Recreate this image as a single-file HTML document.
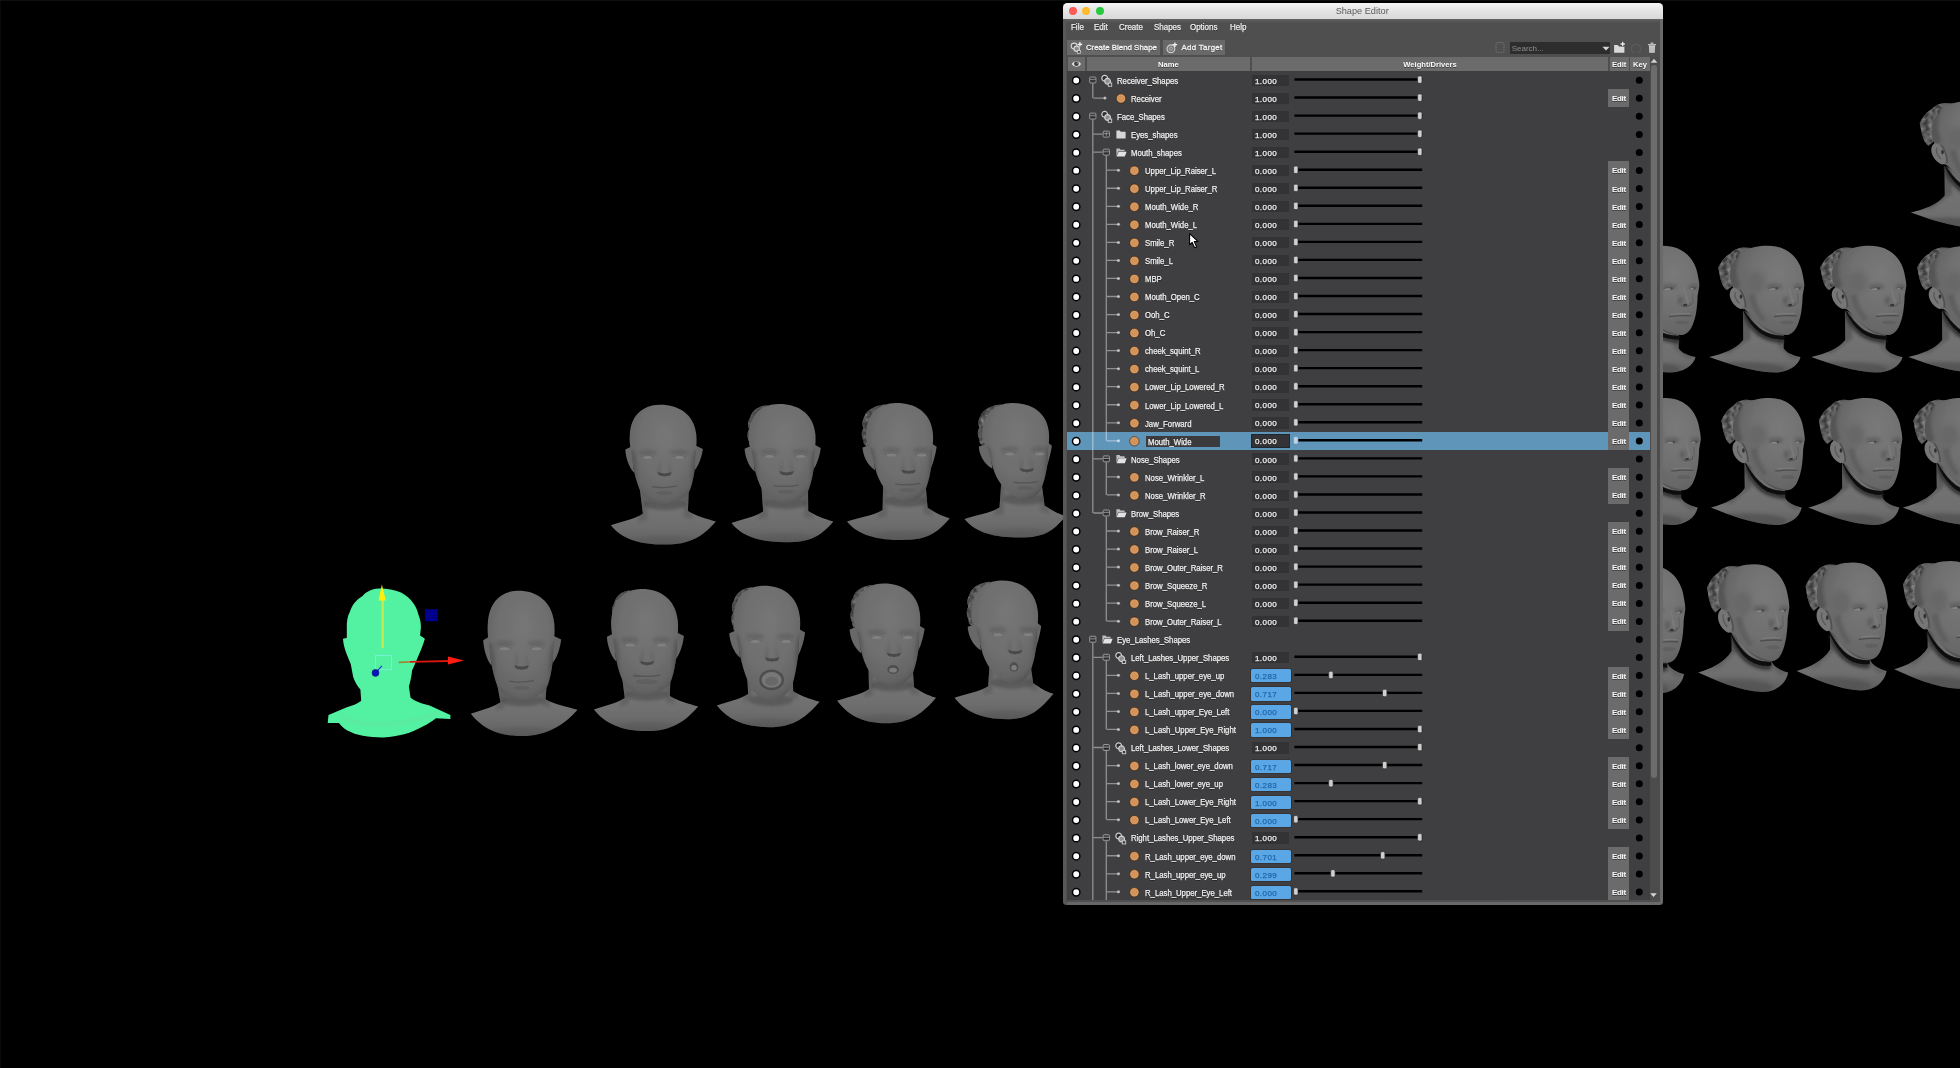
<!DOCTYPE html>
<html><head><meta charset="utf-8"><title>Shape Editor</title>
<style>
html,body{margin:0;padding:0;background:#000;}
body{width:1960px;height:1068px;overflow:hidden;position:relative;box-shadow:inset 0 1px 0 #0e0e0e,inset 1px 0 0 #0a0a0a;font-family:"Liberation Sans",sans-serif;}
#heads{position:absolute;left:0;top:0;}
#ov{position:absolute;left:0;top:0;pointer-events:none;}
#win{will-change:transform;position:absolute;left:1063.3px;top:3px;width:600px;height:901.8px;background:linear-gradient(90deg,#585858 0,#585858 4px,#666 5px,#6a6a6a 100%);border-radius:4.5px 4.5px 3.5px 3.5px;overflow:hidden;}
#title{position:absolute;left:0;top:0;width:600px;height:15.7px;background:linear-gradient(#f6f6f6,#e6e5e6 45%,#dad9da);}
.tl{position:absolute;top:4.1px;width:7.8px;height:7.8px;border-radius:50%;}
#ttext{position:absolute;left:0;width:598.4px;top:3.4px;text-align:center;font-size:9.2px;line-height:11px;color:#5a5a5a;}
#inner{position:absolute;left:2.7px;top:15.7px;width:594.2px;height:883.3px;background:linear-gradient(#666 0,#5a5a5a 1.5px,#4f4f4f 4px,#4f4f4f 100%);}
.menu{position:absolute;top:3.6px;transform:scaleX(.95);transform-origin:0 50%;font-size:8.4px;line-height:10px;color:#ededed;text-shadow:0 .8px .4px rgba(0,0,0,.55);-webkit-text-stroke:.25px #ededed;}
.tbtn{position:absolute;top:21.5px;height:14.5px;background:#686868;}
.tbtn span{position:absolute;top:2.6px;font-size:7.9px;line-height:10px;color:#f2f2f2;white-space:nowrap;text-shadow:0 .8px .4px rgba(0,0,0,.5);-webkit-text-stroke:.3px #f2f2f2;}
#search{position:absolute;left:444px;top:23.3px;width:100.4px;height:11.7px;background:#2d2d2d;border-radius:1px;}
#search span{position:absolute;left:2px;top:2.4px;font-size:8px;line-height:10px;color:#8c8c8c;}
.hd{position:absolute;top:38.5px;height:13.6px;background:#6b6b6b;text-align:center;}
.hd span{display:block;font-size:7.6px;line-height:13.6px;font-weight:bold;color:#fbfbfb;white-space:nowrap;text-shadow:0 .8px .4px rgba(0,0,0,.45);margin-top:.4px;}
#tree{position:absolute;left:1.7px;top:52.6px;width:582.3px;height:828.7px;background:#3f3f41;overflow:hidden;}
.selrow{position:absolute;left:0;width:582.3px;height:18.5px;background:#5f95b9;}
.lab{position:absolute;font-size:8.4px;line-height:18.04px;height:18.04px;color:#f1f1f1;white-space:nowrap;transform:scaleX(.925);transform-origin:0 50%;text-shadow:0 .9px .5px rgba(0,0,0,.6);-webkit-text-stroke:.25px #f1f1f1;margin-top:.5px;}
.ledit{position:absolute;width:74.8px;height:11.2px;background:#3b3b3d;}
.ledit span{position:absolute;left:2px;top:0;font-size:8.4px;line-height:11.2px;color:#f1f1f1;transform:scaleX(.925);transform-origin:0 50%;white-space:nowrap;-webkit-text-stroke:.25px #f1f1f1;margin-top:.4px;}
.num,.nums,.numb{position:absolute;}
.num{left:184.5px;width:37.5px;height:11.5px;background:#333335;}
.nums{left:184.5px;width:37.5px;height:11.5px;background:#333335;box-shadow:0 0 0 1px #1c2730;}
.numb{left:183.5px;width:39.9px;height:13.2px;background:#5ba7e5;border-radius:1.6px;box-shadow:0 0 0 .6px #2a2a2c;}
.num span,.nums span{position:absolute;left:3.1px;top:0;font-size:8px;line-height:11.5px;letter-spacing:.45px;color:#f3f3f3;text-shadow:0 .8px .4px rgba(0,0,0,.6);-webkit-text-stroke:.25px #f3f3f3;margin-top:1.1px;}
.numb span{position:absolute;left:4.1px;top:0;font-size:8px;line-height:13.2px;letter-spacing:.45px;color:#1f66ac;-webkit-text-stroke:.25px #1f66ac;margin-top:1px;}
.edit{position:absolute;left:541px;width:21.1px;height:18.1px;background:#6b6b6b;text-align:center;}
.edit span{display:block;font-size:8px;line-height:18.04px;color:#fafafa;font-weight:bold;letter-spacing:-.3px;text-shadow:0 .8px .4px rgba(0,0,0,.45);margin-top:1px;}
#sbar{position:absolute;left:584px;top:38.5px;width:10.2px;height:842.8px;background:#4c4c4c;}
#shandle{position:absolute;left:585.3px;top:46.7px;width:6.1px;height:713px;border-radius:3px;background:#6c6c6c;}

</style></head>
<body>
<svg id="heads" width="1960" height="1068" viewBox="0 0 1960 1068">
<defs>
<filter id="b1" x="-10%" y="-10%" width="120%" height="120%"><feGaussianBlur stdDeviation="0.7"/></filter>
<filter id="b2" x="-30%" y="-30%" width="160%" height="160%"><feGaussianBlur stdDeviation="1.6"/></filter>
<filter id="bun" x="0" y="0" width="100%" height="100%"><feTurbulence type="fractalNoise" baseFrequency="0.22" numOctaves="2" seed="7" result="n"/><feColorMatrix in="n" type="matrix" values="0 0 0 0 0  0 0 0 0 0  0 0 0 0 0  1.6 1.6 0 0 -1.1" result="a"/><feFlood flood-color="#3a3a3a"/><feComposite operator="in" in2="a" result="d"/><feComposite in="d" in2="SourceGraphic" operator="in" result="dd"/><feColorMatrix in="n" type="matrix" values="0 0 0 0 0  0 0 0 0 0  0 0 0 0 0  0 -2.2 -1 0 1.35" result="a2"/><feFlood flood-color="#909090"/><feComposite operator="in" in2="a2" result="l"/><feComposite in="l" in2="SourceGraphic" operator="in" result="ll"/><feMerge><feMergeNode in="SourceGraphic"/><feMergeNode in="dd"/><feMergeNode in="ll"/></feMerge></filter>
<filter id="b3" x="-40%" y="-40%" width="180%" height="180%"><feGaussianBlur stdDeviation="3"/></filter>
<radialGradient id="gHead" cx="0.51" cy="0.40" r="0.66" fx="0.53" fy="0.30">
<stop offset="0" stop-color="#767676"/><stop offset="0.6" stop-color="#6e6e6e"/><stop offset="0.86" stop-color="#646464"/><stop offset="1" stop-color="#4e4e4e"/>
</radialGradient>
<linearGradient id="gSh" x1="0" y1="0" x2="0" y2="1">
<stop offset="0" stop-color="#666666"/><stop offset="0.4" stop-color="#737373"/><stop offset="0.75" stop-color="#6c6c6c"/><stop offset="1" stop-color="#5c5c5c"/>
</linearGradient>
<radialGradient id="gQHead" cx="0.62" cy="0.42" r="0.74" fx="0.66" fy="0.30">
<stop offset="0" stop-color="#797979"/><stop offset="0.5" stop-color="#707070"/><stop offset="0.82" stop-color="#646464"/><stop offset="1" stop-color="#505050"/>
</radialGradient>
<linearGradient id="gQSh" x1="0" y1="0" x2="0" y2="1">
<stop offset="0" stop-color="#6a6a6a"/><stop offset="0.5" stop-color="#727272"/><stop offset="0.8" stop-color="#6e6e6e"/><stop offset="1" stop-color="#5c5c5c"/>
</linearGradient>
<linearGradient id="gQNeck" x1="0" y1="0" x2="1" y2="0">
<stop offset="0" stop-color="#595959"/><stop offset="0.5" stop-color="#6e6e6e"/><stop offset="1" stop-color="#5a5a5a"/>
</linearGradient>
</defs>
<clipPath id="h1s"><path d="M470.8 713.7 C480.8 710.2 491.5 707.7 500.5 702.2 L496.5 680.8 L547.0 680.8 L545.5 699.3 C553.5 704.3 567.5 706.8 577.5 709.8 C564.5 724.8 546.8 736.1 521.8 736.1 C496.8 736.1 481.8 727.7 470.8 713.7Z"/></clipPath><clipPath id="h1"><path d="M517.2 590.8 C535.0 590.3 552.0 599.8 554.3 623.3 C555.0 630.8 554.4 636.8 553.6 642.8 L552.7 661.8 C551.8 668.8 550.6 676.8 548.0 684.8 C545.0 692.8 533.0 700.6 521.8 700.6 C511.0 700.6 501.0 693.8 497.5 686.8 C494.6 678.8 492.6 670.8 491.2 662.8 L488.8 642.8 C487.6 634.8 487.4 628.8 487.8 623.8 C489.0 601.8 501.0 591.3 517.2 590.8Z"/></clipPath>
<g filter="url(#b1)">
<path d="M470.8 713.7 C480.8 710.2 491.5 707.7 500.5 702.2 L496.5 680.8 L547.0 680.8 L545.5 699.3 C553.5 704.3 567.5 706.8 577.5 709.8 C564.5 724.8 546.8 736.1 521.8 736.1 C496.8 736.1 481.8 727.7 470.8 713.7Z" fill="url(#gSh)"/>
<g clip-path="url(#h1s)">
<path d="M499.5 676.8L505.5 676.8L504.5 708.2L495.5 710.2Z" fill="#525252" opacity=".45" filter="url(#b2)"/>
<path d="M546.5 676.8L540.5 676.8L541.5 705.3L550.5 707.3Z" fill="#525252" opacity=".45" filter="url(#b2)"/>
<ellipse cx="522.0" cy="700.3" rx="22.0" ry="6" fill="#4c4c4c" opacity=".6" filter="url(#b2)"/>
<ellipse cx="521.8" cy="734.1" rx="30" ry="6" fill="#545454" opacity=".35" filter="url(#b2)"/>
</g>
<path d="M489.0 636.8 L483.2 640.3 C483.6 648.8 486.5 659.8 491.5 665.8 Z" fill="#686868"/><path d="M553.4 635.8 L561.2 639.5 C560.0 648.8 557.0 657.8 552.5 663.3 Z" fill="#666"/>
<path d="M517.2 590.8 C535.0 590.3 552.0 599.8 554.3 623.3 C555.0 630.8 554.4 636.8 553.6 642.8 L552.7 661.8 C551.8 668.8 550.6 676.8 548.0 684.8 C545.0 692.8 533.0 700.6 521.8 700.6 C511.0 700.6 501.0 693.8 497.5 686.8 C494.6 678.8 492.6 670.8 491.2 662.8 L488.8 642.8 C487.6 634.8 487.4 628.8 487.8 623.8 C489.0 601.8 501.0 591.3 517.2 590.8Z" fill="url(#gHead)"/>
<g clip-path="url(#h1)">
<ellipse cx="490.0" cy="664.8" rx="5" ry="22" fill="#484848" opacity=".45" filter="url(#b2)"/>
<ellipse cx="554.0" cy="664.8" rx="5" ry="22" fill="#484848" opacity=".5" filter="url(#b2)"/>
<ellipse cx="504.5" cy="643.8" rx="9" ry="3.2" fill="#5a5a5a" opacity=".5" filter="url(#b2)"/>
<ellipse cx="504.5" cy="648.2" rx="5.2" ry="2.1" fill="#808080" filter="url(#b1)"/>
<path d="M498.5 648.6 Q504.5 644.6 510.5 648.4" stroke="#5a5a5a" stroke-width=".9" fill="none" opacity=".8"/>
<ellipse cx="536.5" cy="643.8" rx="9" ry="3.2" fill="#5a5a5a" opacity=".5" filter="url(#b2)"/>
<ellipse cx="536.5" cy="648.2" rx="5.2" ry="2.1" fill="#808080" filter="url(#b1)"/>
<path d="M530.5 648.6 Q536.5 644.6 542.5 648.4" stroke="#5a5a5a" stroke-width=".9" fill="none" opacity=".8"/>
<path d="M517.8 650.8 L514.4 663.8 L517.4 667.3 Z" fill="#5a5a5a" opacity=".45" filter="url(#b2)"/>
<path d="M525.0 650.8 L528.8 663.8 L525.8 667.3 Z" fill="#5c5c5c" opacity=".4" filter="url(#b2)"/>
<path d="M514.6 665.0 Q515.4 670.0 519.4 669.2 L521.6 670.0 L523.8 669.2 Q528.0 670.0 528.6 665.0 Q521.6 668.2 514.6 665.0Z" fill="#424242" opacity=".85" filter="url(#b1)"/>
<path d="M509.0 681.1 Q521.5 683.2 534.0 680.6" stroke="#525252" stroke-width="1.3" fill="none" opacity=".9"/>
<ellipse cx="521.5" cy="687.8" rx="8" ry="2" fill="#5a5a5a" opacity=".55" filter="url(#b1)"/>
</g></g>
<clipPath id="h2s"><path d="M593.9 709.5 C603.9 706.0 615.8 703.5 624.8 698.0 L621.9 675.9 L670.5 675.9 L669.8 695.9 C677.8 700.9 688.2 703.4 698.2 706.4 C685.2 721.4 671.5 731.1 646.5 731.1 C621.5 731.1 604.9 723.5 593.9 709.5Z"/></clipPath><clipPath id="h2"><path d="M640.7 588.9 C658.5 588.4 675.5 597.6 677.8 620.3 C678.5 627.6 677.9 633.4 677.1 639.2 L676.2 657.6 C675.3 664.3 674.1 672.1 671.5 679.8 C668.7 687.5 657.8 695.1 646.9 695.1 C636.3 695.1 627.0 688.5 623.1 681.7 C619.6 674.0 617.5 666.3 616.0 658.5 L613.1 639.2 C611.1 631.4 610.9 625.6 611.3 620.8 C612.5 599.5 624.5 589.4 640.7 588.9Z"/></clipPath>
<g filter="url(#b1)">
<path d="M593.9 709.5 C603.9 706.0 615.8 703.5 624.8 698.0 L621.9 675.9 L670.5 675.9 L669.8 695.9 C677.8 700.9 688.2 703.4 698.2 706.4 C685.2 721.4 671.5 731.1 646.5 731.1 C621.5 731.1 604.9 723.5 593.9 709.5Z" fill="url(#gSh)"/>
<g clip-path="url(#h2s)">
<path d="M623.8 672.1L629.8 672.1L628.8 704.0L619.8 706.0Z" fill="#525252" opacity=".45" filter="url(#b2)"/>
<path d="M670.8 672.1L664.8 672.1L665.8 701.9L674.8 703.9Z" fill="#525252" opacity=".45" filter="url(#b2)"/>
<ellipse cx="646.9" cy="694.8" rx="22.0" ry="6" fill="#4c4c4c" opacity=".6" filter="url(#b2)"/>
<ellipse cx="646.5" cy="729.1" rx="30" ry="6" fill="#545454" opacity=".35" filter="url(#b2)"/>
</g>
<path d="M630.5 590.4 C622.5 590.4 615.6 595.7 614.1 603.4 C611.6 607.3 611.2 612.1 613.0 616.0 C610.6 619.8 611.0 625.6 613.2 629.5 C612.6 632.4 614.6 635.3 613.5 636.3 L620.5 598.6Z" fill="#636363" filter="url(#bun)"/>
<path d="M613.5 633.4 L606.9 636.8 C607.3 645.0 610.4 655.6 616.2 661.4 Z" fill="#686868"/><path d="M676.9 632.4 L684.0 636.0 C682.8 645.0 679.9 653.7 676.0 659.0 Z" fill="#666"/>
<path d="M640.7 588.9 C658.5 588.4 675.5 597.6 677.8 620.3 C678.5 627.6 677.9 633.4 677.1 639.2 L676.2 657.6 C675.3 664.3 674.1 672.1 671.5 679.8 C668.7 687.5 657.8 695.1 646.9 695.1 C636.3 695.1 627.0 688.5 623.1 681.7 C619.6 674.0 617.5 666.3 616.0 658.5 L613.1 639.2 C611.1 631.4 610.9 625.6 611.3 620.8 C612.5 599.5 624.5 589.4 640.7 588.9Z" fill="url(#gHead)"/>
<g clip-path="url(#h2)">
<ellipse cx="614.1" cy="660.5" rx="5" ry="22" fill="#484848" opacity=".45" filter="url(#b2)"/>
<ellipse cx="677.7" cy="660.5" rx="5" ry="22" fill="#484848" opacity=".5" filter="url(#b2)"/>
<ellipse cx="630.0" cy="640.2" rx="9" ry="3.2" fill="#5a5a5a" opacity=".5" filter="url(#b2)"/>
<ellipse cx="630.0" cy="644.4" rx="5.2" ry="2.1" fill="#808080" filter="url(#b1)"/>
<path d="M624.0 644.8 Q630.0 640.9 636.0 644.6" stroke="#5a5a5a" stroke-width=".9" fill="none" opacity=".8"/>
<ellipse cx="661.6" cy="640.2" rx="9" ry="3.2" fill="#5a5a5a" opacity=".5" filter="url(#b2)"/>
<ellipse cx="661.6" cy="644.4" rx="5.2" ry="2.1" fill="#808080" filter="url(#b1)"/>
<path d="M655.6 644.8 Q661.6 640.9 667.6 644.6" stroke="#5a5a5a" stroke-width=".9" fill="none" opacity=".8"/>
<path d="M643.1 646.9 L639.9 659.5 L642.9 662.9 Z" fill="#5a5a5a" opacity=".45" filter="url(#b2)"/>
<path d="M650.3 646.9 L654.3 659.5 L651.3 662.9 Z" fill="#5c5c5c" opacity=".4" filter="url(#b2)"/>
<path d="M640.1 660.7 Q640.9 665.5 644.9 664.7 L647.1 665.5 L649.3 664.7 Q653.5 665.5 654.1 660.7 Q647.1 663.7 640.1 660.7Z" fill="#424242" opacity=".85" filter="url(#b1)"/>
<path d="M633.3 675.4 Q646.8 677.9 660.3 675.0" stroke="#555" stroke-width="1.6" fill="none" filter="url(#b1)"/>
<ellipse cx="646.8" cy="681.7" rx="11" ry="2.6" fill="#5a5a5a" opacity=".55" filter="url(#b1)"/>
</g></g>
<clipPath id="h3s"><path d="M716.8 705.6 C726.8 702.1 739.2 699.6 748.2 694.1 L746.9 672.2 L792.6 672.2 L793.2 691.2 C801.2 696.2 809.6 698.7 819.6 701.7 C806.6 716.7 794.3 727.2 769.3 727.2 C744.3 727.2 727.8 719.6 716.8 705.6Z"/></clipPath><clipPath id="h3"><path d="M762.8 585.8 C780.6 585.3 797.6 594.4 799.9 617.0 C800.6 624.2 800.0 630.0 799.2 635.7 L798.3 654.0 C797.4 660.7 796.2 670.2 793.6 680.6 C791.2 691.9 781.9 700.3 771.5 700.3 C761.1 700.3 752.9 692.9 748.4 682.5 C744.0 672.1 741.6 662.6 739.9 654.9 L736.4 635.7 C733.2 628.0 733.0 622.3 733.4 617.5 C734.6 596.4 746.6 586.3 762.8 585.8Z"/></clipPath>
<g filter="url(#b1)">
<path d="M716.8 705.6 C726.8 702.1 739.2 699.6 748.2 694.1 L746.9 672.2 L792.6 672.2 L793.2 691.2 C801.2 696.2 809.6 698.7 819.6 701.7 C806.6 716.7 794.3 727.2 769.3 727.2 C744.3 727.2 727.8 719.6 716.8 705.6Z" fill="url(#gSh)"/>
<g clip-path="url(#h3s)">
<path d="M747.2 668.4L753.2 668.4L752.2 700.1L743.2 702.1Z" fill="#525252" opacity=".45" filter="url(#b2)"/>
<path d="M794.2 668.4L788.2 668.4L789.2 697.2L798.2 699.2Z" fill="#525252" opacity=".45" filter="url(#b2)"/>
<ellipse cx="771.1" cy="700.0" rx="22.0" ry="6" fill="#4c4c4c" opacity=".6" filter="url(#b2)"/>
<ellipse cx="769.3" cy="725.2" rx="30" ry="6" fill="#545454" opacity=".35" filter="url(#b2)"/>
</g>
<path d="M752.6 587.2 C744.6 587.2 735.6 592.5 734.1 600.2 C731.6 604.0 731.2 608.8 733.0 612.7 C730.6 616.5 731.0 622.3 733.2 626.1 C732.6 629.0 734.6 631.9 735.6 632.8 L742.6 595.4Z" fill="#636363" filter="url(#bun)"/>
<path d="M737.1 630.0 L729.3 633.3 C729.7 641.5 733.1 652.0 740.1 657.8 Z" fill="#686868"/><path d="M799.0 629.0 L805.1 632.6 C803.9 641.5 801.1 650.1 798.1 655.4 Z" fill="#666"/>
<path d="M762.8 585.8 C780.6 585.3 797.6 594.4 799.9 617.0 C800.6 624.2 800.0 630.0 799.2 635.7 L798.3 654.0 C797.4 660.7 796.2 670.2 793.6 680.6 C791.2 691.9 781.9 700.3 771.5 700.3 C761.1 700.3 752.9 692.9 748.4 682.5 C744.0 672.1 741.6 662.6 739.9 654.9 L736.4 635.7 C733.2 628.0 733.0 622.3 733.4 617.5 C734.6 596.4 746.6 586.3 762.8 585.8Z" fill="url(#gHead)"/>
<g clip-path="url(#h3)">
<ellipse cx="737.1" cy="656.8" rx="5" ry="22" fill="#484848" opacity=".45" filter="url(#b2)"/>
<ellipse cx="800.1" cy="656.8" rx="5" ry="22" fill="#484848" opacity=".5" filter="url(#b2)"/>
<ellipse cx="755.1" cy="636.7" rx="9" ry="3.2" fill="#5a5a5a" opacity=".5" filter="url(#b2)"/>
<ellipse cx="755.1" cy="640.9" rx="5.2" ry="2.1" fill="#808080" filter="url(#b1)"/>
<path d="M749.1 641.3 Q755.1 637.4 761.1 641.1" stroke="#5a5a5a" stroke-width=".9" fill="none" opacity=".8"/>
<ellipse cx="786.1" cy="636.7" rx="9" ry="3.2" fill="#5a5a5a" opacity=".5" filter="url(#b2)"/>
<ellipse cx="786.1" cy="640.9" rx="5.2" ry="2.1" fill="#808080" filter="url(#b1)"/>
<path d="M780.1 641.3 Q786.1 637.4 792.1 641.1" stroke="#5a5a5a" stroke-width=".9" fill="none" opacity=".8"/>
<path d="M767.9 643.4 L765.0 655.9 L768.0 659.2 Z" fill="#5a5a5a" opacity=".45" filter="url(#b2)"/>
<path d="M775.1 643.4 L779.4 655.9 L776.4 659.2 Z" fill="#5c5c5c" opacity=".4" filter="url(#b2)"/>
<path d="M765.2 657.0 Q766.0 661.8 770.0 661.1 L772.2 661.8 L774.4 661.1 Q778.6 661.8 779.2 657.0 Q772.2 660.1 765.2 657.0Z" fill="#424242" opacity=".85" filter="url(#b1)"/>
<ellipse cx="771.6" cy="679.9" rx="12.4" ry="10.4" fill="#4e4e4e"/>
<ellipse cx="771.6" cy="679.9" rx="10" ry="7.8" fill="#777"/>
<ellipse cx="771.6" cy="681.3" rx="6.5" ry="4.5" fill="#686868"/>
</g></g>
<clipPath id="h4s"><path d="M837.1 700.8 C847.1 697.3 860.0 694.8 869.0 689.3 L868.5 667.2 L912.7 667.2 L914.0 687.3 C922.0 692.3 926.1 694.8 936.1 697.8 C923.1 712.8 911.1 723.3 886.1 723.3 C861.1 723.3 848.1 714.8 837.1 700.8Z"/></clipPath><clipPath id="h4"><path d="M882.9 583.5 C900.7 583.0 917.7 591.9 920.0 613.7 C920.7 620.7 920.1 626.3 919.3 631.9 L918.4 649.5 C917.5 656.0 916.3 663.5 913.7 670.9 C911.5 678.4 903.0 685.6 892.9 685.6 C882.7 685.6 875.0 679.3 870.2 672.8 C865.2 665.3 862.8 657.9 861.0 650.5 L857.1 631.9 C853.3 624.4 853.1 618.8 853.5 614.2 C854.7 593.7 866.7 584.0 882.9 583.5Z"/></clipPath>
<g filter="url(#b1)">
<path d="M837.1 700.8 C847.1 697.3 860.0 694.8 869.0 689.3 L868.5 667.2 L912.7 667.2 L914.0 687.3 C922.0 692.3 926.1 694.8 936.1 697.8 C923.1 712.8 911.1 723.3 886.1 723.3 C861.1 723.3 848.1 714.8 837.1 700.8Z" fill="url(#gSh)"/>
<g clip-path="url(#h4s)">
<path d="M868.0 663.5L874.0 663.5L873.0 695.3L864.0 697.3Z" fill="#525252" opacity=".45" filter="url(#b2)"/>
<path d="M915.0 663.5L909.0 663.5L910.0 693.3L919.0 695.3Z" fill="#525252" opacity=".45" filter="url(#b2)"/>
<ellipse cx="892.3" cy="685.3" rx="22.0" ry="6" fill="#4c4c4c" opacity=".6" filter="url(#b2)"/>
<ellipse cx="886.1" cy="721.3" rx="30" ry="6" fill="#545454" opacity=".35" filter="url(#b2)"/>
</g>
<path d="M872.7 584.9 C864.7 584.9 854.6 590.0 853.1 597.5 C850.6 601.2 850.2 605.8 852.0 609.5 C849.6 613.3 850.0 618.8 852.2 622.6 C851.6 625.4 853.6 628.1 855.7 629.1 L862.7 592.8Z" fill="#636363" filter="url(#bun)"/>
<path d="M858.0 626.3 L849.6 629.5 C850.0 637.4 853.5 647.7 861.2 653.2 Z" fill="#686868"/><path d="M919.1 625.4 L924.6 628.8 C923.4 637.4 920.7 645.8 918.2 650.9 Z" fill="#666"/>
<path d="M882.9 583.5 C900.7 583.0 917.7 591.9 920.0 613.7 C920.7 620.7 920.1 626.3 919.3 631.9 L918.4 649.5 C917.5 656.0 916.3 663.5 913.7 670.9 C911.5 678.4 903.0 685.6 892.9 685.6 C882.7 685.6 875.0 679.3 870.2 672.8 C865.2 665.3 862.8 657.9 861.0 650.5 L857.1 631.9 C853.3 624.4 853.1 618.8 853.5 614.2 C854.7 593.7 866.7 584.0 882.9 583.5Z" fill="url(#gHead)"/>
<g clip-path="url(#h4)">
<ellipse cx="857.7" cy="652.3" rx="5" ry="22" fill="#484848" opacity=".45" filter="url(#b2)"/>
<ellipse cx="920.4" cy="652.3" rx="5" ry="22" fill="#484848" opacity=".5" filter="url(#b2)"/>
<ellipse cx="876.8" cy="632.8" rx="9" ry="3.2" fill="#5a5a5a" opacity=".5" filter="url(#b2)"/>
<ellipse cx="876.8" cy="636.9" rx="5.2" ry="2.1" fill="#808080" filter="url(#b1)"/>
<path d="M870.8 637.3 Q876.8 633.5 882.8 637.1" stroke="#5a5a5a" stroke-width=".9" fill="none" opacity=".8"/>
<ellipse cx="907.5" cy="632.8" rx="9" ry="3.2" fill="#5a5a5a" opacity=".5" filter="url(#b2)"/>
<ellipse cx="907.5" cy="636.9" rx="5.2" ry="2.1" fill="#808080" filter="url(#b1)"/>
<path d="M901.5 637.3 Q907.5 633.5 913.5 637.1" stroke="#5a5a5a" stroke-width=".9" fill="none" opacity=".8"/>
<path d="M889.4 639.3 L886.7 651.4 L889.7 654.6 Z" fill="#5a5a5a" opacity=".45" filter="url(#b2)"/>
<path d="M896.6 639.3 L901.1 651.4 L898.1 654.6 Z" fill="#5c5c5c" opacity=".4" filter="url(#b2)"/>
<path d="M886.9 652.5 Q887.7 657.2 891.7 656.4 L893.9 657.2 L896.1 656.4 Q900.3 657.2 900.9 652.5 Q893.9 655.5 886.9 652.5Z" fill="#424242" opacity=".85" filter="url(#b1)"/>
<ellipse cx="893.1" cy="669.5" rx="5.8" ry="4.4" fill="#4e4e4e" filter="url(#b1)"/>
<ellipse cx="893.1" cy="670.2" rx="3.8" ry="2.4" fill="#7c7c7c"/>
</g></g>
<clipPath id="h5s"><path d="M954.5 697.8 C964.5 694.3 979.2 691.8 988.2 686.3 L989.5 664.5 L1030.5 664.5 L1033.2 683.2 C1041.2 688.2 1043.5 690.7 1053.5 693.7 C1040.5 708.7 1031.5 719.2 1006.5 719.2 C981.5 719.2 965.5 711.8 954.5 697.8Z"/></clipPath><clipPath id="h5"><path d="M1000.7 580.4 C1018.5 579.9 1035.5 588.8 1037.8 610.8 C1038.5 617.8 1037.9 623.4 1037.1 629.0 L1036.2 646.8 C1035.3 653.3 1034.1 660.8 1031.5 668.3 C1029.7 675.8 1023.1 683.1 1013.5 683.1 C1003.5 683.1 997.0 676.7 991.6 670.2 C985.6 662.7 983.0 655.2 981.0 647.7 L976.3 629.0 C971.1 621.5 970.9 615.9 971.3 611.3 C972.5 590.7 984.5 580.9 1000.7 580.4Z"/></clipPath>
<g filter="url(#b1)">
<path d="M954.5 697.8 C964.5 694.3 979.2 691.8 988.2 686.3 L989.5 664.5 L1030.5 664.5 L1033.2 683.2 C1041.2 688.2 1043.5 690.7 1053.5 693.7 C1040.5 708.7 1031.5 719.2 1006.5 719.2 C981.5 719.2 965.5 711.8 954.5 697.8Z" fill="url(#gSh)"/>
<g clip-path="url(#h5s)">
<path d="M987.2 660.8L993.2 660.8L992.2 692.3L983.2 694.3Z" fill="#525252" opacity=".45" filter="url(#b2)"/>
<path d="M1034.2 660.8L1028.2 660.8L1029.2 689.2L1038.2 691.2Z" fill="#525252" opacity=".45" filter="url(#b2)"/>
<ellipse cx="1012.5" cy="682.8" rx="22.0" ry="6" fill="#4c4c4c" opacity=".6" filter="url(#b2)"/>
<ellipse cx="1006.5" cy="717.2" rx="30" ry="6" fill="#545454" opacity=".35" filter="url(#b2)"/>
</g>
<path d="M990.5 581.8 C982.5 581.8 971.0 586.9 969.5 594.4 C967.0 598.2 966.6 602.8 968.4 606.6 C966.0 610.3 966.4 615.9 968.6 619.7 C968.0 622.5 970.0 625.3 973.5 626.2 L980.5 589.8Z" fill="#636363" filter="url(#bun)"/>
<path d="M977.5 623.4 L967.7 626.7 C968.1 634.6 972.0 644.9 981.0 650.5 Z" fill="#686868"/><path d="M1036.9 622.5 L1041.2 625.9 C1040.0 634.6 1037.5 643.0 1036.0 648.2 Z" fill="#666"/>
<path d="M1000.7 580.4 C1018.5 579.9 1035.5 588.8 1037.8 610.8 C1038.5 617.8 1037.9 623.4 1037.1 629.0 L1036.2 646.8 C1035.3 653.3 1034.1 660.8 1031.5 668.3 C1029.7 675.8 1023.1 683.1 1013.5 683.1 C1003.5 683.1 997.0 676.7 991.6 670.2 C985.6 662.7 983.0 655.2 981.0 647.7 L976.3 629.0 C971.1 621.5 970.9 615.9 971.3 611.3 C972.5 590.7 984.5 580.9 1000.7 580.4Z" fill="url(#gHead)"/>
<g clip-path="url(#h5)">
<ellipse cx="976.5" cy="649.6" rx="5" ry="22" fill="#484848" opacity=".45" filter="url(#b2)"/>
<ellipse cx="1038.5" cy="649.6" rx="5" ry="22" fill="#484848" opacity=".5" filter="url(#b2)"/>
<ellipse cx="998.0" cy="630.0" rx="9" ry="3.2" fill="#5a5a5a" opacity=".5" filter="url(#b2)"/>
<ellipse cx="998.0" cy="634.1" rx="5.2" ry="2.1" fill="#808080" filter="url(#b1)"/>
<path d="M992.0 634.4 Q998.0 630.7 1004.0 634.3" stroke="#5a5a5a" stroke-width=".9" fill="none" opacity=".8"/>
<ellipse cx="1028.0" cy="630.0" rx="9" ry="3.2" fill="#5a5a5a" opacity=".5" filter="url(#b2)"/>
<ellipse cx="1028.0" cy="634.1" rx="5.2" ry="2.1" fill="#808080" filter="url(#b1)"/>
<path d="M1022.0 634.4 Q1028.0 630.7 1034.0 634.3" stroke="#5a5a5a" stroke-width=".9" fill="none" opacity=".8"/>
<path d="M1010.3 636.5 L1007.9 648.7 L1010.9 651.9 Z" fill="#5a5a5a" opacity=".45" filter="url(#b2)"/>
<path d="M1017.5 636.5 L1022.3 648.7 L1019.3 651.9 Z" fill="#5c5c5c" opacity=".4" filter="url(#b2)"/>
<path d="M1008.1 649.8 Q1008.9 654.5 1012.9 653.7 L1015.1 654.5 L1017.3 653.7 Q1021.5 654.5 1022.1 649.8 Q1015.1 652.8 1008.1 649.8Z" fill="#424242" opacity=".85" filter="url(#b1)"/>
<ellipse cx="1014.0" cy="666.9" rx="4.4" ry="4.6" fill="#4e4e4e" filter="url(#b1)"/>
<ellipse cx="1014.0" cy="667.7" rx="2.8" ry="2.6" fill="#7c7c7c"/>
</g></g>
<clipPath id="h6s"><path d="M610.8 525.2 C620.8 521.7 633.9 519.2 642.9 513.7 L639.5 486.4 L689.0 486.4 L687.9 510.9 C695.9 515.9 705.9 518.4 715.9 521.4 C702.9 536.4 690.0 544.6 665.0 544.6 C640.0 544.6 621.8 539.2 610.8 525.2Z"/></clipPath><clipPath id="h6"><path d="M659.2 404.7 C677.0 404.2 694.0 412.9 696.3 434.2 C697.0 441.0 696.4 446.5 695.6 451.9 L694.7 469.2 C693.8 475.5 692.6 482.8 690.0 490.1 C687.1 497.3 675.7 504.4 664.6 504.4 C653.9 504.4 644.2 498.2 640.6 491.9 C637.4 484.6 635.3 477.3 633.8 470.1 L631.2 451.9 C629.6 444.7 629.4 439.2 629.8 434.7 C631.0 414.7 643.0 405.2 659.2 404.7Z"/></clipPath>
<g filter="url(#b1)">
<path d="M610.8 525.2 C620.8 521.7 633.9 519.2 642.9 513.7 L639.5 486.4 L689.0 486.4 L687.9 510.9 C695.9 515.9 705.9 518.4 715.9 521.4 C702.9 536.4 690.0 544.6 665.0 544.6 C640.0 544.6 621.8 539.2 610.8 525.2Z" fill="url(#gSh)"/>
<g clip-path="url(#h6s)">
<path d="M641.9 482.8L647.9 482.8L646.9 519.7L637.9 521.7Z" fill="#525252" opacity=".45" filter="url(#b2)"/>
<path d="M688.9 482.8L682.9 482.8L683.9 516.9L692.9 518.9Z" fill="#525252" opacity=".45" filter="url(#b2)"/>
<ellipse cx="664.7" cy="504.1" rx="22.0" ry="6" fill="#4c4c4c" opacity=".6" filter="url(#b2)"/>
<ellipse cx="665.0" cy="542.6" rx="30" ry="6" fill="#545454" opacity=".35" filter="url(#b2)"/>
</g>
<path d="M631.5 446.5 L625.3 449.6 C625.7 457.4 628.7 467.4 634.1 472.8 Z" fill="#686868"/><path d="M695.4 445.6 L702.9 448.9 C701.6 457.4 698.7 465.5 694.5 470.5 Z" fill="#666"/>
<path d="M659.2 404.7 C677.0 404.2 694.0 412.9 696.3 434.2 C697.0 441.0 696.4 446.5 695.6 451.9 L694.7 469.2 C693.8 475.5 692.6 482.8 690.0 490.1 C687.1 497.3 675.7 504.4 664.6 504.4 C653.9 504.4 644.2 498.2 640.6 491.9 C637.4 484.6 635.3 477.3 633.8 470.1 L631.2 451.9 C629.6 444.7 629.4 439.2 629.8 434.7 C631.0 414.7 643.0 405.2 659.2 404.7Z" fill="url(#gHead)"/>
<g clip-path="url(#h6)">
<ellipse cx="632.3" cy="471.9" rx="5" ry="22" fill="#484848" opacity=".45" filter="url(#b2)"/>
<ellipse cx="696.1" cy="471.9" rx="5" ry="22" fill="#484848" opacity=".5" filter="url(#b2)"/>
<ellipse cx="647.5" cy="452.8" rx="9" ry="3.2" fill="#5a5a5a" opacity=".5" filter="url(#b2)"/>
<ellipse cx="647.5" cy="456.8" rx="5.2" ry="2.1" fill="#808080" filter="url(#b1)"/>
<path d="M641.5 457.2 Q647.5 453.6 653.5 457.0" stroke="#5a5a5a" stroke-width=".9" fill="none" opacity=".8"/>
<ellipse cx="679.3" cy="452.8" rx="9" ry="3.2" fill="#5a5a5a" opacity=".5" filter="url(#b2)"/>
<ellipse cx="679.3" cy="456.8" rx="5.2" ry="2.1" fill="#808080" filter="url(#b1)"/>
<path d="M673.3 457.2 Q679.3 453.6 685.3 457.0" stroke="#5a5a5a" stroke-width=".9" fill="none" opacity=".8"/>
<path d="M660.7 459.2 L657.4 471.0 L660.4 474.2 Z" fill="#5a5a5a" opacity=".45" filter="url(#b2)"/>
<path d="M667.9 459.2 L671.8 471.0 L668.8 474.2 Z" fill="#5c5c5c" opacity=".4" filter="url(#b2)"/>
<path d="M657.6 472.1 Q658.4 476.6 662.4 475.9 L664.6 476.6 L666.8 475.9 Q671.0 476.6 671.6 472.1 Q664.6 475.0 657.6 472.1Z" fill="#424242" opacity=".85" filter="url(#b1)"/>
<path d="M651.9 486.7 Q664.4 488.6 676.9 486.2" stroke="#525252" stroke-width="1.3" fill="none" opacity=".9"/>
<ellipse cx="664.4" cy="492.8" rx="8" ry="2" fill="#5a5a5a" opacity=".55" filter="url(#b1)"/>
</g></g>
<clipPath id="h7s"><path d="M731.4 523.0 C741.4 519.5 754.2 517.0 763.2 511.5 L761.3 485.3 L808.0 485.3 L808.2 510.9 C816.2 515.9 823.4 518.4 833.4 521.4 C820.4 536.4 810.5 542.2 785.5 542.2 C760.5 542.2 742.4 537.0 731.4 523.0Z"/></clipPath><clipPath id="h7"><path d="M778.2 403.9 C796.0 403.4 813.0 412.0 815.3 433.3 C816.0 440.1 815.4 445.5 814.6 451.0 L813.7 468.2 C812.8 474.5 811.6 481.7 809.0 489.0 C806.5 496.2 796.6 503.3 786.1 503.3 C775.6 503.3 767.0 497.1 762.8 490.8 C758.6 483.5 756.4 476.3 754.7 469.1 L751.4 451.0 C748.6 443.7 748.4 438.3 748.8 433.8 C750.0 413.9 762.0 404.4 778.2 403.9Z"/></clipPath>
<g filter="url(#b1)">
<path d="M731.4 523.0 C741.4 519.5 754.2 517.0 763.2 511.5 L761.3 485.3 L808.0 485.3 L808.2 510.9 C816.2 515.9 823.4 518.4 833.4 521.4 C820.4 536.4 810.5 542.2 785.5 542.2 C760.5 542.2 742.4 537.0 731.4 523.0Z" fill="url(#gSh)"/>
<g clip-path="url(#h7s)">
<path d="M762.2 481.7L768.2 481.7L767.2 517.5L758.2 519.5Z" fill="#525252" opacity=".45" filter="url(#b2)"/>
<path d="M809.2 481.7L803.2 481.7L804.2 516.9L813.2 518.9Z" fill="#525252" opacity=".45" filter="url(#b2)"/>
<ellipse cx="785.8" cy="503.0" rx="22.0" ry="6" fill="#4c4c4c" opacity=".6" filter="url(#b2)"/>
<ellipse cx="785.5" cy="540.2" rx="30" ry="6" fill="#545454" opacity=".35" filter="url(#b2)"/>
</g>
<path d="M768.0 405.3 C760.0 405.3 751.7 410.2 750.2 417.5 C747.7 421.1 747.3 425.6 749.1 429.2 C746.7 432.9 747.1 438.3 749.3 441.9 C748.7 444.6 750.7 447.3 751.0 448.2 L758.0 412.9Z" fill="#636363" filter="url(#bun)"/>
<path d="M752.0 445.5 L744.6 448.7 C745.0 456.4 748.3 466.3 754.9 471.8 Z" fill="#686868"/><path d="M814.4 444.6 L820.8 448.0 C819.6 456.4 816.8 464.5 813.5 469.5 Z" fill="#666"/>
<path d="M778.2 403.9 C796.0 403.4 813.0 412.0 815.3 433.3 C816.0 440.1 815.4 445.5 814.6 451.0 L813.7 468.2 C812.8 474.5 811.6 481.7 809.0 489.0 C806.5 496.2 796.6 503.3 786.1 503.3 C775.6 503.3 767.0 497.1 762.8 490.8 C758.6 483.5 756.4 476.3 754.7 469.1 L751.4 451.0 C748.6 443.7 748.4 438.3 748.8 433.8 C750.0 413.9 762.0 404.4 778.2 403.9Z" fill="url(#gHead)"/>
<g clip-path="url(#h7)">
<ellipse cx="752.2" cy="470.9" rx="5" ry="22" fill="#484848" opacity=".45" filter="url(#b2)"/>
<ellipse cx="815.4" cy="470.9" rx="5" ry="22" fill="#484848" opacity=".5" filter="url(#b2)"/>
<ellipse cx="769.5" cy="451.9" rx="9" ry="3.2" fill="#5a5a5a" opacity=".5" filter="url(#b2)"/>
<ellipse cx="769.5" cy="455.8" rx="5.2" ry="2.1" fill="#808080" filter="url(#b1)"/>
<path d="M763.5 456.2 Q769.5 452.6 775.5 456.0" stroke="#5a5a5a" stroke-width=".9" fill="none" opacity=".8"/>
<ellipse cx="800.7" cy="451.9" rx="9" ry="3.2" fill="#5a5a5a" opacity=".5" filter="url(#b2)"/>
<ellipse cx="800.7" cy="455.8" rx="5.2" ry="2.1" fill="#808080" filter="url(#b1)"/>
<path d="M794.7 456.2 Q800.7 452.6 806.7 456.0" stroke="#5a5a5a" stroke-width=".9" fill="none" opacity=".8"/>
<path d="M782.4 458.2 L779.4 470.0 L782.4 473.1 Z" fill="#5a5a5a" opacity=".45" filter="url(#b2)"/>
<path d="M789.6 458.2 L793.8 470.0 L790.8 473.1 Z" fill="#5c5c5c" opacity=".4" filter="url(#b2)"/>
<path d="M779.6 471.1 Q780.4 475.6 784.4 474.9 L786.6 475.6 L788.8 474.9 Q793.0 475.6 793.6 471.1 Q786.6 473.9 779.6 471.1Z" fill="#424242" opacity=".85" filter="url(#b1)"/>
<path d="M773.6 485.6 Q786.1 487.5 798.6 485.2" stroke="#525252" stroke-width="1.3" fill="none" opacity=".9"/>
<ellipse cx="786.1" cy="491.7" rx="8" ry="2" fill="#5a5a5a" opacity=".55" filter="url(#b1)"/>
</g></g>
<clipPath id="h8s"><path d="M847.0 521.4 C857.0 517.9 873.6 515.4 882.6 509.9 L883.1 483.7 L925.5 483.7 L927.6 507.8 C935.6 512.8 939.8 515.3 949.8 518.3 C936.8 533.3 927.6 540.0 902.6 540.0 C877.6 540.0 858.0 535.4 847.0 521.4Z"/></clipPath><clipPath id="h8"><path d="M895.7 403.1 C913.5 402.7 930.5 411.2 932.8 432.2 C933.5 438.9 932.9 444.3 932.1 449.6 L931.2 466.6 C930.3 472.9 929.1 480.1 926.5 487.2 C924.5 494.4 917.1 501.4 907.3 501.4 C897.2 501.4 890.1 495.3 885.0 489.0 C879.5 481.9 876.9 474.7 875.0 467.5 L870.7 449.6 C866.1 442.5 865.9 437.1 866.3 432.6 C867.5 412.9 879.5 403.5 895.7 403.1Z"/></clipPath>
<g filter="url(#b1)">
<path d="M847.0 521.4 C857.0 517.9 873.6 515.4 882.6 509.9 L883.1 483.7 L925.5 483.7 L927.6 507.8 C935.6 512.8 939.8 515.3 949.8 518.3 C936.8 533.3 927.6 540.0 902.6 540.0 C877.6 540.0 858.0 535.4 847.0 521.4Z" fill="url(#gSh)"/>
<g clip-path="url(#h8s)">
<path d="M881.6 480.1L887.6 480.1L886.6 515.9L877.6 517.9Z" fill="#525252" opacity=".45" filter="url(#b2)"/>
<path d="M928.6 480.1L922.6 480.1L923.6 513.8L932.6 515.8Z" fill="#525252" opacity=".45" filter="url(#b2)"/>
<ellipse cx="906.5" cy="501.1" rx="22.0" ry="6" fill="#4c4c4c" opacity=".6" filter="url(#b2)"/>
<ellipse cx="902.6" cy="538.0" rx="30" ry="6" fill="#545454" opacity=".35" filter="url(#b2)"/>
</g>
<path d="M885.5 404.4 C877.5 404.4 866.0 409.4 864.5 416.5 C862.0 420.1 861.6 424.6 863.4 428.2 C861.0 431.7 861.4 437.1 863.6 440.7 C863.0 443.4 865.0 446.1 868.5 447.0 L875.5 412.1Z" fill="#636363" filter="url(#bun)"/>
<path d="M871.8 444.3 L862.5 447.4 C863.0 455.0 866.7 464.9 875.1 470.2 Z" fill="#686868"/><path d="M931.9 443.4 L936.7 446.7 C935.5 455.0 933.0 463.1 931.0 468.0 Z" fill="#666"/>
<path d="M895.7 403.1 C913.5 402.7 930.5 411.2 932.8 432.2 C933.5 438.9 932.9 444.3 932.1 449.6 L931.2 466.6 C930.3 472.9 929.1 480.1 926.5 487.2 C924.5 494.4 917.1 501.4 907.3 501.4 C897.2 501.4 890.1 495.3 885.0 489.0 C879.5 481.9 876.9 474.7 875.0 467.5 L870.7 449.6 C866.1 442.5 865.9 437.1 866.3 432.6 C867.5 412.9 879.5 403.5 895.7 403.1Z" fill="url(#gHead)"/>
<g clip-path="url(#h8)">
<ellipse cx="871.0" cy="469.3" rx="5" ry="22" fill="#484848" opacity=".45" filter="url(#b2)"/>
<ellipse cx="933.4" cy="469.3" rx="5" ry="22" fill="#484848" opacity=".5" filter="url(#b2)"/>
<ellipse cx="891.5" cy="450.5" rx="9" ry="3.2" fill="#5a5a5a" opacity=".5" filter="url(#b2)"/>
<ellipse cx="891.5" cy="454.5" rx="5.2" ry="2.1" fill="#808080" filter="url(#b1)"/>
<path d="M885.5 454.8 Q891.5 451.3 897.5 454.7" stroke="#5a5a5a" stroke-width=".9" fill="none" opacity=".8"/>
<ellipse cx="921.8" cy="450.5" rx="9" ry="3.2" fill="#5a5a5a" opacity=".5" filter="url(#b2)"/>
<ellipse cx="921.8" cy="454.5" rx="5.2" ry="2.1" fill="#808080" filter="url(#b1)"/>
<path d="M915.8 454.8 Q921.8 451.3 927.8 454.7" stroke="#5a5a5a" stroke-width=".9" fill="none" opacity=".8"/>
<path d="M904.0 456.8 L901.4 468.4 L904.4 471.6 Z" fill="#5a5a5a" opacity=".45" filter="url(#b2)"/>
<path d="M911.1 456.8 L915.8 468.4 L912.8 471.6 Z" fill="#5c5c5c" opacity=".4" filter="url(#b2)"/>
<path d="M901.6 469.5 Q902.4 474.0 906.4 473.3 L908.6 474.0 L910.8 473.3 Q915.0 474.0 915.6 469.5 Q908.6 472.4 901.6 469.5Z" fill="#424242" opacity=".85" filter="url(#b1)"/>
<path d="M895.1 483.9 Q907.6 485.8 920.1 483.5" stroke="#525252" stroke-width="1.3" fill="none" opacity=".9"/>
<ellipse cx="907.6" cy="489.9" rx="8" ry="2" fill="#5a5a5a" opacity=".55" filter="url(#b1)"/>
</g></g>
<clipPath id="h9s"><path d="M964.5 519.0 C974.5 515.5 990.5 513.0 999.5 507.5 L1001.3 481.9 L1041.5 481.9 L1044.5 505.5 C1052.5 510.5 1056.0 513.0 1066.0 516.0 C1053.0 531.0 1045.0 537.6 1020.0 537.6 C995.0 537.6 975.5 533.0 964.5 519.0Z"/></clipPath><clipPath id="h9"><path d="M1011.7 403.1 C1029.5 402.7 1046.5 411.0 1048.8 431.5 C1049.5 438.1 1048.9 443.4 1048.1 448.6 L1047.2 465.2 C1046.3 471.4 1045.1 478.4 1042.5 485.4 C1040.8 492.4 1034.6 499.2 1025.2 499.2 C1015.2 499.2 1009.0 493.2 1003.5 487.1 C997.2 480.1 994.5 473.1 992.5 466.1 L987.6 448.6 C982.1 441.6 981.9 436.4 982.3 432.0 C983.5 412.7 995.5 403.5 1011.7 403.1Z"/></clipPath>
<g filter="url(#b1)">
<path d="M964.5 519.0 C974.5 515.5 990.5 513.0 999.5 507.5 L1001.3 481.9 L1041.5 481.9 L1044.5 505.5 C1052.5 510.5 1056.0 513.0 1066.0 516.0 C1053.0 531.0 1045.0 537.6 1020.0 537.6 C995.0 537.6 975.5 533.0 964.5 519.0Z" fill="url(#gSh)"/>
<g clip-path="url(#h9s)">
<path d="M998.5 478.4L1004.5 478.4L1003.5 513.5L994.5 515.5Z" fill="#525252" opacity=".45" filter="url(#b2)"/>
<path d="M1045.5 478.4L1039.5 478.4L1040.5 511.5L1049.5 513.5Z" fill="#525252" opacity=".45" filter="url(#b2)"/>
<ellipse cx="1024.1" cy="498.9" rx="22.0" ry="6" fill="#4c4c4c" opacity=".6" filter="url(#b2)"/>
<ellipse cx="1020.0" cy="535.6" rx="30" ry="6" fill="#545454" opacity=".35" filter="url(#b2)"/>
</g>
<path d="M1001.5 404.4 C993.5 404.4 982.0 409.2 980.5 416.2 C978.0 419.7 977.6 424.1 979.4 427.6 C977.0 431.1 977.4 436.4 979.6 439.9 C979.0 442.5 981.0 445.1 984.5 446.0 L991.5 411.9Z" fill="#636363" filter="url(#bun)"/>
<path d="M988.9 443.4 L978.8 446.4 C979.2 453.9 983.2 463.5 992.5 468.7 Z" fill="#686868"/><path d="M1047.9 442.5 L1051.9 445.7 C1050.7 453.9 1048.3 461.7 1047.0 466.5 Z" fill="#666"/>
<path d="M1011.7 403.1 C1029.5 402.7 1046.5 411.0 1048.8 431.5 C1049.5 438.1 1048.9 443.4 1048.1 448.6 L1047.2 465.2 C1046.3 471.4 1045.1 478.4 1042.5 485.4 C1040.8 492.4 1034.6 499.2 1025.2 499.2 C1015.2 499.2 1009.0 493.2 1003.5 487.1 C997.2 480.1 994.5 473.1 992.5 466.1 L987.6 448.6 C982.1 441.6 981.9 436.4 982.3 432.0 C983.5 412.7 995.5 403.5 1011.7 403.1Z" fill="url(#gHead)"/>
<g clip-path="url(#h9)">
<ellipse cx="987.7" cy="467.9" rx="5" ry="22" fill="#484848" opacity=".45" filter="url(#b2)"/>
<ellipse cx="1049.6" cy="467.9" rx="5" ry="22" fill="#484848" opacity=".5" filter="url(#b2)"/>
<ellipse cx="1009.8" cy="449.5" rx="9" ry="3.2" fill="#5a5a5a" opacity=".5" filter="url(#b2)"/>
<ellipse cx="1009.8" cy="453.3" rx="5.2" ry="2.1" fill="#808080" filter="url(#b1)"/>
<path d="M1003.8 453.7 Q1009.8 450.2 1015.8 453.5" stroke="#5a5a5a" stroke-width=".9" fill="none" opacity=".8"/>
<ellipse cx="1039.6" cy="449.5" rx="9" ry="3.2" fill="#5a5a5a" opacity=".5" filter="url(#b2)"/>
<ellipse cx="1039.6" cy="453.3" rx="5.2" ry="2.1" fill="#808080" filter="url(#b1)"/>
<path d="M1033.6 453.7 Q1039.6 450.2 1045.6 453.5" stroke="#5a5a5a" stroke-width=".9" fill="none" opacity=".8"/>
<path d="M1022.0 455.6 L1019.7 467.0 L1022.7 470.0 Z" fill="#5a5a5a" opacity=".45" filter="url(#b2)"/>
<path d="M1029.2 455.6 L1034.1 467.0 L1031.1 470.0 Z" fill="#5c5c5c" opacity=".4" filter="url(#b2)"/>
<path d="M1019.9 468.0 Q1020.7 472.4 1024.7 471.7 L1026.9 472.4 L1029.1 471.7 Q1033.3 472.4 1033.9 468.0 Q1026.9 470.8 1019.9 468.0Z" fill="#424242" opacity=".85" filter="url(#b1)"/>
<path d="M1013.2 482.1 Q1025.7 484.0 1038.2 481.7" stroke="#525252" stroke-width="1.3" fill="none" opacity=".9"/>
<ellipse cx="1025.7" cy="488.0" rx="8" ry="2" fill="#5a5a5a" opacity=".55" filter="url(#b1)"/>
</g></g>
<clipPath id="qh"><path d="M68 10.8 C79 10.8 87 14.5 92.7 20.1 C98.5 26 101.8 33 102.8 40.2 C103.6 44 104.4 47.5 104.3 51 C103.8 54.5 103 58 102.6 61 C102.6 66 102 72 101.2 77.3 C100.6 80.5 99.8 84 98.9 86.6 C97.8 90 96.4 93.2 94.3 95.8 C92 98.5 89.5 99.9 86.6 100 C82 100.2 78 99.8 74.2 98.9 C69.5 97 65.5 94.3 61.8 91.2 C57.5 87.5 54 84 51 80.4 L44.8 74.2 L41 73.4 L33.2 53.3 C31.5 49 30.3 44 30.1 38.6 C30.5 32.5 33 27 37.1 23.2 C40.5 19 45 15.5 51 13.1 C56 11.4 62 10.8 68 10.8Z"/></clipPath><clipPath id="qs"><path d="M9.3 122.1 C22 119 36 114.5 43.3 105 L43 75 L84 98 L83.5 113 C86 118 93 120.5 100.5 122.1 C98.5 131 88 137.8 74.2 137.6 C52 137 27 128.5 9.3 122.1Z"/></clipPath>
<g transform="translate(1595.0 235.0)" filter="url(#b1)">
<g transform="">
<path d="M9.3 122.1 C22 119 36 114.5 43.3 105 L43 75 L84 98 L83.5 113 C86 118 93 120.5 100.5 122.1 C98.5 131 88 137.8 74.2 137.6 C52 137 27 128.5 9.3 122.1Z" fill="url(#gQSh)"/>
<g clip-path="url(#qs)">
<path d="M42 74 L50 78 L50 104 L30 118 L20 118 L42 106Z" fill="#4c4c4c" opacity=".55" filter="url(#b2)"/>
<path d="M84.5 99 L78 99 L78 112 L92 124 L102 124 L84 112Z" fill="#505050" opacity=".5" filter="url(#b2)"/>
<ellipse cx="45" cy="134" rx="40" ry="7" fill="#484848" opacity=".5" filter="url(#b2)"/>
</g></g>
<g transform="">
<path d="M43 74 C48 84 55 92 62 97 C69 101.5 77 103 85 102.6 L85 108 C75 108.6 64 105.6 56 99 C49 93 45 85 43 80Z" fill="#1c1c1c" opacity=".7" filter="url(#b2)"/>
<path d="M42.8 72.8 C48 82 55 90 62 95 C69 99.5 77 101 85.5 100.6 L85.5 104.4 C76 105 67.5 103 61 98.6 C53.6 93.4 47 84.6 42.8 75Z" fill="#0a0a0a" filter="url(#b1)"/>
<path d="M52 13.1 L43.3 12.6 C37 13.2 33 15.5 30.4 18.5 C25.5 21 21.5 26 18.2 32.5 C19.3 37 19.6 42 21.4 46.4 C22.3 50 24.3 53.4 27 55.2 L33.5 50 L36 24Z" fill="#6e6e6e" filter="url(#bun)"/>
<path d="M68 10.8 C79 10.8 87 14.5 92.7 20.1 C98.5 26 101.8 33 102.8 40.2 C103.6 44 104.4 47.5 104.3 51 C103.8 54.5 103 58 102.6 61 C102.6 66 102 72 101.2 77.3 C100.6 80.5 99.8 84 98.9 86.6 C97.8 90 96.4 93.2 94.3 95.8 C92 98.5 89.5 99.9 86.6 100 C82 100.2 78 99.8 74.2 98.9 C69.5 97 65.5 94.3 61.8 91.2 C57.5 87.5 54 84 51 80.4 L44.8 74.2 L41 73.4 L33.2 53.3 C31.5 49 30.3 44 30.1 38.6 C30.5 32.5 33 27 37.1 23.2 C40.5 19 45 15.5 51 13.1 C56 11.4 62 10.8 68 10.8Z" fill="url(#gQHead)"/>
<g clip-path="url(#qh)">
<path d="M30 20 C26 34 28 48 34 56 L40 50 C35 40 35 28 40 18Z" fill="#484848" opacity=".55" filter="url(#b2)"/>
<ellipse cx="56" cy="47" rx="9" ry="10" fill="#585858" opacity=".4" filter="url(#b3)"/>
<path d="M48 60 C50 70 55 79 62 86 L66 84 C59 76 56 68 55 59Z" fill="#525252" opacity=".5" filter="url(#b2)"/>
<path d="M46 76 C54 88 66 98 86 101" stroke="#4a4a4a" stroke-width="2.4" fill="none" opacity=".6" filter="url(#b1)"/>
<ellipse cx="74.5" cy="51.4" rx="8" ry="2.8" fill="#565656" opacity=".55" filter="url(#b2)"/>
<ellipse cx="98.8" cy="51.4" rx="5" ry="2.6" fill="#565656" opacity=".55" filter="url(#b2)"/>
<path d="M68.4 54.4 Q73 52.2 78.8 53.8 Q73.6 56 68.4 54.4Z" fill="#868686" filter="url(#b1)"/>
<path d="M68.2 53.6 Q73 51.2 79.2 53.2" stroke="#505050" stroke-width=".8" fill="none" opacity=".8"/>
<circle cx="76.5" cy="53.5" r="1.3" fill="#484848"/>
<path d="M94 54 Q97.6 52 101.8 53.4 Q98 55.4 94 54Z" fill="#848484" filter="url(#b1)"/>
<path d="M93.8 53.4 Q97.6 51.2 102 52.8" stroke="#505050" stroke-width=".8" fill="none" opacity=".8"/>
<circle cx="99.6" cy="53.4" r="1.2" fill="#4a4a4a"/>
<path d="M90 53 C91 58 92.4 63 94.6 67 L92 68 C90.4 63 89.4 58 89 53Z" fill="#7e7e7e" opacity=".7" filter="url(#b1)"/>
<path d="M83.2 62.5 C82.4 66 83.4 69.4 86 70.8 C87 68 88 65.6 88.6 62Z" fill="#525252" opacity=".6" filter="url(#b2)"/>
<path d="M86.2 70.6 Q89 72.4 92 71.4 L95.6 69.8 Q96.2 68.6 95.4 67.4" stroke="#4c4c4c" stroke-width="1" fill="none" opacity=".8"/>
<ellipse cx="90.2" cy="69.9" rx="2.2" ry="1.1" fill="#363636"/>
<path d="M97.2 58 C97.8 62 98.2 65 97.8 68.6" stroke="#5a5a5a" stroke-width="1.5" fill="none" opacity=".5" filter="url(#b1)"/>
<path d="M73.8 81.6 Q84 80.2 96.8 80.8" stroke="#4e4e4e" stroke-width="1.3" fill="none"/>
<path d="M76 79.4 Q85 78 95 78.8" stroke="#808080" stroke-width="1.1" fill="none" opacity=".8"/>
<ellipse cx="87" cy="87.4" rx="7" ry="1.8" fill="#5a5a5a" opacity=".6" filter="url(#b1)"/>
</g>
<path d="M33.8 52.2 C30.3 53.8 29.2 58 30 61.8 C31 66.5 34.5 71.6 40.5 74 C43.2 73.7 44.6 71 44.2 67.5 C43.2 61 39.7 54.3 33.8 52.2Z" fill="#767676"/>
<path d="M35.4 57 C34.2 60 35.6 64.6 39.4 68.6" stroke="#5a5a5a" stroke-width="1.4" fill="none"/>
<ellipse cx="41" cy="61.6" rx="1.3" ry="2.2" fill="#2e2e2e"/>
<path d="M40 54.6 C43.6 59.6 45.8 66 45.6 72.6" stroke="#4a4a4a" stroke-width="1.6" fill="none" opacity=".8" filter="url(#b1)"/>
</g></g>
<g transform="translate(1700.0 235.0)" filter="url(#b1)">
<g transform="">
<path d="M9.3 122.1 C22 119 36 114.5 43.3 105 L43 75 L84 98 L83.5 113 C86 118 93 120.5 100.5 122.1 C98.5 131 88 137.8 74.2 137.6 C52 137 27 128.5 9.3 122.1Z" fill="url(#gQSh)"/>
<g clip-path="url(#qs)">
<path d="M42 74 L50 78 L50 104 L30 118 L20 118 L42 106Z" fill="#4c4c4c" opacity=".55" filter="url(#b2)"/>
<path d="M84.5 99 L78 99 L78 112 L92 124 L102 124 L84 112Z" fill="#505050" opacity=".5" filter="url(#b2)"/>
<ellipse cx="45" cy="134" rx="40" ry="7" fill="#484848" opacity=".5" filter="url(#b2)"/>
</g></g>
<g transform="">
<path d="M43 74 C48 84 55 92 62 97 C69 101.5 77 103 85 102.6 L85 108 C75 108.6 64 105.6 56 99 C49 93 45 85 43 80Z" fill="#1c1c1c" opacity=".7" filter="url(#b2)"/>
<path d="M42.8 72.8 C48 82 55 90 62 95 C69 99.5 77 101 85.5 100.6 L85.5 104.4 C76 105 67.5 103 61 98.6 C53.6 93.4 47 84.6 42.8 75Z" fill="#0a0a0a" filter="url(#b1)"/>
<path d="M52 13.1 L43.3 12.6 C37 13.2 33 15.5 30.4 18.5 C25.5 21 21.5 26 18.2 32.5 C19.3 37 19.6 42 21.4 46.4 C22.3 50 24.3 53.4 27 55.2 L33.5 50 L36 24Z" fill="#6e6e6e" filter="url(#bun)"/>
<path d="M68 10.8 C79 10.8 87 14.5 92.7 20.1 C98.5 26 101.8 33 102.8 40.2 C103.6 44 104.4 47.5 104.3 51 C103.8 54.5 103 58 102.6 61 C102.6 66 102 72 101.2 77.3 C100.6 80.5 99.8 84 98.9 86.6 C97.8 90 96.4 93.2 94.3 95.8 C92 98.5 89.5 99.9 86.6 100 C82 100.2 78 99.8 74.2 98.9 C69.5 97 65.5 94.3 61.8 91.2 C57.5 87.5 54 84 51 80.4 L44.8 74.2 L41 73.4 L33.2 53.3 C31.5 49 30.3 44 30.1 38.6 C30.5 32.5 33 27 37.1 23.2 C40.5 19 45 15.5 51 13.1 C56 11.4 62 10.8 68 10.8Z" fill="url(#gQHead)"/>
<g clip-path="url(#qh)">
<path d="M30 20 C26 34 28 48 34 56 L40 50 C35 40 35 28 40 18Z" fill="#484848" opacity=".55" filter="url(#b2)"/>
<ellipse cx="56" cy="47" rx="9" ry="10" fill="#585858" opacity=".4" filter="url(#b3)"/>
<path d="M48 60 C50 70 55 79 62 86 L66 84 C59 76 56 68 55 59Z" fill="#525252" opacity=".5" filter="url(#b2)"/>
<path d="M46 76 C54 88 66 98 86 101" stroke="#4a4a4a" stroke-width="2.4" fill="none" opacity=".6" filter="url(#b1)"/>
<ellipse cx="74.5" cy="51.4" rx="8" ry="2.8" fill="#565656" opacity=".55" filter="url(#b2)"/>
<ellipse cx="98.8" cy="51.4" rx="5" ry="2.6" fill="#565656" opacity=".55" filter="url(#b2)"/>
<path d="M68.4 54.4 Q73 52.2 78.8 53.8 Q73.6 56 68.4 54.4Z" fill="#868686" filter="url(#b1)"/>
<path d="M68.2 53.6 Q73 51.2 79.2 53.2" stroke="#505050" stroke-width=".8" fill="none" opacity=".8"/>
<circle cx="76.5" cy="53.5" r="1.3" fill="#484848"/>
<path d="M94 54 Q97.6 52 101.8 53.4 Q98 55.4 94 54Z" fill="#848484" filter="url(#b1)"/>
<path d="M93.8 53.4 Q97.6 51.2 102 52.8" stroke="#505050" stroke-width=".8" fill="none" opacity=".8"/>
<circle cx="99.6" cy="53.4" r="1.2" fill="#4a4a4a"/>
<path d="M90 53 C91 58 92.4 63 94.6 67 L92 68 C90.4 63 89.4 58 89 53Z" fill="#7e7e7e" opacity=".7" filter="url(#b1)"/>
<path d="M83.2 62.5 C82.4 66 83.4 69.4 86 70.8 C87 68 88 65.6 88.6 62Z" fill="#525252" opacity=".6" filter="url(#b2)"/>
<path d="M86.2 70.6 Q89 72.4 92 71.4 L95.6 69.8 Q96.2 68.6 95.4 67.4" stroke="#4c4c4c" stroke-width="1" fill="none" opacity=".8"/>
<ellipse cx="90.2" cy="69.9" rx="2.2" ry="1.1" fill="#363636"/>
<path d="M97.2 58 C97.8 62 98.2 65 97.8 68.6" stroke="#5a5a5a" stroke-width="1.5" fill="none" opacity=".5" filter="url(#b1)"/>
<path d="M73.8 81.6 Q84 80.2 96.8 80.8" stroke="#4e4e4e" stroke-width="1.3" fill="none"/>
<path d="M76 79.4 Q85 78 95 78.8" stroke="#808080" stroke-width="1.1" fill="none" opacity=".8"/>
<ellipse cx="87" cy="87.4" rx="7" ry="1.8" fill="#5a5a5a" opacity=".6" filter="url(#b1)"/>
</g>
<path d="M33.8 52.2 C30.3 53.8 29.2 58 30 61.8 C31 66.5 34.5 71.6 40.5 74 C43.2 73.7 44.6 71 44.2 67.5 C43.2 61 39.7 54.3 33.8 52.2Z" fill="#767676"/>
<path d="M35.4 57 C34.2 60 35.6 64.6 39.4 68.6" stroke="#5a5a5a" stroke-width="1.4" fill="none"/>
<ellipse cx="41" cy="61.6" rx="1.3" ry="2.2" fill="#2e2e2e"/>
<path d="M40 54.6 C43.6 59.6 45.8 66 45.6 72.6" stroke="#4a4a4a" stroke-width="1.6" fill="none" opacity=".8" filter="url(#b1)"/>
</g></g>
<g transform="translate(1802.0 235.0)" filter="url(#b1)">
<g transform="">
<path d="M9.3 122.1 C22 119 36 114.5 43.3 105 L43 75 L84 98 L83.5 113 C86 118 93 120.5 100.5 122.1 C98.5 131 88 137.8 74.2 137.6 C52 137 27 128.5 9.3 122.1Z" fill="url(#gQSh)"/>
<g clip-path="url(#qs)">
<path d="M42 74 L50 78 L50 104 L30 118 L20 118 L42 106Z" fill="#4c4c4c" opacity=".55" filter="url(#b2)"/>
<path d="M84.5 99 L78 99 L78 112 L92 124 L102 124 L84 112Z" fill="#505050" opacity=".5" filter="url(#b2)"/>
<ellipse cx="45" cy="134" rx="40" ry="7" fill="#484848" opacity=".5" filter="url(#b2)"/>
</g></g>
<g transform="">
<path d="M43 74 C48 84 55 92 62 97 C69 101.5 77 103 85 102.6 L85 108 C75 108.6 64 105.6 56 99 C49 93 45 85 43 80Z" fill="#1c1c1c" opacity=".7" filter="url(#b2)"/>
<path d="M42.8 72.8 C48 82 55 90 62 95 C69 99.5 77 101 85.5 100.6 L85.5 104.4 C76 105 67.5 103 61 98.6 C53.6 93.4 47 84.6 42.8 75Z" fill="#0a0a0a" filter="url(#b1)"/>
<path d="M52 13.1 L43.3 12.6 C37 13.2 33 15.5 30.4 18.5 C25.5 21 21.5 26 18.2 32.5 C19.3 37 19.6 42 21.4 46.4 C22.3 50 24.3 53.4 27 55.2 L33.5 50 L36 24Z" fill="#6e6e6e" filter="url(#bun)"/>
<path d="M68 10.8 C79 10.8 87 14.5 92.7 20.1 C98.5 26 101.8 33 102.8 40.2 C103.6 44 104.4 47.5 104.3 51 C103.8 54.5 103 58 102.6 61 C102.6 66 102 72 101.2 77.3 C100.6 80.5 99.8 84 98.9 86.6 C97.8 90 96.4 93.2 94.3 95.8 C92 98.5 89.5 99.9 86.6 100 C82 100.2 78 99.8 74.2 98.9 C69.5 97 65.5 94.3 61.8 91.2 C57.5 87.5 54 84 51 80.4 L44.8 74.2 L41 73.4 L33.2 53.3 C31.5 49 30.3 44 30.1 38.6 C30.5 32.5 33 27 37.1 23.2 C40.5 19 45 15.5 51 13.1 C56 11.4 62 10.8 68 10.8Z" fill="url(#gQHead)"/>
<g clip-path="url(#qh)">
<path d="M30 20 C26 34 28 48 34 56 L40 50 C35 40 35 28 40 18Z" fill="#484848" opacity=".55" filter="url(#b2)"/>
<ellipse cx="56" cy="47" rx="9" ry="10" fill="#585858" opacity=".4" filter="url(#b3)"/>
<path d="M48 60 C50 70 55 79 62 86 L66 84 C59 76 56 68 55 59Z" fill="#525252" opacity=".5" filter="url(#b2)"/>
<path d="M46 76 C54 88 66 98 86 101" stroke="#4a4a4a" stroke-width="2.4" fill="none" opacity=".6" filter="url(#b1)"/>
<ellipse cx="74.5" cy="51.4" rx="8" ry="2.8" fill="#565656" opacity=".55" filter="url(#b2)"/>
<ellipse cx="98.8" cy="51.4" rx="5" ry="2.6" fill="#565656" opacity=".55" filter="url(#b2)"/>
<path d="M68.4 54.4 Q73 52.2 78.8 53.8 Q73.6 56 68.4 54.4Z" fill="#868686" filter="url(#b1)"/>
<path d="M68.2 53.6 Q73 51.2 79.2 53.2" stroke="#505050" stroke-width=".8" fill="none" opacity=".8"/>
<circle cx="76.5" cy="53.5" r="1.3" fill="#484848"/>
<path d="M94 54 Q97.6 52 101.8 53.4 Q98 55.4 94 54Z" fill="#848484" filter="url(#b1)"/>
<path d="M93.8 53.4 Q97.6 51.2 102 52.8" stroke="#505050" stroke-width=".8" fill="none" opacity=".8"/>
<circle cx="99.6" cy="53.4" r="1.2" fill="#4a4a4a"/>
<path d="M90 53 C91 58 92.4 63 94.6 67 L92 68 C90.4 63 89.4 58 89 53Z" fill="#7e7e7e" opacity=".7" filter="url(#b1)"/>
<path d="M83.2 62.5 C82.4 66 83.4 69.4 86 70.8 C87 68 88 65.6 88.6 62Z" fill="#525252" opacity=".6" filter="url(#b2)"/>
<path d="M86.2 70.6 Q89 72.4 92 71.4 L95.6 69.8 Q96.2 68.6 95.4 67.4" stroke="#4c4c4c" stroke-width="1" fill="none" opacity=".8"/>
<ellipse cx="90.2" cy="69.9" rx="2.2" ry="1.1" fill="#363636"/>
<path d="M97.2 58 C97.8 62 98.2 65 97.8 68.6" stroke="#5a5a5a" stroke-width="1.5" fill="none" opacity=".5" filter="url(#b1)"/>
<path d="M73.8 81.6 Q84 80.2 96.8 80.8" stroke="#4e4e4e" stroke-width="1.3" fill="none"/>
<path d="M76 79.4 Q85 78 95 78.8" stroke="#808080" stroke-width="1.1" fill="none" opacity=".8"/>
<ellipse cx="87" cy="87.4" rx="7" ry="1.8" fill="#5a5a5a" opacity=".6" filter="url(#b1)"/>
</g>
<path d="M33.8 52.2 C30.3 53.8 29.2 58 30 61.8 C31 66.5 34.5 71.6 40.5 74 C43.2 73.7 44.6 71 44.2 67.5 C43.2 61 39.7 54.3 33.8 52.2Z" fill="#767676"/>
<path d="M35.4 57 C34.2 60 35.6 64.6 39.4 68.6" stroke="#5a5a5a" stroke-width="1.4" fill="none"/>
<ellipse cx="41" cy="61.6" rx="1.3" ry="2.2" fill="#2e2e2e"/>
<path d="M40 54.6 C43.6 59.6 45.8 66 45.6 72.6" stroke="#4a4a4a" stroke-width="1.6" fill="none" opacity=".8" filter="url(#b1)"/>
</g></g>
<g transform="translate(1899.0 235.0)" filter="url(#b1)">
<g transform="">
<path d="M9.3 122.1 C22 119 36 114.5 43.3 105 L43 75 L84 98 L83.5 113 C86 118 93 120.5 100.5 122.1 C98.5 131 88 137.8 74.2 137.6 C52 137 27 128.5 9.3 122.1Z" fill="url(#gQSh)"/>
<g clip-path="url(#qs)">
<path d="M42 74 L50 78 L50 104 L30 118 L20 118 L42 106Z" fill="#4c4c4c" opacity=".55" filter="url(#b2)"/>
<path d="M84.5 99 L78 99 L78 112 L92 124 L102 124 L84 112Z" fill="#505050" opacity=".5" filter="url(#b2)"/>
<ellipse cx="45" cy="134" rx="40" ry="7" fill="#484848" opacity=".5" filter="url(#b2)"/>
</g></g>
<g transform="">
<path d="M43 74 C48 84 55 92 62 97 C69 101.5 77 103 85 102.6 L85 108 C75 108.6 64 105.6 56 99 C49 93 45 85 43 80Z" fill="#1c1c1c" opacity=".7" filter="url(#b2)"/>
<path d="M42.8 72.8 C48 82 55 90 62 95 C69 99.5 77 101 85.5 100.6 L85.5 104.4 C76 105 67.5 103 61 98.6 C53.6 93.4 47 84.6 42.8 75Z" fill="#0a0a0a" filter="url(#b1)"/>
<path d="M52 13.1 L43.3 12.6 C37 13.2 33 15.5 30.4 18.5 C25.5 21 21.5 26 18.2 32.5 C19.3 37 19.6 42 21.4 46.4 C22.3 50 24.3 53.4 27 55.2 L33.5 50 L36 24Z" fill="#6e6e6e" filter="url(#bun)"/>
<path d="M68 10.8 C79 10.8 87 14.5 92.7 20.1 C98.5 26 101.8 33 102.8 40.2 C103.6 44 104.4 47.5 104.3 51 C103.8 54.5 103 58 102.6 61 C102.6 66 102 72 101.2 77.3 C100.6 80.5 99.8 84 98.9 86.6 C97.8 90 96.4 93.2 94.3 95.8 C92 98.5 89.5 99.9 86.6 100 C82 100.2 78 99.8 74.2 98.9 C69.5 97 65.5 94.3 61.8 91.2 C57.5 87.5 54 84 51 80.4 L44.8 74.2 L41 73.4 L33.2 53.3 C31.5 49 30.3 44 30.1 38.6 C30.5 32.5 33 27 37.1 23.2 C40.5 19 45 15.5 51 13.1 C56 11.4 62 10.8 68 10.8Z" fill="url(#gQHead)"/>
<g clip-path="url(#qh)">
<path d="M30 20 C26 34 28 48 34 56 L40 50 C35 40 35 28 40 18Z" fill="#484848" opacity=".55" filter="url(#b2)"/>
<ellipse cx="56" cy="47" rx="9" ry="10" fill="#585858" opacity=".4" filter="url(#b3)"/>
<path d="M48 60 C50 70 55 79 62 86 L66 84 C59 76 56 68 55 59Z" fill="#525252" opacity=".5" filter="url(#b2)"/>
<path d="M46 76 C54 88 66 98 86 101" stroke="#4a4a4a" stroke-width="2.4" fill="none" opacity=".6" filter="url(#b1)"/>
<ellipse cx="74.5" cy="51.4" rx="8" ry="2.8" fill="#565656" opacity=".55" filter="url(#b2)"/>
<ellipse cx="98.8" cy="51.4" rx="5" ry="2.6" fill="#565656" opacity=".55" filter="url(#b2)"/>
<path d="M68.4 54.4 Q73 52.2 78.8 53.8 Q73.6 56 68.4 54.4Z" fill="#868686" filter="url(#b1)"/>
<path d="M68.2 53.6 Q73 51.2 79.2 53.2" stroke="#505050" stroke-width=".8" fill="none" opacity=".8"/>
<circle cx="76.5" cy="53.5" r="1.3" fill="#484848"/>
<path d="M94 54 Q97.6 52 101.8 53.4 Q98 55.4 94 54Z" fill="#848484" filter="url(#b1)"/>
<path d="M93.8 53.4 Q97.6 51.2 102 52.8" stroke="#505050" stroke-width=".8" fill="none" opacity=".8"/>
<circle cx="99.6" cy="53.4" r="1.2" fill="#4a4a4a"/>
<path d="M90 53 C91 58 92.4 63 94.6 67 L92 68 C90.4 63 89.4 58 89 53Z" fill="#7e7e7e" opacity=".7" filter="url(#b1)"/>
<path d="M83.2 62.5 C82.4 66 83.4 69.4 86 70.8 C87 68 88 65.6 88.6 62Z" fill="#525252" opacity=".6" filter="url(#b2)"/>
<path d="M86.2 70.6 Q89 72.4 92 71.4 L95.6 69.8 Q96.2 68.6 95.4 67.4" stroke="#4c4c4c" stroke-width="1" fill="none" opacity=".8"/>
<ellipse cx="90.2" cy="69.9" rx="2.2" ry="1.1" fill="#363636"/>
<path d="M97.2 58 C97.8 62 98.2 65 97.8 68.6" stroke="#5a5a5a" stroke-width="1.5" fill="none" opacity=".5" filter="url(#b1)"/>
<path d="M73.8 81.6 Q84 80.2 96.8 80.8" stroke="#4e4e4e" stroke-width="1.3" fill="none"/>
<path d="M76 79.4 Q85 78 95 78.8" stroke="#808080" stroke-width="1.1" fill="none" opacity=".8"/>
<ellipse cx="87" cy="87.4" rx="7" ry="1.8" fill="#5a5a5a" opacity=".6" filter="url(#b1)"/>
</g>
<path d="M33.8 52.2 C30.3 53.8 29.2 58 30 61.8 C31 66.5 34.5 71.6 40.5 74 C43.2 73.7 44.6 71 44.2 67.5 C43.2 61 39.7 54.3 33.8 52.2Z" fill="#767676"/>
<path d="M35.4 57 C34.2 60 35.6 64.6 39.4 68.6" stroke="#5a5a5a" stroke-width="1.4" fill="none"/>
<ellipse cx="41" cy="61.6" rx="1.3" ry="2.2" fill="#2e2e2e"/>
<path d="M40 54.6 C43.6 59.6 45.8 66 45.6 72.6" stroke="#4a4a4a" stroke-width="1.6" fill="none" opacity=".8" filter="url(#b1)"/>
</g></g>
<g transform="translate(1595.0 389.0)" filter="url(#b1)">
<g transform="translate(2.64 -19.25) scale(0.9956 1.129)">
<path d="M9.3 122.1 C22 119 36 114.5 43.3 105 L43 75 L84 98 L83.5 113 C86 118 93 120.5 100.5 122.1 C98.5 131 88 137.8 74.2 137.6 C52 137 27 128.5 9.3 122.1Z" fill="url(#gQSh)"/>
<g clip-path="url(#qs)">
<path d="M42 74 L50 78 L50 104 L30 118 L20 118 L42 106Z" fill="#4c4c4c" opacity=".55" filter="url(#b2)"/>
<path d="M84.5 99 L78 99 L78 112 L92 124 L102 124 L84 112Z" fill="#505050" opacity=".5" filter="url(#b2)"/>
<ellipse cx="45" cy="134" rx="40" ry="7" fill="#484848" opacity=".5" filter="url(#b2)"/>
</g></g>
<g transform="translate(4.7 -2.2) scale(0.969 1.034)">
<path d="M43 74 C48 84 55 92 62 97 C69 101.5 77 103 85 102.6 L85 108 C75 108.6 64 105.6 56 99 C49 93 45 85 43 80Z" fill="#1c1c1c" opacity=".7" filter="url(#b2)"/>
<path d="M42.8 72.8 C48 82 55 90 62 95 C69 99.5 77 101 85.5 100.6 L85.5 104.4 C76 105 67.5 103 61 98.6 C53.6 93.4 47 84.6 42.8 75Z" fill="#0a0a0a" filter="url(#b1)"/>
<path d="M52 13.1 L43.3 12.6 C37 13.2 33 15.5 30.4 18.5 C25.5 21 21.5 26 18.2 32.5 C19.3 37 19.6 42 21.4 46.4 C22.3 50 24.3 53.4 27 55.2 L33.5 50 L36 24Z" fill="#6e6e6e" filter="url(#bun)"/>
<path d="M68 10.8 C79 10.8 87 14.5 92.7 20.1 C98.5 26 101.8 33 102.8 40.2 C103.6 44 104.4 47.5 104.3 51 C103.8 54.5 103 58 102.6 61 C102.6 66 102 72 101.2 77.3 C100.6 80.5 99.8 84 98.9 86.6 C97.8 90 96.4 93.2 94.3 95.8 C92 98.5 89.5 99.9 86.6 100 C82 100.2 78 99.8 74.2 98.9 C69.5 97 65.5 94.3 61.8 91.2 C57.5 87.5 54 84 51 80.4 L44.8 74.2 L41 73.4 L33.2 53.3 C31.5 49 30.3 44 30.1 38.6 C30.5 32.5 33 27 37.1 23.2 C40.5 19 45 15.5 51 13.1 C56 11.4 62 10.8 68 10.8Z" fill="url(#gQHead)"/>
<g clip-path="url(#qh)">
<path d="M30 20 C26 34 28 48 34 56 L40 50 C35 40 35 28 40 18Z" fill="#484848" opacity=".55" filter="url(#b2)"/>
<ellipse cx="56" cy="47" rx="9" ry="10" fill="#585858" opacity=".4" filter="url(#b3)"/>
<path d="M48 60 C50 70 55 79 62 86 L66 84 C59 76 56 68 55 59Z" fill="#525252" opacity=".5" filter="url(#b2)"/>
<path d="M46 76 C54 88 66 98 86 101" stroke="#4a4a4a" stroke-width="2.4" fill="none" opacity=".6" filter="url(#b1)"/>
<ellipse cx="74.5" cy="51.4" rx="8" ry="2.8" fill="#565656" opacity=".55" filter="url(#b2)"/>
<ellipse cx="98.8" cy="51.4" rx="5" ry="2.6" fill="#565656" opacity=".55" filter="url(#b2)"/>
<path d="M68.4 54.4 Q73 52.2 78.8 53.8 Q73.6 56 68.4 54.4Z" fill="#868686" filter="url(#b1)"/>
<path d="M68.2 53.6 Q73 51.2 79.2 53.2" stroke="#505050" stroke-width=".8" fill="none" opacity=".8"/>
<circle cx="76.5" cy="53.5" r="1.3" fill="#484848"/>
<path d="M94 54 Q97.6 52 101.8 53.4 Q98 55.4 94 54Z" fill="#848484" filter="url(#b1)"/>
<path d="M93.8 53.4 Q97.6 51.2 102 52.8" stroke="#505050" stroke-width=".8" fill="none" opacity=".8"/>
<circle cx="99.6" cy="53.4" r="1.2" fill="#4a4a4a"/>
<path d="M90 53 C91 58 92.4 63 94.6 67 L92 68 C90.4 63 89.4 58 89 53Z" fill="#7e7e7e" opacity=".7" filter="url(#b1)"/>
<path d="M83.2 62.5 C82.4 66 83.4 69.4 86 70.8 C87 68 88 65.6 88.6 62Z" fill="#525252" opacity=".6" filter="url(#b2)"/>
<path d="M86.2 70.6 Q89 72.4 92 71.4 L95.6 69.8 Q96.2 68.6 95.4 67.4" stroke="#4c4c4c" stroke-width="1" fill="none" opacity=".8"/>
<ellipse cx="90.2" cy="69.9" rx="2.2" ry="1.1" fill="#363636"/>
<path d="M97.2 58 C97.8 62 98.2 65 97.8 68.6" stroke="#5a5a5a" stroke-width="1.5" fill="none" opacity=".5" filter="url(#b1)"/>
<path d="M73.8 81.6 Q84 80.2 96.8 80.8" stroke="#4e4e4e" stroke-width="1.3" fill="none"/>
<path d="M76 79.4 Q85 78 95 78.8" stroke="#808080" stroke-width="1.1" fill="none" opacity=".8"/>
<ellipse cx="87" cy="87.4" rx="7" ry="1.8" fill="#5a5a5a" opacity=".6" filter="url(#b1)"/>
</g>
<path d="M33.8 52.2 C30.3 53.8 29.2 58 30 61.8 C31 66.5 34.5 71.6 40.5 74 C43.2 73.7 44.6 71 44.2 67.5 C43.2 61 39.7 54.3 33.8 52.2Z" fill="#767676"/>
<path d="M35.4 57 C34.2 60 35.6 64.6 39.4 68.6" stroke="#5a5a5a" stroke-width="1.4" fill="none"/>
<ellipse cx="41" cy="61.6" rx="1.3" ry="2.2" fill="#2e2e2e"/>
<path d="M40 54.6 C43.6 59.6 45.8 66 45.6 72.6" stroke="#4a4a4a" stroke-width="1.6" fill="none" opacity=".8" filter="url(#b1)"/>
</g></g>
<g transform="translate(1699.0 389.0)" filter="url(#b1)">
<g transform="translate(2.64 -19.25) scale(0.9956 1.129)">
<path d="M9.3 122.1 C22 119 36 114.5 43.3 105 L43 75 L84 98 L83.5 113 C86 118 93 120.5 100.5 122.1 C98.5 131 88 137.8 74.2 137.6 C52 137 27 128.5 9.3 122.1Z" fill="url(#gQSh)"/>
<g clip-path="url(#qs)">
<path d="M42 74 L50 78 L50 104 L30 118 L20 118 L42 106Z" fill="#4c4c4c" opacity=".55" filter="url(#b2)"/>
<path d="M84.5 99 L78 99 L78 112 L92 124 L102 124 L84 112Z" fill="#505050" opacity=".5" filter="url(#b2)"/>
<ellipse cx="45" cy="134" rx="40" ry="7" fill="#484848" opacity=".5" filter="url(#b2)"/>
</g></g>
<g transform="translate(4.7 -2.2) scale(0.969 1.034)">
<path d="M43 74 C48 84 55 92 62 97 C69 101.5 77 103 85 102.6 L85 108 C75 108.6 64 105.6 56 99 C49 93 45 85 43 80Z" fill="#1c1c1c" opacity=".7" filter="url(#b2)"/>
<path d="M42.8 72.8 C48 82 55 90 62 95 C69 99.5 77 101 85.5 100.6 L85.5 104.4 C76 105 67.5 103 61 98.6 C53.6 93.4 47 84.6 42.8 75Z" fill="#0a0a0a" filter="url(#b1)"/>
<path d="M52 13.1 L43.3 12.6 C37 13.2 33 15.5 30.4 18.5 C25.5 21 21.5 26 18.2 32.5 C19.3 37 19.6 42 21.4 46.4 C22.3 50 24.3 53.4 27 55.2 L33.5 50 L36 24Z" fill="#6e6e6e" filter="url(#bun)"/>
<path d="M68 10.8 C79 10.8 87 14.5 92.7 20.1 C98.5 26 101.8 33 102.8 40.2 C103.6 44 104.4 47.5 104.3 51 C103.8 54.5 103 58 102.6 61 C102.6 66 102 72 101.2 77.3 C100.6 80.5 99.8 84 98.9 86.6 C97.8 90 96.4 93.2 94.3 95.8 C92 98.5 89.5 99.9 86.6 100 C82 100.2 78 99.8 74.2 98.9 C69.5 97 65.5 94.3 61.8 91.2 C57.5 87.5 54 84 51 80.4 L44.8 74.2 L41 73.4 L33.2 53.3 C31.5 49 30.3 44 30.1 38.6 C30.5 32.5 33 27 37.1 23.2 C40.5 19 45 15.5 51 13.1 C56 11.4 62 10.8 68 10.8Z" fill="url(#gQHead)"/>
<g clip-path="url(#qh)">
<path d="M30 20 C26 34 28 48 34 56 L40 50 C35 40 35 28 40 18Z" fill="#484848" opacity=".55" filter="url(#b2)"/>
<ellipse cx="56" cy="47" rx="9" ry="10" fill="#585858" opacity=".4" filter="url(#b3)"/>
<path d="M48 60 C50 70 55 79 62 86 L66 84 C59 76 56 68 55 59Z" fill="#525252" opacity=".5" filter="url(#b2)"/>
<path d="M46 76 C54 88 66 98 86 101" stroke="#4a4a4a" stroke-width="2.4" fill="none" opacity=".6" filter="url(#b1)"/>
<ellipse cx="74.5" cy="51.4" rx="8" ry="2.8" fill="#565656" opacity=".55" filter="url(#b2)"/>
<ellipse cx="98.8" cy="51.4" rx="5" ry="2.6" fill="#565656" opacity=".55" filter="url(#b2)"/>
<path d="M68.4 54.4 Q73 52.2 78.8 53.8 Q73.6 56 68.4 54.4Z" fill="#868686" filter="url(#b1)"/>
<path d="M68.2 53.6 Q73 51.2 79.2 53.2" stroke="#505050" stroke-width=".8" fill="none" opacity=".8"/>
<circle cx="76.5" cy="53.5" r="1.3" fill="#484848"/>
<path d="M94 54 Q97.6 52 101.8 53.4 Q98 55.4 94 54Z" fill="#848484" filter="url(#b1)"/>
<path d="M93.8 53.4 Q97.6 51.2 102 52.8" stroke="#505050" stroke-width=".8" fill="none" opacity=".8"/>
<circle cx="99.6" cy="53.4" r="1.2" fill="#4a4a4a"/>
<path d="M90 53 C91 58 92.4 63 94.6 67 L92 68 C90.4 63 89.4 58 89 53Z" fill="#7e7e7e" opacity=".7" filter="url(#b1)"/>
<path d="M83.2 62.5 C82.4 66 83.4 69.4 86 70.8 C87 68 88 65.6 88.6 62Z" fill="#525252" opacity=".6" filter="url(#b2)"/>
<path d="M86.2 70.6 Q89 72.4 92 71.4 L95.6 69.8 Q96.2 68.6 95.4 67.4" stroke="#4c4c4c" stroke-width="1" fill="none" opacity=".8"/>
<ellipse cx="90.2" cy="69.9" rx="2.2" ry="1.1" fill="#363636"/>
<path d="M97.2 58 C97.8 62 98.2 65 97.8 68.6" stroke="#5a5a5a" stroke-width="1.5" fill="none" opacity=".5" filter="url(#b1)"/>
<path d="M73.8 81.6 Q84 80.2 96.8 80.8" stroke="#4e4e4e" stroke-width="1.3" fill="none"/>
<path d="M76 79.4 Q85 78 95 78.8" stroke="#808080" stroke-width="1.1" fill="none" opacity=".8"/>
<ellipse cx="87" cy="87.4" rx="7" ry="1.8" fill="#5a5a5a" opacity=".6" filter="url(#b1)"/>
</g>
<path d="M33.8 52.2 C30.3 53.8 29.2 58 30 61.8 C31 66.5 34.5 71.6 40.5 74 C43.2 73.7 44.6 71 44.2 67.5 C43.2 61 39.7 54.3 33.8 52.2Z" fill="#767676"/>
<path d="M35.4 57 C34.2 60 35.6 64.6 39.4 68.6" stroke="#5a5a5a" stroke-width="1.4" fill="none"/>
<ellipse cx="41" cy="61.6" rx="1.3" ry="2.2" fill="#2e2e2e"/>
<path d="M40 54.6 C43.6 59.6 45.8 66 45.6 72.6" stroke="#4a4a4a" stroke-width="1.6" fill="none" opacity=".8" filter="url(#b1)"/>
</g></g>
<g transform="translate(1796.5 389.0)" filter="url(#b1)">
<g transform="translate(2.64 -19.25) scale(0.9956 1.129)">
<path d="M9.3 122.1 C22 119 36 114.5 43.3 105 L43 75 L84 98 L83.5 113 C86 118 93 120.5 100.5 122.1 C98.5 131 88 137.8 74.2 137.6 C52 137 27 128.5 9.3 122.1Z" fill="url(#gQSh)"/>
<g clip-path="url(#qs)">
<path d="M42 74 L50 78 L50 104 L30 118 L20 118 L42 106Z" fill="#4c4c4c" opacity=".55" filter="url(#b2)"/>
<path d="M84.5 99 L78 99 L78 112 L92 124 L102 124 L84 112Z" fill="#505050" opacity=".5" filter="url(#b2)"/>
<ellipse cx="45" cy="134" rx="40" ry="7" fill="#484848" opacity=".5" filter="url(#b2)"/>
</g></g>
<g transform="translate(4.7 -2.2) scale(0.969 1.034)">
<path d="M43 74 C48 84 55 92 62 97 C69 101.5 77 103 85 102.6 L85 108 C75 108.6 64 105.6 56 99 C49 93 45 85 43 80Z" fill="#1c1c1c" opacity=".7" filter="url(#b2)"/>
<path d="M42.8 72.8 C48 82 55 90 62 95 C69 99.5 77 101 85.5 100.6 L85.5 104.4 C76 105 67.5 103 61 98.6 C53.6 93.4 47 84.6 42.8 75Z" fill="#0a0a0a" filter="url(#b1)"/>
<path d="M52 13.1 L43.3 12.6 C37 13.2 33 15.5 30.4 18.5 C25.5 21 21.5 26 18.2 32.5 C19.3 37 19.6 42 21.4 46.4 C22.3 50 24.3 53.4 27 55.2 L33.5 50 L36 24Z" fill="#6e6e6e" filter="url(#bun)"/>
<path d="M68 10.8 C79 10.8 87 14.5 92.7 20.1 C98.5 26 101.8 33 102.8 40.2 C103.6 44 104.4 47.5 104.3 51 C103.8 54.5 103 58 102.6 61 C102.6 66 102 72 101.2 77.3 C100.6 80.5 99.8 84 98.9 86.6 C97.8 90 96.4 93.2 94.3 95.8 C92 98.5 89.5 99.9 86.6 100 C82 100.2 78 99.8 74.2 98.9 C69.5 97 65.5 94.3 61.8 91.2 C57.5 87.5 54 84 51 80.4 L44.8 74.2 L41 73.4 L33.2 53.3 C31.5 49 30.3 44 30.1 38.6 C30.5 32.5 33 27 37.1 23.2 C40.5 19 45 15.5 51 13.1 C56 11.4 62 10.8 68 10.8Z" fill="url(#gQHead)"/>
<g clip-path="url(#qh)">
<path d="M30 20 C26 34 28 48 34 56 L40 50 C35 40 35 28 40 18Z" fill="#484848" opacity=".55" filter="url(#b2)"/>
<ellipse cx="56" cy="47" rx="9" ry="10" fill="#585858" opacity=".4" filter="url(#b3)"/>
<path d="M48 60 C50 70 55 79 62 86 L66 84 C59 76 56 68 55 59Z" fill="#525252" opacity=".5" filter="url(#b2)"/>
<path d="M46 76 C54 88 66 98 86 101" stroke="#4a4a4a" stroke-width="2.4" fill="none" opacity=".6" filter="url(#b1)"/>
<ellipse cx="74.5" cy="51.4" rx="8" ry="2.8" fill="#565656" opacity=".55" filter="url(#b2)"/>
<ellipse cx="98.8" cy="51.4" rx="5" ry="2.6" fill="#565656" opacity=".55" filter="url(#b2)"/>
<path d="M68.4 54.4 Q73 52.2 78.8 53.8 Q73.6 56 68.4 54.4Z" fill="#868686" filter="url(#b1)"/>
<path d="M68.2 53.6 Q73 51.2 79.2 53.2" stroke="#505050" stroke-width=".8" fill="none" opacity=".8"/>
<circle cx="76.5" cy="53.5" r="1.3" fill="#484848"/>
<path d="M94 54 Q97.6 52 101.8 53.4 Q98 55.4 94 54Z" fill="#848484" filter="url(#b1)"/>
<path d="M93.8 53.4 Q97.6 51.2 102 52.8" stroke="#505050" stroke-width=".8" fill="none" opacity=".8"/>
<circle cx="99.6" cy="53.4" r="1.2" fill="#4a4a4a"/>
<path d="M90 53 C91 58 92.4 63 94.6 67 L92 68 C90.4 63 89.4 58 89 53Z" fill="#7e7e7e" opacity=".7" filter="url(#b1)"/>
<path d="M83.2 62.5 C82.4 66 83.4 69.4 86 70.8 C87 68 88 65.6 88.6 62Z" fill="#525252" opacity=".6" filter="url(#b2)"/>
<path d="M86.2 70.6 Q89 72.4 92 71.4 L95.6 69.8 Q96.2 68.6 95.4 67.4" stroke="#4c4c4c" stroke-width="1" fill="none" opacity=".8"/>
<ellipse cx="90.2" cy="69.9" rx="2.2" ry="1.1" fill="#363636"/>
<path d="M97.2 58 C97.8 62 98.2 65 97.8 68.6" stroke="#5a5a5a" stroke-width="1.5" fill="none" opacity=".5" filter="url(#b1)"/>
<path d="M73.8 81.6 Q84 80.2 96.8 80.8" stroke="#4e4e4e" stroke-width="1.3" fill="none"/>
<path d="M76 79.4 Q85 78 95 78.8" stroke="#808080" stroke-width="1.1" fill="none" opacity=".8"/>
<ellipse cx="87" cy="87.4" rx="7" ry="1.8" fill="#5a5a5a" opacity=".6" filter="url(#b1)"/>
</g>
<path d="M33.8 52.2 C30.3 53.8 29.2 58 30 61.8 C31 66.5 34.5 71.6 40.5 74 C43.2 73.7 44.6 71 44.2 67.5 C43.2 61 39.7 54.3 33.8 52.2Z" fill="#767676"/>
<path d="M35.4 57 C34.2 60 35.6 64.6 39.4 68.6" stroke="#5a5a5a" stroke-width="1.4" fill="none"/>
<ellipse cx="41" cy="61.6" rx="1.3" ry="2.2" fill="#2e2e2e"/>
<path d="M40 54.6 C43.6 59.6 45.8 66 45.6 72.6" stroke="#4a4a4a" stroke-width="1.6" fill="none" opacity=".8" filter="url(#b1)"/>
</g></g>
<g transform="translate(1891.0 389.0)" filter="url(#b1)">
<g transform="translate(2.64 -19.25) scale(0.9956 1.129)">
<path d="M9.3 122.1 C22 119 36 114.5 43.3 105 L43 75 L84 98 L83.5 113 C86 118 93 120.5 100.5 122.1 C98.5 131 88 137.8 74.2 137.6 C52 137 27 128.5 9.3 122.1Z" fill="url(#gQSh)"/>
<g clip-path="url(#qs)">
<path d="M42 74 L50 78 L50 104 L30 118 L20 118 L42 106Z" fill="#4c4c4c" opacity=".55" filter="url(#b2)"/>
<path d="M84.5 99 L78 99 L78 112 L92 124 L102 124 L84 112Z" fill="#505050" opacity=".5" filter="url(#b2)"/>
<ellipse cx="45" cy="134" rx="40" ry="7" fill="#484848" opacity=".5" filter="url(#b2)"/>
</g></g>
<g transform="translate(4.7 -2.2) scale(0.969 1.034)">
<path d="M43 74 C48 84 55 92 62 97 C69 101.5 77 103 85 102.6 L85 108 C75 108.6 64 105.6 56 99 C49 93 45 85 43 80Z" fill="#1c1c1c" opacity=".7" filter="url(#b2)"/>
<path d="M42.8 72.8 C48 82 55 90 62 95 C69 99.5 77 101 85.5 100.6 L85.5 104.4 C76 105 67.5 103 61 98.6 C53.6 93.4 47 84.6 42.8 75Z" fill="#0a0a0a" filter="url(#b1)"/>
<path d="M52 13.1 L43.3 12.6 C37 13.2 33 15.5 30.4 18.5 C25.5 21 21.5 26 18.2 32.5 C19.3 37 19.6 42 21.4 46.4 C22.3 50 24.3 53.4 27 55.2 L33.5 50 L36 24Z" fill="#6e6e6e" filter="url(#bun)"/>
<path d="M68 10.8 C79 10.8 87 14.5 92.7 20.1 C98.5 26 101.8 33 102.8 40.2 C103.6 44 104.4 47.5 104.3 51 C103.8 54.5 103 58 102.6 61 C102.6 66 102 72 101.2 77.3 C100.6 80.5 99.8 84 98.9 86.6 C97.8 90 96.4 93.2 94.3 95.8 C92 98.5 89.5 99.9 86.6 100 C82 100.2 78 99.8 74.2 98.9 C69.5 97 65.5 94.3 61.8 91.2 C57.5 87.5 54 84 51 80.4 L44.8 74.2 L41 73.4 L33.2 53.3 C31.5 49 30.3 44 30.1 38.6 C30.5 32.5 33 27 37.1 23.2 C40.5 19 45 15.5 51 13.1 C56 11.4 62 10.8 68 10.8Z" fill="url(#gQHead)"/>
<g clip-path="url(#qh)">
<path d="M30 20 C26 34 28 48 34 56 L40 50 C35 40 35 28 40 18Z" fill="#484848" opacity=".55" filter="url(#b2)"/>
<ellipse cx="56" cy="47" rx="9" ry="10" fill="#585858" opacity=".4" filter="url(#b3)"/>
<path d="M48 60 C50 70 55 79 62 86 L66 84 C59 76 56 68 55 59Z" fill="#525252" opacity=".5" filter="url(#b2)"/>
<path d="M46 76 C54 88 66 98 86 101" stroke="#4a4a4a" stroke-width="2.4" fill="none" opacity=".6" filter="url(#b1)"/>
<ellipse cx="74.5" cy="51.4" rx="8" ry="2.8" fill="#565656" opacity=".55" filter="url(#b2)"/>
<ellipse cx="98.8" cy="51.4" rx="5" ry="2.6" fill="#565656" opacity=".55" filter="url(#b2)"/>
<path d="M68.4 54.4 Q73 52.2 78.8 53.8 Q73.6 56 68.4 54.4Z" fill="#868686" filter="url(#b1)"/>
<path d="M68.2 53.6 Q73 51.2 79.2 53.2" stroke="#505050" stroke-width=".8" fill="none" opacity=".8"/>
<circle cx="76.5" cy="53.5" r="1.3" fill="#484848"/>
<path d="M94 54 Q97.6 52 101.8 53.4 Q98 55.4 94 54Z" fill="#848484" filter="url(#b1)"/>
<path d="M93.8 53.4 Q97.6 51.2 102 52.8" stroke="#505050" stroke-width=".8" fill="none" opacity=".8"/>
<circle cx="99.6" cy="53.4" r="1.2" fill="#4a4a4a"/>
<path d="M90 53 C91 58 92.4 63 94.6 67 L92 68 C90.4 63 89.4 58 89 53Z" fill="#7e7e7e" opacity=".7" filter="url(#b1)"/>
<path d="M83.2 62.5 C82.4 66 83.4 69.4 86 70.8 C87 68 88 65.6 88.6 62Z" fill="#525252" opacity=".6" filter="url(#b2)"/>
<path d="M86.2 70.6 Q89 72.4 92 71.4 L95.6 69.8 Q96.2 68.6 95.4 67.4" stroke="#4c4c4c" stroke-width="1" fill="none" opacity=".8"/>
<ellipse cx="90.2" cy="69.9" rx="2.2" ry="1.1" fill="#363636"/>
<path d="M97.2 58 C97.8 62 98.2 65 97.8 68.6" stroke="#5a5a5a" stroke-width="1.5" fill="none" opacity=".5" filter="url(#b1)"/>
<path d="M73.8 81.6 Q84 80.2 96.8 80.8" stroke="#4e4e4e" stroke-width="1.3" fill="none"/>
<path d="M76 79.4 Q85 78 95 78.8" stroke="#808080" stroke-width="1.1" fill="none" opacity=".8"/>
<ellipse cx="87" cy="87.4" rx="7" ry="1.8" fill="#5a5a5a" opacity=".6" filter="url(#b1)"/>
</g>
<path d="M33.8 52.2 C30.3 53.8 29.2 58 30 61.8 C31 66.5 34.5 71.6 40.5 74 C43.2 73.7 44.6 71 44.2 67.5 C43.2 61 39.7 54.3 33.8 52.2Z" fill="#767676"/>
<path d="M35.4 57 C34.2 60 35.6 64.6 39.4 68.6" stroke="#5a5a5a" stroke-width="1.4" fill="none"/>
<ellipse cx="41" cy="61.6" rx="1.3" ry="2.2" fill="#2e2e2e"/>
<path d="M40 54.6 C43.6 59.6 45.8 66 45.6 72.6" stroke="#4a4a4a" stroke-width="1.6" fill="none" opacity=".8" filter="url(#b1)"/>
</g></g>
<g transform="translate(1578.0 560.6)" filter="url(#b1)">
<g transform="translate(7.03 -40.1) scale(0.986 1.258)">
<path d="M9.3 122.1 C22 119 36 114.5 43.3 105 L43 75 L84 98 L83.5 113 C86 118 93 120.5 100.5 122.1 C98.5 131 88 137.8 74.2 137.6 C52 137 27 128.5 9.3 122.1Z" fill="url(#gQSh)"/>
<g clip-path="url(#qs)">
<path d="M42 74 L50 78 L50 104 L30 118 L20 118 L42 106Z" fill="#4c4c4c" opacity=".55" filter="url(#b2)"/>
<path d="M84.5 99 L78 99 L78 112 L92 124 L102 124 L84 112Z" fill="#505050" opacity=".5" filter="url(#b2)"/>
<ellipse cx="45" cy="134" rx="40" ry="7" fill="#484848" opacity=".5" filter="url(#b2)"/>
</g></g>
<g transform="translate(7.6 -6.57) scale(0.956 1.086)">
<path d="M43 74 C48 84 55 92 62 97 C69 101.5 77 103 85 102.6 L85 108 C75 108.6 64 105.6 56 99 C49 93 45 85 43 80Z" fill="#1c1c1c" opacity=".7" filter="url(#b2)"/>
<path d="M42.8 72.8 C48 82 55 90 62 95 C69 99.5 77 101 85.5 100.6 L85.5 104.4 C76 105 67.5 103 61 98.6 C53.6 93.4 47 84.6 42.8 75Z" fill="#0a0a0a" filter="url(#b1)"/>
<path d="M52 13.1 L43.3 12.6 C37 13.2 33 15.5 30.4 18.5 C25.5 21 21.5 26 18.2 32.5 C19.3 37 19.6 42 21.4 46.4 C22.3 50 24.3 53.4 27 55.2 L33.5 50 L36 24Z" fill="#6e6e6e" filter="url(#bun)"/>
<path d="M68 10.8 C79 10.8 87 14.5 92.7 20.1 C98.5 26 101.8 33 102.8 40.2 C103.6 44 104.4 47.5 104.3 51 C103.8 54.5 103 58 102.6 61 C102.6 66 102 72 101.2 77.3 C100.6 80.5 99.8 84 98.9 86.6 C97.8 90 96.4 93.2 94.3 95.8 C92 98.5 89.5 99.9 86.6 100 C82 100.2 78 99.8 74.2 98.9 C69.5 97 65.5 94.3 61.8 91.2 C57.5 87.5 54 84 51 80.4 L44.8 74.2 L41 73.4 L33.2 53.3 C31.5 49 30.3 44 30.1 38.6 C30.5 32.5 33 27 37.1 23.2 C40.5 19 45 15.5 51 13.1 C56 11.4 62 10.8 68 10.8Z" fill="url(#gQHead)"/>
<g clip-path="url(#qh)">
<path d="M30 20 C26 34 28 48 34 56 L40 50 C35 40 35 28 40 18Z" fill="#484848" opacity=".55" filter="url(#b2)"/>
<ellipse cx="56" cy="47" rx="9" ry="10" fill="#585858" opacity=".4" filter="url(#b3)"/>
<path d="M48 60 C50 70 55 79 62 86 L66 84 C59 76 56 68 55 59Z" fill="#525252" opacity=".5" filter="url(#b2)"/>
<path d="M46 76 C54 88 66 98 86 101" stroke="#4a4a4a" stroke-width="2.4" fill="none" opacity=".6" filter="url(#b1)"/>
<ellipse cx="74.5" cy="51.4" rx="8" ry="2.8" fill="#565656" opacity=".55" filter="url(#b2)"/>
<ellipse cx="98.8" cy="51.4" rx="5" ry="2.6" fill="#565656" opacity=".55" filter="url(#b2)"/>
<path d="M68.4 54.4 Q73 52.2 78.8 53.8 Q73.6 56 68.4 54.4Z" fill="#868686" filter="url(#b1)"/>
<path d="M68.2 53.6 Q73 51.2 79.2 53.2" stroke="#505050" stroke-width=".8" fill="none" opacity=".8"/>
<circle cx="76.5" cy="53.5" r="1.3" fill="#484848"/>
<path d="M94 54 Q97.6 52 101.8 53.4 Q98 55.4 94 54Z" fill="#848484" filter="url(#b1)"/>
<path d="M93.8 53.4 Q97.6 51.2 102 52.8" stroke="#505050" stroke-width=".8" fill="none" opacity=".8"/>
<circle cx="99.6" cy="53.4" r="1.2" fill="#4a4a4a"/>
<path d="M90 53 C91 58 92.4 63 94.6 67 L92 68 C90.4 63 89.4 58 89 53Z" fill="#7e7e7e" opacity=".7" filter="url(#b1)"/>
<path d="M83.2 62.5 C82.4 66 83.4 69.4 86 70.8 C87 68 88 65.6 88.6 62Z" fill="#525252" opacity=".6" filter="url(#b2)"/>
<path d="M86.2 70.6 Q89 72.4 92 71.4 L95.6 69.8 Q96.2 68.6 95.4 67.4" stroke="#4c4c4c" stroke-width="1" fill="none" opacity=".8"/>
<ellipse cx="90.2" cy="69.9" rx="2.2" ry="1.1" fill="#363636"/>
<path d="M97.2 58 C97.8 62 98.2 65 97.8 68.6" stroke="#5a5a5a" stroke-width="1.5" fill="none" opacity=".5" filter="url(#b1)"/>
<path d="M73.8 81.6 Q84 80.2 96.8 80.8" stroke="#4e4e4e" stroke-width="1.3" fill="none"/>
<path d="M76 79.4 Q85 78 95 78.8" stroke="#808080" stroke-width="1.1" fill="none" opacity=".8"/>
<ellipse cx="87" cy="87.4" rx="7" ry="1.8" fill="#5a5a5a" opacity=".6" filter="url(#b1)"/>
</g>
<path d="M33.8 52.2 C30.3 53.8 29.2 58 30 61.8 C31 66.5 34.5 71.6 40.5 74 C43.2 73.7 44.6 71 44.2 67.5 C43.2 61 39.7 54.3 33.8 52.2Z" fill="#767676"/>
<path d="M35.4 57 C34.2 60 35.6 64.6 39.4 68.6" stroke="#5a5a5a" stroke-width="1.4" fill="none"/>
<ellipse cx="41" cy="61.6" rx="1.3" ry="2.2" fill="#2e2e2e"/>
<path d="M40 54.6 C43.6 59.6 45.8 66 45.6 72.6" stroke="#4a4a4a" stroke-width="1.6" fill="none" opacity=".8" filter="url(#b1)"/>
</g></g>
<g transform="translate(1682.0 559.0)" filter="url(#b1)">
<g transform="translate(7.03 -40.1) scale(0.986 1.258)">
<path d="M9.3 122.1 C22 119 36 114.5 43.3 105 L43 75 L84 98 L83.5 113 C86 118 93 120.5 100.5 122.1 C98.5 131 88 137.8 74.2 137.6 C52 137 27 128.5 9.3 122.1Z" fill="url(#gQSh)"/>
<g clip-path="url(#qs)">
<path d="M42 74 L50 78 L50 104 L30 118 L20 118 L42 106Z" fill="#4c4c4c" opacity=".55" filter="url(#b2)"/>
<path d="M84.5 99 L78 99 L78 112 L92 124 L102 124 L84 112Z" fill="#505050" opacity=".5" filter="url(#b2)"/>
<ellipse cx="45" cy="134" rx="40" ry="7" fill="#484848" opacity=".5" filter="url(#b2)"/>
</g></g>
<g transform="translate(7.6 -6.57) scale(0.956 1.086)">
<path d="M43 74 C48 84 55 92 62 97 C69 101.5 77 103 85 102.6 L85 108 C75 108.6 64 105.6 56 99 C49 93 45 85 43 80Z" fill="#1c1c1c" opacity=".7" filter="url(#b2)"/>
<path d="M42.8 72.8 C48 82 55 90 62 95 C69 99.5 77 101 85.5 100.6 L85.5 104.4 C76 105 67.5 103 61 98.6 C53.6 93.4 47 84.6 42.8 75Z" fill="#0a0a0a" filter="url(#b1)"/>
<path d="M52 13.1 L43.3 12.6 C37 13.2 33 15.5 30.4 18.5 C25.5 21 21.5 26 18.2 32.5 C19.3 37 19.6 42 21.4 46.4 C22.3 50 24.3 53.4 27 55.2 L33.5 50 L36 24Z" fill="#6e6e6e" filter="url(#bun)"/>
<path d="M68 10.8 C79 10.8 87 14.5 92.7 20.1 C98.5 26 101.8 33 102.8 40.2 C103.6 44 104.4 47.5 104.3 51 C103.8 54.5 103 58 102.6 61 C102.6 66 102 72 101.2 77.3 C100.6 80.5 99.8 84 98.9 86.6 C97.8 90 96.4 93.2 94.3 95.8 C92 98.5 89.5 99.9 86.6 100 C82 100.2 78 99.8 74.2 98.9 C69.5 97 65.5 94.3 61.8 91.2 C57.5 87.5 54 84 51 80.4 L44.8 74.2 L41 73.4 L33.2 53.3 C31.5 49 30.3 44 30.1 38.6 C30.5 32.5 33 27 37.1 23.2 C40.5 19 45 15.5 51 13.1 C56 11.4 62 10.8 68 10.8Z" fill="url(#gQHead)"/>
<g clip-path="url(#qh)">
<path d="M30 20 C26 34 28 48 34 56 L40 50 C35 40 35 28 40 18Z" fill="#484848" opacity=".55" filter="url(#b2)"/>
<ellipse cx="56" cy="47" rx="9" ry="10" fill="#585858" opacity=".4" filter="url(#b3)"/>
<path d="M48 60 C50 70 55 79 62 86 L66 84 C59 76 56 68 55 59Z" fill="#525252" opacity=".5" filter="url(#b2)"/>
<path d="M46 76 C54 88 66 98 86 101" stroke="#4a4a4a" stroke-width="2.4" fill="none" opacity=".6" filter="url(#b1)"/>
<ellipse cx="74.5" cy="51.4" rx="8" ry="2.8" fill="#565656" opacity=".55" filter="url(#b2)"/>
<ellipse cx="98.8" cy="51.4" rx="5" ry="2.6" fill="#565656" opacity=".55" filter="url(#b2)"/>
<path d="M68.4 54.4 Q73 52.2 78.8 53.8 Q73.6 56 68.4 54.4Z" fill="#868686" filter="url(#b1)"/>
<path d="M68.2 53.6 Q73 51.2 79.2 53.2" stroke="#505050" stroke-width=".8" fill="none" opacity=".8"/>
<circle cx="76.5" cy="53.5" r="1.3" fill="#484848"/>
<path d="M94 54 Q97.6 52 101.8 53.4 Q98 55.4 94 54Z" fill="#848484" filter="url(#b1)"/>
<path d="M93.8 53.4 Q97.6 51.2 102 52.8" stroke="#505050" stroke-width=".8" fill="none" opacity=".8"/>
<circle cx="99.6" cy="53.4" r="1.2" fill="#4a4a4a"/>
<path d="M90 53 C91 58 92.4 63 94.6 67 L92 68 C90.4 63 89.4 58 89 53Z" fill="#7e7e7e" opacity=".7" filter="url(#b1)"/>
<path d="M83.2 62.5 C82.4 66 83.4 69.4 86 70.8 C87 68 88 65.6 88.6 62Z" fill="#525252" opacity=".6" filter="url(#b2)"/>
<path d="M86.2 70.6 Q89 72.4 92 71.4 L95.6 69.8 Q96.2 68.6 95.4 67.4" stroke="#4c4c4c" stroke-width="1" fill="none" opacity=".8"/>
<ellipse cx="90.2" cy="69.9" rx="2.2" ry="1.1" fill="#363636"/>
<path d="M97.2 58 C97.8 62 98.2 65 97.8 68.6" stroke="#5a5a5a" stroke-width="1.5" fill="none" opacity=".5" filter="url(#b1)"/>
<path d="M73.8 81.6 Q84 80.2 96.8 80.8" stroke="#4e4e4e" stroke-width="1.3" fill="none"/>
<path d="M76 79.4 Q85 78 95 78.8" stroke="#808080" stroke-width="1.1" fill="none" opacity=".8"/>
<ellipse cx="87" cy="87.4" rx="7" ry="1.8" fill="#5a5a5a" opacity=".6" filter="url(#b1)"/>
</g>
<path d="M33.8 52.2 C30.3 53.8 29.2 58 30 61.8 C31 66.5 34.5 71.6 40.5 74 C43.2 73.7 44.6 71 44.2 67.5 C43.2 61 39.7 54.3 33.8 52.2Z" fill="#767676"/>
<path d="M35.4 57 C34.2 60 35.6 64.6 39.4 68.6" stroke="#5a5a5a" stroke-width="1.4" fill="none"/>
<ellipse cx="41" cy="61.6" rx="1.3" ry="2.2" fill="#2e2e2e"/>
<path d="M40 54.6 C43.6 59.6 45.8 66 45.6 72.6" stroke="#4a4a4a" stroke-width="1.6" fill="none" opacity=".8" filter="url(#b1)"/>
</g></g>
<g transform="translate(1780.5 557.4)" filter="url(#b1)">
<g transform="translate(7.03 -40.1) scale(0.986 1.258)">
<path d="M9.3 122.1 C22 119 36 114.5 43.3 105 L43 75 L84 98 L83.5 113 C86 118 93 120.5 100.5 122.1 C98.5 131 88 137.8 74.2 137.6 C52 137 27 128.5 9.3 122.1Z" fill="url(#gQSh)"/>
<g clip-path="url(#qs)">
<path d="M42 74 L50 78 L50 104 L30 118 L20 118 L42 106Z" fill="#4c4c4c" opacity=".55" filter="url(#b2)"/>
<path d="M84.5 99 L78 99 L78 112 L92 124 L102 124 L84 112Z" fill="#505050" opacity=".5" filter="url(#b2)"/>
<ellipse cx="45" cy="134" rx="40" ry="7" fill="#484848" opacity=".5" filter="url(#b2)"/>
</g></g>
<g transform="translate(7.6 -6.57) scale(0.956 1.086)">
<path d="M43 74 C48 84 55 92 62 97 C69 101.5 77 103 85 102.6 L85 108 C75 108.6 64 105.6 56 99 C49 93 45 85 43 80Z" fill="#1c1c1c" opacity=".7" filter="url(#b2)"/>
<path d="M42.8 72.8 C48 82 55 90 62 95 C69 99.5 77 101 85.5 100.6 L85.5 104.4 C76 105 67.5 103 61 98.6 C53.6 93.4 47 84.6 42.8 75Z" fill="#0a0a0a" filter="url(#b1)"/>
<path d="M52 13.1 L43.3 12.6 C37 13.2 33 15.5 30.4 18.5 C25.5 21 21.5 26 18.2 32.5 C19.3 37 19.6 42 21.4 46.4 C22.3 50 24.3 53.4 27 55.2 L33.5 50 L36 24Z" fill="#6e6e6e" filter="url(#bun)"/>
<path d="M68 10.8 C79 10.8 87 14.5 92.7 20.1 C98.5 26 101.8 33 102.8 40.2 C103.6 44 104.4 47.5 104.3 51 C103.8 54.5 103 58 102.6 61 C102.6 66 102 72 101.2 77.3 C100.6 80.5 99.8 84 98.9 86.6 C97.8 90 96.4 93.2 94.3 95.8 C92 98.5 89.5 99.9 86.6 100 C82 100.2 78 99.8 74.2 98.9 C69.5 97 65.5 94.3 61.8 91.2 C57.5 87.5 54 84 51 80.4 L44.8 74.2 L41 73.4 L33.2 53.3 C31.5 49 30.3 44 30.1 38.6 C30.5 32.5 33 27 37.1 23.2 C40.5 19 45 15.5 51 13.1 C56 11.4 62 10.8 68 10.8Z" fill="url(#gQHead)"/>
<g clip-path="url(#qh)">
<path d="M30 20 C26 34 28 48 34 56 L40 50 C35 40 35 28 40 18Z" fill="#484848" opacity=".55" filter="url(#b2)"/>
<ellipse cx="56" cy="47" rx="9" ry="10" fill="#585858" opacity=".4" filter="url(#b3)"/>
<path d="M48 60 C50 70 55 79 62 86 L66 84 C59 76 56 68 55 59Z" fill="#525252" opacity=".5" filter="url(#b2)"/>
<path d="M46 76 C54 88 66 98 86 101" stroke="#4a4a4a" stroke-width="2.4" fill="none" opacity=".6" filter="url(#b1)"/>
<ellipse cx="74.5" cy="51.4" rx="8" ry="2.8" fill="#565656" opacity=".55" filter="url(#b2)"/>
<ellipse cx="98.8" cy="51.4" rx="5" ry="2.6" fill="#565656" opacity=".55" filter="url(#b2)"/>
<path d="M68.4 54.4 Q73 52.2 78.8 53.8 Q73.6 56 68.4 54.4Z" fill="#868686" filter="url(#b1)"/>
<path d="M68.2 53.6 Q73 51.2 79.2 53.2" stroke="#505050" stroke-width=".8" fill="none" opacity=".8"/>
<circle cx="76.5" cy="53.5" r="1.3" fill="#484848"/>
<path d="M94 54 Q97.6 52 101.8 53.4 Q98 55.4 94 54Z" fill="#848484" filter="url(#b1)"/>
<path d="M93.8 53.4 Q97.6 51.2 102 52.8" stroke="#505050" stroke-width=".8" fill="none" opacity=".8"/>
<circle cx="99.6" cy="53.4" r="1.2" fill="#4a4a4a"/>
<path d="M90 53 C91 58 92.4 63 94.6 67 L92 68 C90.4 63 89.4 58 89 53Z" fill="#7e7e7e" opacity=".7" filter="url(#b1)"/>
<path d="M83.2 62.5 C82.4 66 83.4 69.4 86 70.8 C87 68 88 65.6 88.6 62Z" fill="#525252" opacity=".6" filter="url(#b2)"/>
<path d="M86.2 70.6 Q89 72.4 92 71.4 L95.6 69.8 Q96.2 68.6 95.4 67.4" stroke="#4c4c4c" stroke-width="1" fill="none" opacity=".8"/>
<ellipse cx="90.2" cy="69.9" rx="2.2" ry="1.1" fill="#363636"/>
<path d="M97.2 58 C97.8 62 98.2 65 97.8 68.6" stroke="#5a5a5a" stroke-width="1.5" fill="none" opacity=".5" filter="url(#b1)"/>
<path d="M73.8 81.6 Q84 80.2 96.8 80.8" stroke="#4e4e4e" stroke-width="1.3" fill="none"/>
<path d="M76 79.4 Q85 78 95 78.8" stroke="#808080" stroke-width="1.1" fill="none" opacity=".8"/>
<ellipse cx="87" cy="87.4" rx="7" ry="1.8" fill="#5a5a5a" opacity=".6" filter="url(#b1)"/>
</g>
<path d="M33.8 52.2 C30.3 53.8 29.2 58 30 61.8 C31 66.5 34.5 71.6 40.5 74 C43.2 73.7 44.6 71 44.2 67.5 C43.2 61 39.7 54.3 33.8 52.2Z" fill="#767676"/>
<path d="M35.4 57 C34.2 60 35.6 64.6 39.4 68.6" stroke="#5a5a5a" stroke-width="1.4" fill="none"/>
<ellipse cx="41" cy="61.6" rx="1.3" ry="2.2" fill="#2e2e2e"/>
<path d="M40 54.6 C43.6 59.6 45.8 66 45.6 72.6" stroke="#4a4a4a" stroke-width="1.6" fill="none" opacity=".8" filter="url(#b1)"/>
</g></g>
<g transform="translate(1878.0 555.8)" filter="url(#b1)">
<g transform="translate(7.03 -40.1) scale(0.986 1.258)">
<path d="M9.3 122.1 C22 119 36 114.5 43.3 105 L43 75 L84 98 L83.5 113 C86 118 93 120.5 100.5 122.1 C98.5 131 88 137.8 74.2 137.6 C52 137 27 128.5 9.3 122.1Z" fill="url(#gQSh)"/>
<g clip-path="url(#qs)">
<path d="M42 74 L50 78 L50 104 L30 118 L20 118 L42 106Z" fill="#4c4c4c" opacity=".55" filter="url(#b2)"/>
<path d="M84.5 99 L78 99 L78 112 L92 124 L102 124 L84 112Z" fill="#505050" opacity=".5" filter="url(#b2)"/>
<ellipse cx="45" cy="134" rx="40" ry="7" fill="#484848" opacity=".5" filter="url(#b2)"/>
</g></g>
<g transform="translate(7.6 -6.57) scale(0.956 1.086)">
<path d="M43 74 C48 84 55 92 62 97 C69 101.5 77 103 85 102.6 L85 108 C75 108.6 64 105.6 56 99 C49 93 45 85 43 80Z" fill="#1c1c1c" opacity=".7" filter="url(#b2)"/>
<path d="M42.8 72.8 C48 82 55 90 62 95 C69 99.5 77 101 85.5 100.6 L85.5 104.4 C76 105 67.5 103 61 98.6 C53.6 93.4 47 84.6 42.8 75Z" fill="#0a0a0a" filter="url(#b1)"/>
<path d="M52 13.1 L43.3 12.6 C37 13.2 33 15.5 30.4 18.5 C25.5 21 21.5 26 18.2 32.5 C19.3 37 19.6 42 21.4 46.4 C22.3 50 24.3 53.4 27 55.2 L33.5 50 L36 24Z" fill="#6e6e6e" filter="url(#bun)"/>
<path d="M68 10.8 C79 10.8 87 14.5 92.7 20.1 C98.5 26 101.8 33 102.8 40.2 C103.6 44 104.4 47.5 104.3 51 C103.8 54.5 103 58 102.6 61 C102.6 66 102 72 101.2 77.3 C100.6 80.5 99.8 84 98.9 86.6 C97.8 90 96.4 93.2 94.3 95.8 C92 98.5 89.5 99.9 86.6 100 C82 100.2 78 99.8 74.2 98.9 C69.5 97 65.5 94.3 61.8 91.2 C57.5 87.5 54 84 51 80.4 L44.8 74.2 L41 73.4 L33.2 53.3 C31.5 49 30.3 44 30.1 38.6 C30.5 32.5 33 27 37.1 23.2 C40.5 19 45 15.5 51 13.1 C56 11.4 62 10.8 68 10.8Z" fill="url(#gQHead)"/>
<g clip-path="url(#qh)">
<path d="M30 20 C26 34 28 48 34 56 L40 50 C35 40 35 28 40 18Z" fill="#484848" opacity=".55" filter="url(#b2)"/>
<ellipse cx="56" cy="47" rx="9" ry="10" fill="#585858" opacity=".4" filter="url(#b3)"/>
<path d="M48 60 C50 70 55 79 62 86 L66 84 C59 76 56 68 55 59Z" fill="#525252" opacity=".5" filter="url(#b2)"/>
<path d="M46 76 C54 88 66 98 86 101" stroke="#4a4a4a" stroke-width="2.4" fill="none" opacity=".6" filter="url(#b1)"/>
<ellipse cx="74.5" cy="51.4" rx="8" ry="2.8" fill="#565656" opacity=".55" filter="url(#b2)"/>
<ellipse cx="98.8" cy="51.4" rx="5" ry="2.6" fill="#565656" opacity=".55" filter="url(#b2)"/>
<path d="M68.4 54.4 Q73 52.2 78.8 53.8 Q73.6 56 68.4 54.4Z" fill="#868686" filter="url(#b1)"/>
<path d="M68.2 53.6 Q73 51.2 79.2 53.2" stroke="#505050" stroke-width=".8" fill="none" opacity=".8"/>
<circle cx="76.5" cy="53.5" r="1.3" fill="#484848"/>
<path d="M94 54 Q97.6 52 101.8 53.4 Q98 55.4 94 54Z" fill="#848484" filter="url(#b1)"/>
<path d="M93.8 53.4 Q97.6 51.2 102 52.8" stroke="#505050" stroke-width=".8" fill="none" opacity=".8"/>
<circle cx="99.6" cy="53.4" r="1.2" fill="#4a4a4a"/>
<path d="M90 53 C91 58 92.4 63 94.6 67 L92 68 C90.4 63 89.4 58 89 53Z" fill="#7e7e7e" opacity=".7" filter="url(#b1)"/>
<path d="M83.2 62.5 C82.4 66 83.4 69.4 86 70.8 C87 68 88 65.6 88.6 62Z" fill="#525252" opacity=".6" filter="url(#b2)"/>
<path d="M86.2 70.6 Q89 72.4 92 71.4 L95.6 69.8 Q96.2 68.6 95.4 67.4" stroke="#4c4c4c" stroke-width="1" fill="none" opacity=".8"/>
<ellipse cx="90.2" cy="69.9" rx="2.2" ry="1.1" fill="#363636"/>
<path d="M97.2 58 C97.8 62 98.2 65 97.8 68.6" stroke="#5a5a5a" stroke-width="1.5" fill="none" opacity=".5" filter="url(#b1)"/>
<path d="M73.8 81.6 Q84 80.2 96.8 80.8" stroke="#4e4e4e" stroke-width="1.3" fill="none"/>
<path d="M76 79.4 Q85 78 95 78.8" stroke="#808080" stroke-width="1.1" fill="none" opacity=".8"/>
<ellipse cx="87" cy="87.4" rx="7" ry="1.8" fill="#5a5a5a" opacity=".6" filter="url(#b1)"/>
</g>
<path d="M33.8 52.2 C30.3 53.8 29.2 58 30 61.8 C31 66.5 34.5 71.6 40.5 74 C43.2 73.7 44.6 71 44.2 67.5 C43.2 61 39.7 54.3 33.8 52.2Z" fill="#767676"/>
<path d="M35.4 57 C34.2 60 35.6 64.6 39.4 68.6" stroke="#5a5a5a" stroke-width="1.4" fill="none"/>
<ellipse cx="41" cy="61.6" rx="1.3" ry="2.2" fill="#2e2e2e"/>
<path d="M40 54.6 C43.6 59.6 45.8 66 45.6 72.6" stroke="#4a4a4a" stroke-width="1.6" fill="none" opacity=".8" filter="url(#b1)"/>
</g></g>
<g transform="translate(1901.5 90.5)" filter="url(#b1)">
<g transform="">
<path d="M9.3 122.1 C22 119 36 114.5 43.3 105 L43 75 L84 98 L83.5 113 C86 118 93 120.5 100.5 122.1 C98.5 131 88 137.8 74.2 137.6 C52 137 27 128.5 9.3 122.1Z" fill="url(#gQSh)"/>
<g clip-path="url(#qs)">
<path d="M42 74 L50 78 L50 104 L30 118 L20 118 L42 106Z" fill="#4c4c4c" opacity=".55" filter="url(#b2)"/>
<path d="M84.5 99 L78 99 L78 112 L92 124 L102 124 L84 112Z" fill="#505050" opacity=".5" filter="url(#b2)"/>
<ellipse cx="45" cy="134" rx="40" ry="7" fill="#484848" opacity=".5" filter="url(#b2)"/>
</g></g>
<g transform="">
<path d="M43 74 C48 84 55 92 62 97 C69 101.5 77 103 85 102.6 L85 108 C75 108.6 64 105.6 56 99 C49 93 45 85 43 80Z" fill="#1c1c1c" opacity=".7" filter="url(#b2)"/>
<path d="M42.8 72.8 C48 82 55 90 62 95 C69 99.5 77 101 85.5 100.6 L85.5 104.4 C76 105 67.5 103 61 98.6 C53.6 93.4 47 84.6 42.8 75Z" fill="#0a0a0a" filter="url(#b1)"/>
<path d="M52 13.1 L43.3 12.6 C37 13.2 33 15.5 30.4 18.5 C25.5 21 21.5 26 18.2 32.5 C19.3 37 19.6 42 21.4 46.4 C22.3 50 24.3 53.4 27 55.2 L33.5 50 L36 24Z" fill="#6e6e6e" filter="url(#bun)"/>
<path d="M68 10.8 C79 10.8 87 14.5 92.7 20.1 C98.5 26 101.8 33 102.8 40.2 C103.6 44 104.4 47.5 104.3 51 C103.8 54.5 103 58 102.6 61 C102.6 66 102 72 101.2 77.3 C100.6 80.5 99.8 84 98.9 86.6 C97.8 90 96.4 93.2 94.3 95.8 C92 98.5 89.5 99.9 86.6 100 C82 100.2 78 99.8 74.2 98.9 C69.5 97 65.5 94.3 61.8 91.2 C57.5 87.5 54 84 51 80.4 L44.8 74.2 L41 73.4 L33.2 53.3 C31.5 49 30.3 44 30.1 38.6 C30.5 32.5 33 27 37.1 23.2 C40.5 19 45 15.5 51 13.1 C56 11.4 62 10.8 68 10.8Z" fill="url(#gQHead)"/>
<g clip-path="url(#qh)">
<path d="M30 20 C26 34 28 48 34 56 L40 50 C35 40 35 28 40 18Z" fill="#484848" opacity=".55" filter="url(#b2)"/>
<ellipse cx="56" cy="47" rx="9" ry="10" fill="#585858" opacity=".4" filter="url(#b3)"/>
<path d="M48 60 C50 70 55 79 62 86 L66 84 C59 76 56 68 55 59Z" fill="#525252" opacity=".5" filter="url(#b2)"/>
<path d="M46 76 C54 88 66 98 86 101" stroke="#4a4a4a" stroke-width="2.4" fill="none" opacity=".6" filter="url(#b1)"/>
<ellipse cx="74.5" cy="51.4" rx="8" ry="2.8" fill="#565656" opacity=".55" filter="url(#b2)"/>
<ellipse cx="98.8" cy="51.4" rx="5" ry="2.6" fill="#565656" opacity=".55" filter="url(#b2)"/>
<path d="M68.4 54.4 Q73 52.2 78.8 53.8 Q73.6 56 68.4 54.4Z" fill="#868686" filter="url(#b1)"/>
<path d="M68.2 53.6 Q73 51.2 79.2 53.2" stroke="#505050" stroke-width=".8" fill="none" opacity=".8"/>
<circle cx="76.5" cy="53.5" r="1.3" fill="#484848"/>
<path d="M94 54 Q97.6 52 101.8 53.4 Q98 55.4 94 54Z" fill="#848484" filter="url(#b1)"/>
<path d="M93.8 53.4 Q97.6 51.2 102 52.8" stroke="#505050" stroke-width=".8" fill="none" opacity=".8"/>
<circle cx="99.6" cy="53.4" r="1.2" fill="#4a4a4a"/>
<path d="M90 53 C91 58 92.4 63 94.6 67 L92 68 C90.4 63 89.4 58 89 53Z" fill="#7e7e7e" opacity=".7" filter="url(#b1)"/>
<path d="M83.2 62.5 C82.4 66 83.4 69.4 86 70.8 C87 68 88 65.6 88.6 62Z" fill="#525252" opacity=".6" filter="url(#b2)"/>
<path d="M86.2 70.6 Q89 72.4 92 71.4 L95.6 69.8 Q96.2 68.6 95.4 67.4" stroke="#4c4c4c" stroke-width="1" fill="none" opacity=".8"/>
<ellipse cx="90.2" cy="69.9" rx="2.2" ry="1.1" fill="#363636"/>
<path d="M97.2 58 C97.8 62 98.2 65 97.8 68.6" stroke="#5a5a5a" stroke-width="1.5" fill="none" opacity=".5" filter="url(#b1)"/>
<path d="M73.8 81.6 Q84 80.2 96.8 80.8" stroke="#4e4e4e" stroke-width="1.3" fill="none"/>
<path d="M76 79.4 Q85 78 95 78.8" stroke="#808080" stroke-width="1.1" fill="none" opacity=".8"/>
<ellipse cx="87" cy="87.4" rx="7" ry="1.8" fill="#5a5a5a" opacity=".6" filter="url(#b1)"/>
</g>
<path d="M33.8 52.2 C30.3 53.8 29.2 58 30 61.8 C31 66.5 34.5 71.6 40.5 74 C43.2 73.7 44.6 71 44.2 67.5 C43.2 61 39.7 54.3 33.8 52.2Z" fill="#767676"/>
<path d="M35.4 57 C34.2 60 35.6 64.6 39.4 68.6" stroke="#5a5a5a" stroke-width="1.4" fill="none"/>
<ellipse cx="41" cy="61.6" rx="1.3" ry="2.2" fill="#2e2e2e"/>
<path d="M40 54.6 C43.6 59.6 45.8 66 45.6 72.6" stroke="#4a4a4a" stroke-width="1.6" fill="none" opacity=".8" filter="url(#b1)"/>
</g></g>
<path fill="#52f2a2" d="M378.7 588.5 C371 589 366 592 362.8 595.7 C356 600 352 605 350 611.6 C347.5 616 346.6 622 346.8 627.5 L346.8 638 L342.9 638.7 C343.5 645 345 650 346.8 654.6 L350.8 664.2 L353.2 676.9 C355 682 357.5 686 360.4 689.6 L361.2 700.8 C357 704 352 706 346.8 707.2 L328.5 715.1 L327.7 723.1 L338.9 723.1 C341 726 344 728.5 346.8 730.3 C352 733 357 734.8 362.8 735.8 C370 737 377 737.5 383.5 737.4 C391 737 398 735.8 404.2 734.2 C411 732.5 417.5 729.5 423.3 726.3 C428 724 432 721.5 436 718.3 L450.4 719.1 L450.4 715.1 L429.6 705.6 C422 704 415 701.5 410.5 697.6 L408.9 686.5 C410.5 681 411.5 676 412.1 670.5 L416.9 659.4 C420 652 423 645.5 424.9 638.7 L420.1 635.5 L420.9 627.5 C421 623 420 618.5 418.5 614.8 C417.5 610.5 416 607 413.7 603.7 C410.5 599 406 595 401 592.5 C394 589.5 386 588.3 378.7 588.5Z"/>
<path d="M340 716 C360 727 400 728 438 713" stroke="#6adf9f" stroke-width="5" fill="none" opacity=".35" filter="url(#b2)"/>
<rect x="375.5" y="655.4" width="15.9" height="14.3" fill="none" stroke="#7ff0e6" stroke-width=".9" opacity=".85"/>
<path d="M382.7 599 V648.2" stroke="#c9ea4c" stroke-width="2.2"/>
<path d="M381.9 584.4 L385.9 600.6 H378.6Z" fill="#ffee0c"/>
<rect x="424.9" y="609.2" width="12.7" height="12" fill="#00008c"/>
<path d="M398.6 662.3 L410 661.9" stroke="#9a8a3a" stroke-width="1.8"/><path d="M410 661.9 L449 661" stroke="#d8170e" stroke-width="1.8"/>
<path d="M463.9 660.5 L448 656.6 V664.6Z" fill="#ff1c10"/>
<path d="M375.5 672.9 L381.9 665.8" stroke="#1a3ad0" stroke-width="1.2"/>
<circle cx="375.5" cy="672.9" r="3.4" fill="#0a10c8" stroke="#06206a" stroke-width=".8"/>
</svg>
<div id="win">
<div id="title"><span class="tl" style="left:5.8px;background:#fc5b57"></span><span class="tl" style="left:19.4px;background:#fdbc2e"></span><span class="tl" style="left:33.4px;background:#28c93f"></span><span id="ttext">Shape Editor</span></div>
<div id="inner">
<span class="menu" style="left:5.0px">File</span>
<span class="menu" style="left:28.5px">Edit</span>
<span class="menu" style="left:53.4px">Create</span>
<span class="menu" style="left:87.9px">Shapes</span>
<span class="menu" style="left:124.5px">Options</span>
<span class="menu" style="left:164.4px">Help</span>
<div class="tbtn" style="left:1.7px;width:92.5px"><span style="left:18.5px">Create Blend Shape</span></div>
<div class="tbtn" style="left:97.5px;width:62px"><span style="left:18.3px;letter-spacing:.3px">Add Target</span></div>
<div id="search"><span>Search...</span></div>
<div class="hd" style="left:2.7px;width:16.6px"></div>
<div class="hd" style="left:21px;width:163.5px"><span>Name</span></div>
<div class="hd" style="left:186px;width:356.7px"><span>Weight/Drivers</span></div>
<div class="hd" style="left:543.9px;width:19.2px"><span>Edit</span></div>
<div class="hd" style="left:564.7px;width:19.3px"><span>Key</span></div>
<div id="tree">
<span class="lab" style="top:0.00px;left:49.9px">Receiver_Shapes</span>
<div class="num" style="top:3.30px"><span>1.000</span></div>
<span class="lab" style="top:18.04px;left:63.6px">Receiver</span>
<div class="num" style="top:21.34px"><span>1.000</span></div>
<div class="edit" style="top:18.04px"><span>Edit</span></div>
<span class="lab" style="top:36.08px;left:49.9px">Face_Shapes</span>
<div class="num" style="top:39.38px"><span>1.000</span></div>
<span class="lab" style="top:54.12px;left:63.6px">Eyes_shapes</span>
<div class="num" style="top:57.42px"><span>1.000</span></div>
<span class="lab" style="top:72.16px;left:63.6px">Mouth_shapes</span>
<div class="num" style="top:75.46px"><span>1.000</span></div>
<span class="lab" style="top:90.20px;left:77.2px">Upper_Lip_Raiser_L</span>
<div class="num" style="top:93.50px"><span>0.000</span></div>
<div class="edit" style="top:90.20px"><span>Edit</span></div>
<span class="lab" style="top:108.24px;left:77.2px">Upper_Lip_Raiser_R</span>
<div class="num" style="top:111.54px"><span>0.000</span></div>
<div class="edit" style="top:108.24px"><span>Edit</span></div>
<span class="lab" style="top:126.28px;left:77.2px">Mouth_Wide_R</span>
<div class="num" style="top:129.58px"><span>0.000</span></div>
<div class="edit" style="top:126.28px"><span>Edit</span></div>
<span class="lab" style="top:144.32px;left:77.2px">Mouth_Wide_L</span>
<div class="num" style="top:147.62px"><span>0.000</span></div>
<div class="edit" style="top:144.32px"><span>Edit</span></div>
<span class="lab" style="top:162.36px;left:77.2px">Smile_R</span>
<div class="num" style="top:165.66px"><span>0.000</span></div>
<div class="edit" style="top:162.36px"><span>Edit</span></div>
<span class="lab" style="top:180.40px;left:77.2px">Smile_L</span>
<div class="num" style="top:183.70px"><span>0.000</span></div>
<div class="edit" style="top:180.40px"><span>Edit</span></div>
<span class="lab" style="top:198.44px;left:77.2px">MBP</span>
<div class="num" style="top:201.74px"><span>0.000</span></div>
<div class="edit" style="top:198.44px"><span>Edit</span></div>
<span class="lab" style="top:216.48px;left:77.2px">Mouth_Open_C</span>
<div class="num" style="top:219.78px"><span>0.000</span></div>
<div class="edit" style="top:216.48px"><span>Edit</span></div>
<span class="lab" style="top:234.52px;left:77.2px">Ooh_C</span>
<div class="num" style="top:237.82px"><span>0.000</span></div>
<div class="edit" style="top:234.52px"><span>Edit</span></div>
<span class="lab" style="top:252.56px;left:77.2px">Oh_C</span>
<div class="num" style="top:255.86px"><span>0.000</span></div>
<div class="edit" style="top:252.56px"><span>Edit</span></div>
<span class="lab" style="top:270.60px;left:77.2px">cheek_squint_R</span>
<div class="num" style="top:273.90px"><span>0.000</span></div>
<div class="edit" style="top:270.60px"><span>Edit</span></div>
<span class="lab" style="top:288.64px;left:77.2px">cheek_squint_L</span>
<div class="num" style="top:291.94px"><span>0.000</span></div>
<div class="edit" style="top:288.64px"><span>Edit</span></div>
<span class="lab" style="top:306.68px;left:77.2px">Lower_Lip_Lowered_R</span>
<div class="num" style="top:309.98px"><span>0.000</span></div>
<div class="edit" style="top:306.68px"><span>Edit</span></div>
<span class="lab" style="top:324.72px;left:77.2px">Lower_Lip_Lowered_L</span>
<div class="num" style="top:328.02px"><span>0.000</span></div>
<div class="edit" style="top:324.72px"><span>Edit</span></div>
<span class="lab" style="top:342.76px;left:77.2px">Jaw_Forward</span>
<div class="num" style="top:346.06px"><span>0.000</span></div>
<div class="edit" style="top:342.76px"><span>Edit</span></div>
<div class="selrow" style="top:360.60px"></div>
<div class="ledit" style="top:365.00px;left:78.3px"><span>Mouth_Wide</span></div>
<div class="nums" style="top:364.10px"><span>0.000</span></div>
<div class="edit" style="top:360.80px"><span>Edit</span></div>
<span class="lab" style="top:378.84px;left:63.6px">Nose_Shapes</span>
<div class="num" style="top:382.14px"><span>0.000</span></div>
<span class="lab" style="top:396.88px;left:77.2px">Nose_Wrinkler_L</span>
<div class="num" style="top:400.18px"><span>0.000</span></div>
<div class="edit" style="top:396.88px"><span>Edit</span></div>
<span class="lab" style="top:414.92px;left:77.2px">Nose_Wrinkler_R</span>
<div class="num" style="top:418.22px"><span>0.000</span></div>
<div class="edit" style="top:414.92px"><span>Edit</span></div>
<span class="lab" style="top:432.96px;left:63.6px">Brow_Shapes</span>
<div class="num" style="top:436.26px"><span>0.000</span></div>
<span class="lab" style="top:451.00px;left:77.2px">Brow_Raiser_R</span>
<div class="num" style="top:454.30px"><span>0.000</span></div>
<div class="edit" style="top:451.00px"><span>Edit</span></div>
<span class="lab" style="top:469.04px;left:77.2px">Brow_Raiser_L</span>
<div class="num" style="top:472.34px"><span>0.000</span></div>
<div class="edit" style="top:469.04px"><span>Edit</span></div>
<span class="lab" style="top:487.08px;left:77.2px">Brow_Outer_Raiser_R</span>
<div class="num" style="top:490.38px"><span>0.000</span></div>
<div class="edit" style="top:487.08px"><span>Edit</span></div>
<span class="lab" style="top:505.12px;left:77.2px">Brow_Squeeze_R</span>
<div class="num" style="top:508.42px"><span>0.000</span></div>
<div class="edit" style="top:505.12px"><span>Edit</span></div>
<span class="lab" style="top:523.16px;left:77.2px">Brow_Squeeze_L</span>
<div class="num" style="top:526.46px"><span>0.000</span></div>
<div class="edit" style="top:523.16px"><span>Edit</span></div>
<span class="lab" style="top:541.20px;left:77.2px">Brow_Outer_Raiser_L</span>
<div class="num" style="top:544.50px"><span>0.000</span></div>
<div class="edit" style="top:541.20px"><span>Edit</span></div>
<span class="lab" style="top:559.24px;left:49.9px">Eye_Lashes_Shapes</span>
<span class="lab" style="top:577.28px;left:63.6px">Left_Lashes_Upper_Shapes</span>
<div class="num" style="top:580.58px"><span>1.000</span></div>
<span class="lab" style="top:595.32px;left:77.2px">L_Lash_upper_eye_up</span>
<div class="numb" style="top:598.02px"><span>0.283</span></div>
<div class="edit" style="top:595.32px"><span>Edit</span></div>
<span class="lab" style="top:613.36px;left:77.2px">L_Lash_upper_eye_down</span>
<div class="numb" style="top:616.06px"><span>0.717</span></div>
<div class="edit" style="top:613.36px"><span>Edit</span></div>
<span class="lab" style="top:631.40px;left:77.2px">L_Lash_upper_Eye_Left</span>
<div class="numb" style="top:634.10px"><span>0.000</span></div>
<div class="edit" style="top:631.40px"><span>Edit</span></div>
<span class="lab" style="top:649.44px;left:77.2px">L_Lash_Upper_Eye_Right</span>
<div class="numb" style="top:652.14px"><span>1.000</span></div>
<div class="edit" style="top:649.44px"><span>Edit</span></div>
<span class="lab" style="top:667.48px;left:63.6px">Left_Lashes_Lower_Shapes</span>
<div class="num" style="top:670.78px"><span>1.000</span></div>
<span class="lab" style="top:685.52px;left:77.2px">L_Lash_lower_eye_down</span>
<div class="numb" style="top:688.22px"><span>0.717</span></div>
<div class="edit" style="top:685.52px"><span>Edit</span></div>
<span class="lab" style="top:703.56px;left:77.2px">L_Lash_lower_eye_up</span>
<div class="numb" style="top:706.26px"><span>0.283</span></div>
<div class="edit" style="top:703.56px"><span>Edit</span></div>
<span class="lab" style="top:721.60px;left:77.2px">L_Lash_Lower_Eye_Right</span>
<div class="numb" style="top:724.30px"><span>1.000</span></div>
<div class="edit" style="top:721.60px"><span>Edit</span></div>
<span class="lab" style="top:739.64px;left:77.2px">L_Lash_Lower_Eye_Left</span>
<div class="numb" style="top:742.34px"><span>0.000</span></div>
<div class="edit" style="top:739.64px"><span>Edit</span></div>
<span class="lab" style="top:757.68px;left:63.6px">Right_Lashes_Upper_Shapes</span>
<div class="num" style="top:760.98px"><span>1.000</span></div>
<span class="lab" style="top:775.72px;left:77.2px">R_Lash_upper_eye_down</span>
<div class="numb" style="top:778.42px"><span>0.701</span></div>
<div class="edit" style="top:775.72px"><span>Edit</span></div>
<span class="lab" style="top:793.76px;left:77.2px">R_Lash_upper_eye_up</span>
<div class="numb" style="top:796.46px"><span>0.299</span></div>
<div class="edit" style="top:793.76px"><span>Edit</span></div>
<span class="lab" style="top:811.80px;left:77.2px">R_Lash_Upper_Eye_Left</span>
<div class="numb" style="top:814.50px"><span>0.000</span></div>
<div class="edit" style="top:811.80px"><span>Edit</span></div>
</div>
<div id="sbar"></div><div id="shandle"></div>
</div>
</div>
<svg id="ov" width="1960" height="1068" viewBox="0 0 1960 1068">
<defs><clipPath id="treeclip"><rect x="1067.7" y="71.3" width="590" height="828.7"/></clipPath></defs>
<g clip-path="url(#treeclip)">
<path d="M1092.80 83.52V98.06" stroke="rgba(255,255,255,0.42)" stroke-width="1.3" fill="none"/>
<path d="M1093.45 98.06H1105.00" stroke="rgba(255,255,255,0.42)" stroke-width="1.3" fill="none"/>
<circle cx="1105.00" cy="98.06" r="1.5" fill="rgba(255,255,255,0.6)"/>
<path d="M1092.80 119.60V512.98" stroke="rgba(255,255,255,0.42)" stroke-width="1.3" fill="none"/>
<path d="M1093.45 134.14H1102.70" stroke="rgba(255,255,255,0.42)" stroke-width="1.3" fill="none"/>
<path d="M1093.45 152.18H1102.70" stroke="rgba(255,255,255,0.42)" stroke-width="1.3" fill="none"/>
<path d="M1093.45 458.86H1102.70" stroke="rgba(255,255,255,0.42)" stroke-width="1.3" fill="none"/>
<path d="M1093.45 512.98H1102.70" stroke="rgba(255,255,255,0.42)" stroke-width="1.3" fill="none"/>
<path d="M1106.30 155.68V440.82" stroke="rgba(255,255,255,0.42)" stroke-width="1.3" fill="none"/>
<path d="M1106.95 170.22H1118.50" stroke="rgba(255,255,255,0.42)" stroke-width="1.3" fill="none"/>
<circle cx="1118.50" cy="170.22" r="1.5" fill="rgba(255,255,255,0.6)"/>
<path d="M1106.95 188.26H1118.50" stroke="rgba(255,255,255,0.42)" stroke-width="1.3" fill="none"/>
<circle cx="1118.50" cy="188.26" r="1.5" fill="rgba(255,255,255,0.6)"/>
<path d="M1106.95 206.30H1118.50" stroke="rgba(255,255,255,0.42)" stroke-width="1.3" fill="none"/>
<circle cx="1118.50" cy="206.30" r="1.5" fill="rgba(255,255,255,0.6)"/>
<path d="M1106.95 224.34H1118.50" stroke="rgba(255,255,255,0.42)" stroke-width="1.3" fill="none"/>
<circle cx="1118.50" cy="224.34" r="1.5" fill="rgba(255,255,255,0.6)"/>
<path d="M1106.95 242.38H1118.50" stroke="rgba(255,255,255,0.42)" stroke-width="1.3" fill="none"/>
<circle cx="1118.50" cy="242.38" r="1.5" fill="rgba(255,255,255,0.6)"/>
<path d="M1106.95 260.42H1118.50" stroke="rgba(255,255,255,0.42)" stroke-width="1.3" fill="none"/>
<circle cx="1118.50" cy="260.42" r="1.5" fill="rgba(255,255,255,0.6)"/>
<path d="M1106.95 278.46H1118.50" stroke="rgba(255,255,255,0.42)" stroke-width="1.3" fill="none"/>
<circle cx="1118.50" cy="278.46" r="1.5" fill="rgba(255,255,255,0.6)"/>
<path d="M1106.95 296.50H1118.50" stroke="rgba(255,255,255,0.42)" stroke-width="1.3" fill="none"/>
<circle cx="1118.50" cy="296.50" r="1.5" fill="rgba(255,255,255,0.6)"/>
<path d="M1106.95 314.54H1118.50" stroke="rgba(255,255,255,0.42)" stroke-width="1.3" fill="none"/>
<circle cx="1118.50" cy="314.54" r="1.5" fill="rgba(255,255,255,0.6)"/>
<path d="M1106.95 332.58H1118.50" stroke="rgba(255,255,255,0.42)" stroke-width="1.3" fill="none"/>
<circle cx="1118.50" cy="332.58" r="1.5" fill="rgba(255,255,255,0.6)"/>
<path d="M1106.95 350.62H1118.50" stroke="rgba(255,255,255,0.42)" stroke-width="1.3" fill="none"/>
<circle cx="1118.50" cy="350.62" r="1.5" fill="rgba(255,255,255,0.6)"/>
<path d="M1106.95 368.66H1118.50" stroke="rgba(255,255,255,0.42)" stroke-width="1.3" fill="none"/>
<circle cx="1118.50" cy="368.66" r="1.5" fill="rgba(255,255,255,0.6)"/>
<path d="M1106.95 386.70H1118.50" stroke="rgba(255,255,255,0.42)" stroke-width="1.3" fill="none"/>
<circle cx="1118.50" cy="386.70" r="1.5" fill="rgba(255,255,255,0.6)"/>
<path d="M1106.95 404.74H1118.50" stroke="rgba(255,255,255,0.42)" stroke-width="1.3" fill="none"/>
<circle cx="1118.50" cy="404.74" r="1.5" fill="rgba(255,255,255,0.6)"/>
<path d="M1106.95 422.78H1118.50" stroke="rgba(255,255,255,0.42)" stroke-width="1.3" fill="none"/>
<circle cx="1118.50" cy="422.78" r="1.5" fill="rgba(255,255,255,0.6)"/>
<path d="M1106.95 440.82H1118.50" stroke="rgba(255,255,255,0.42)" stroke-width="1.3" fill="none"/>
<circle cx="1118.50" cy="440.82" r="1.5" fill="rgba(255,255,255,0.6)"/>
<path d="M1106.30 462.36V494.94" stroke="rgba(255,255,255,0.42)" stroke-width="1.3" fill="none"/>
<path d="M1106.95 476.90H1118.50" stroke="rgba(255,255,255,0.42)" stroke-width="1.3" fill="none"/>
<circle cx="1118.50" cy="476.90" r="1.5" fill="rgba(255,255,255,0.6)"/>
<path d="M1106.95 494.94H1118.50" stroke="rgba(255,255,255,0.42)" stroke-width="1.3" fill="none"/>
<circle cx="1118.50" cy="494.94" r="1.5" fill="rgba(255,255,255,0.6)"/>
<path d="M1106.30 516.48V621.22" stroke="rgba(255,255,255,0.42)" stroke-width="1.3" fill="none"/>
<path d="M1106.95 531.02H1118.50" stroke="rgba(255,255,255,0.42)" stroke-width="1.3" fill="none"/>
<circle cx="1118.50" cy="531.02" r="1.5" fill="rgba(255,255,255,0.6)"/>
<path d="M1106.95 549.06H1118.50" stroke="rgba(255,255,255,0.42)" stroke-width="1.3" fill="none"/>
<circle cx="1118.50" cy="549.06" r="1.5" fill="rgba(255,255,255,0.6)"/>
<path d="M1106.95 567.10H1118.50" stroke="rgba(255,255,255,0.42)" stroke-width="1.3" fill="none"/>
<circle cx="1118.50" cy="567.10" r="1.5" fill="rgba(255,255,255,0.6)"/>
<path d="M1106.95 585.14H1118.50" stroke="rgba(255,255,255,0.42)" stroke-width="1.3" fill="none"/>
<circle cx="1118.50" cy="585.14" r="1.5" fill="rgba(255,255,255,0.6)"/>
<path d="M1106.95 603.18H1118.50" stroke="rgba(255,255,255,0.42)" stroke-width="1.3" fill="none"/>
<circle cx="1118.50" cy="603.18" r="1.5" fill="rgba(255,255,255,0.6)"/>
<path d="M1106.95 621.22H1118.50" stroke="rgba(255,255,255,0.42)" stroke-width="1.3" fill="none"/>
<circle cx="1118.50" cy="621.22" r="1.5" fill="rgba(255,255,255,0.6)"/>
<path d="M1092.80 642.76V900.00" stroke="rgba(255,255,255,0.42)" stroke-width="1.3" fill="none"/>
<path d="M1093.45 657.30H1102.70" stroke="rgba(255,255,255,0.42)" stroke-width="1.3" fill="none"/>
<path d="M1093.45 747.50H1102.70" stroke="rgba(255,255,255,0.42)" stroke-width="1.3" fill="none"/>
<path d="M1093.45 837.70H1102.70" stroke="rgba(255,255,255,0.42)" stroke-width="1.3" fill="none"/>
<path d="M1106.30 660.80V729.46" stroke="rgba(255,255,255,0.42)" stroke-width="1.3" fill="none"/>
<path d="M1106.95 675.34H1118.50" stroke="rgba(255,255,255,0.42)" stroke-width="1.3" fill="none"/>
<circle cx="1118.50" cy="675.34" r="1.5" fill="rgba(255,255,255,0.6)"/>
<path d="M1106.95 693.38H1118.50" stroke="rgba(255,255,255,0.42)" stroke-width="1.3" fill="none"/>
<circle cx="1118.50" cy="693.38" r="1.5" fill="rgba(255,255,255,0.6)"/>
<path d="M1106.95 711.42H1118.50" stroke="rgba(255,255,255,0.42)" stroke-width="1.3" fill="none"/>
<circle cx="1118.50" cy="711.42" r="1.5" fill="rgba(255,255,255,0.6)"/>
<path d="M1106.95 729.46H1118.50" stroke="rgba(255,255,255,0.42)" stroke-width="1.3" fill="none"/>
<circle cx="1118.50" cy="729.46" r="1.5" fill="rgba(255,255,255,0.6)"/>
<path d="M1106.30 751.00V819.66" stroke="rgba(255,255,255,0.42)" stroke-width="1.3" fill="none"/>
<path d="M1106.95 765.54H1118.50" stroke="rgba(255,255,255,0.42)" stroke-width="1.3" fill="none"/>
<circle cx="1118.50" cy="765.54" r="1.5" fill="rgba(255,255,255,0.6)"/>
<path d="M1106.95 783.58H1118.50" stroke="rgba(255,255,255,0.42)" stroke-width="1.3" fill="none"/>
<circle cx="1118.50" cy="783.58" r="1.5" fill="rgba(255,255,255,0.6)"/>
<path d="M1106.95 801.62H1118.50" stroke="rgba(255,255,255,0.42)" stroke-width="1.3" fill="none"/>
<circle cx="1118.50" cy="801.62" r="1.5" fill="rgba(255,255,255,0.6)"/>
<path d="M1106.95 819.66H1118.50" stroke="rgba(255,255,255,0.42)" stroke-width="1.3" fill="none"/>
<circle cx="1118.50" cy="819.66" r="1.5" fill="rgba(255,255,255,0.6)"/>
<path d="M1106.30 841.20V900.00" stroke="rgba(255,255,255,0.42)" stroke-width="1.3" fill="none"/>
<path d="M1106.95 855.74H1118.50" stroke="rgba(255,255,255,0.42)" stroke-width="1.3" fill="none"/>
<circle cx="1118.50" cy="855.74" r="1.5" fill="rgba(255,255,255,0.6)"/>
<path d="M1106.95 873.78H1118.50" stroke="rgba(255,255,255,0.42)" stroke-width="1.3" fill="none"/>
<circle cx="1118.50" cy="873.78" r="1.5" fill="rgba(255,255,255,0.6)"/>
<path d="M1106.95 891.82H1118.50" stroke="rgba(255,255,255,0.42)" stroke-width="1.3" fill="none"/>
<circle cx="1118.50" cy="891.82" r="1.5" fill="rgba(255,255,255,0.6)"/>
<rect x="1089.70" y="77.02" width="6.2" height="6.0" rx="0.8" fill="#3f3f41" stroke="#969696" stroke-width="1"/>
<path d="M1090.20 80.72h5.2" stroke="#1c1c1c" stroke-width="1.2"/>
<path d="M1089.70 79.72h6.2" stroke="#969696" stroke-width="0.9"/>
<rect x="1089.70" y="113.10" width="6.2" height="6.0" rx="0.8" fill="#3f3f41" stroke="#969696" stroke-width="1"/>
<path d="M1090.20 116.80h5.2" stroke="#1c1c1c" stroke-width="1.2"/>
<path d="M1089.70 115.80h6.2" stroke="#969696" stroke-width="0.9"/>
<rect x="1103.20" y="131.14" width="6.2" height="6.0" rx="0.8" fill="#3f3f41" stroke="#969696" stroke-width="1"/>
<path d="M1103.70 134.84h5.2" stroke="#1c1c1c" stroke-width="1.2"/>
<path d="M1103.20 133.84h6.2" stroke="#969696" stroke-width="0.9"/>
<path d="M1106.30 132.24v3.8" stroke="rgba(255,255,255,0.42)" stroke-width="0.9"/>
<rect x="1103.20" y="149.18" width="6.2" height="6.0" rx="0.8" fill="#3f3f41" stroke="#969696" stroke-width="1"/>
<path d="M1103.70 152.88h5.2" stroke="#1c1c1c" stroke-width="1.2"/>
<path d="M1103.20 151.88h6.2" stroke="#969696" stroke-width="0.9"/>
<rect x="1103.20" y="455.86" width="6.2" height="6.0" rx="0.8" fill="#3f3f41" stroke="#969696" stroke-width="1"/>
<path d="M1103.70 459.56h5.2" stroke="#1c1c1c" stroke-width="1.2"/>
<path d="M1103.20 458.56h6.2" stroke="#969696" stroke-width="0.9"/>
<rect x="1103.20" y="509.98" width="6.2" height="6.0" rx="0.8" fill="#3f3f41" stroke="#969696" stroke-width="1"/>
<path d="M1103.70 513.68h5.2" stroke="#1c1c1c" stroke-width="1.2"/>
<path d="M1103.20 512.68h6.2" stroke="#969696" stroke-width="0.9"/>
<rect x="1089.70" y="636.26" width="6.2" height="6.0" rx="0.8" fill="#3f3f41" stroke="#969696" stroke-width="1"/>
<path d="M1090.20 639.96h5.2" stroke="#1c1c1c" stroke-width="1.2"/>
<path d="M1089.70 638.96h6.2" stroke="#969696" stroke-width="0.9"/>
<rect x="1103.20" y="654.30" width="6.2" height="6.0" rx="0.8" fill="#3f3f41" stroke="#969696" stroke-width="1"/>
<path d="M1103.70 658.00h5.2" stroke="#1c1c1c" stroke-width="1.2"/>
<path d="M1103.20 657.00h6.2" stroke="#969696" stroke-width="0.9"/>
<rect x="1103.20" y="744.50" width="6.2" height="6.0" rx="0.8" fill="#3f3f41" stroke="#969696" stroke-width="1"/>
<path d="M1103.70 748.20h5.2" stroke="#1c1c1c" stroke-width="1.2"/>
<path d="M1103.20 747.20h6.2" stroke="#969696" stroke-width="0.9"/>
<rect x="1103.20" y="834.70" width="6.2" height="6.0" rx="0.8" fill="#3f3f41" stroke="#969696" stroke-width="1"/>
<path d="M1103.70 838.40h5.2" stroke="#1c1c1c" stroke-width="1.2"/>
<path d="M1103.20 837.40h6.2" stroke="#969696" stroke-width="0.9"/>
<circle cx="1076.2" cy="80.47" r="3.7" fill="#fff" stroke="#000" stroke-width="1.5"/>
<circle cx="1639.3" cy="80.27" r="3.5" fill="#000"/>
<g transform="translate(1107.00 80.47)"><circle cx="-2.3" cy="-2.2" r="2.9" fill="#2c2c2c" stroke="#d0d0d0" stroke-width="1.2"/><circle cx="0.6" cy="0.9" r="2.9" fill="#8c8c8c" stroke="#d0d0d0" stroke-width="1.2"/><rect x="1.3" y="2.6" width="3.4" height="3.2" fill="#3a3a3a" stroke="#d0d0d0" stroke-width="0.9"/></g>
<path d="M1294.4 79.52H1422.2" stroke="#000" stroke-width="2.4"/>
<rect x="1417.60" y="75.92" width="4.4" height="7.4" rx="1.4" fill="#cfcfcf" stroke="#2c2c2c" stroke-width="0.7"/>
<circle cx="1076.2" cy="98.51" r="3.7" fill="#fff" stroke="#000" stroke-width="1.5"/>
<circle cx="1639.3" cy="98.31" r="3.5" fill="#000"/>
<circle cx="1121.00" cy="98.51" r="4.7" fill="#d9995f" stroke="#2a1c10" stroke-width="0.6"/>
<circle cx="1121.00" cy="98.51" r="2.2" fill="none" stroke="#c98a52" stroke-width="0.7"/>
<circle cx="1121.00" cy="98.51" r="0.6" fill="#b87a45"/>
<path d="M1294.4 97.56H1422.2" stroke="#000" stroke-width="2.4"/>
<rect x="1417.60" y="93.96" width="4.4" height="7.4" rx="1.4" fill="#cfcfcf" stroke="#2c2c2c" stroke-width="0.7"/>
<circle cx="1076.2" cy="116.55" r="3.7" fill="#fff" stroke="#000" stroke-width="1.5"/>
<circle cx="1639.3" cy="116.35" r="3.5" fill="#000"/>
<g transform="translate(1107.00 116.55)"><circle cx="-2.3" cy="-2.2" r="2.9" fill="#2c2c2c" stroke="#d0d0d0" stroke-width="1.2"/><circle cx="0.6" cy="0.9" r="2.9" fill="#8c8c8c" stroke="#d0d0d0" stroke-width="1.2"/><rect x="1.3" y="2.6" width="3.4" height="3.2" fill="#3a3a3a" stroke="#d0d0d0" stroke-width="0.9"/></g>
<path d="M1294.4 115.60H1422.2" stroke="#000" stroke-width="2.4"/>
<rect x="1417.60" y="112.00" width="4.4" height="7.4" rx="1.4" fill="#cfcfcf" stroke="#2c2c2c" stroke-width="0.7"/>
<circle cx="1076.2" cy="134.59" r="3.7" fill="#fff" stroke="#000" stroke-width="1.5"/>
<circle cx="1639.3" cy="134.39" r="3.5" fill="#000"/>
<g transform="translate(1121.00 134.59)"><path d="M-4.6 -4.2h3.4l1 1.3h4.8v6.8h-9.2z" fill="#d6d6d6"/></g>
<path d="M1294.4 133.64H1422.2" stroke="#000" stroke-width="2.4"/>
<rect x="1417.60" y="130.04" width="4.4" height="7.4" rx="1.4" fill="#cfcfcf" stroke="#2c2c2c" stroke-width="0.7"/>
<circle cx="1076.2" cy="152.63" r="3.7" fill="#fff" stroke="#000" stroke-width="1.5"/>
<circle cx="1639.3" cy="152.43" r="3.5" fill="#000"/>
<g transform="translate(1121.00 152.63)"><path d="M-4.6 -4.2h3.2l1 1.2h4v1.6h-6.4l-1.8 5.2z" fill="#bdbdbd"/><path d="M-2.4 -1h8l-1.8 4.9h-8.2z" fill="#e2e2e2"/></g>
<path d="M1294.4 151.68H1422.2" stroke="#000" stroke-width="2.4"/>
<rect x="1417.60" y="148.08" width="4.4" height="7.4" rx="1.4" fill="#cfcfcf" stroke="#2c2c2c" stroke-width="0.7"/>
<circle cx="1076.2" cy="170.67" r="3.7" fill="#fff" stroke="#000" stroke-width="1.5"/>
<circle cx="1639.3" cy="170.47" r="3.5" fill="#000"/>
<circle cx="1134.40" cy="170.67" r="4.7" fill="#d9995f" stroke="#2a1c10" stroke-width="0.6"/>
<circle cx="1134.40" cy="170.67" r="2.2" fill="none" stroke="#c98a52" stroke-width="0.7"/>
<circle cx="1134.40" cy="170.67" r="0.6" fill="#b87a45"/>
<path d="M1294.4 169.72H1422.2" stroke="#000" stroke-width="2.4"/>
<rect x="1293.60" y="166.12" width="4.4" height="7.4" rx="1.4" fill="#cfcfcf" stroke="#2c2c2c" stroke-width="0.7"/>
<circle cx="1076.2" cy="188.71" r="3.7" fill="#fff" stroke="#000" stroke-width="1.5"/>
<circle cx="1639.3" cy="188.51" r="3.5" fill="#000"/>
<circle cx="1134.40" cy="188.71" r="4.7" fill="#d9995f" stroke="#2a1c10" stroke-width="0.6"/>
<circle cx="1134.40" cy="188.71" r="2.2" fill="none" stroke="#c98a52" stroke-width="0.7"/>
<circle cx="1134.40" cy="188.71" r="0.6" fill="#b87a45"/>
<path d="M1294.4 187.76H1422.2" stroke="#000" stroke-width="2.4"/>
<rect x="1293.60" y="184.16" width="4.4" height="7.4" rx="1.4" fill="#cfcfcf" stroke="#2c2c2c" stroke-width="0.7"/>
<circle cx="1076.2" cy="206.75" r="3.7" fill="#fff" stroke="#000" stroke-width="1.5"/>
<circle cx="1639.3" cy="206.55" r="3.5" fill="#000"/>
<circle cx="1134.40" cy="206.75" r="4.7" fill="#d9995f" stroke="#2a1c10" stroke-width="0.6"/>
<circle cx="1134.40" cy="206.75" r="2.2" fill="none" stroke="#c98a52" stroke-width="0.7"/>
<circle cx="1134.40" cy="206.75" r="0.6" fill="#b87a45"/>
<path d="M1294.4 205.80H1422.2" stroke="#000" stroke-width="2.4"/>
<rect x="1293.60" y="202.20" width="4.4" height="7.4" rx="1.4" fill="#cfcfcf" stroke="#2c2c2c" stroke-width="0.7"/>
<circle cx="1076.2" cy="224.79" r="3.7" fill="#fff" stroke="#000" stroke-width="1.5"/>
<circle cx="1639.3" cy="224.59" r="3.5" fill="#000"/>
<circle cx="1134.40" cy="224.79" r="4.7" fill="#d9995f" stroke="#2a1c10" stroke-width="0.6"/>
<circle cx="1134.40" cy="224.79" r="2.2" fill="none" stroke="#c98a52" stroke-width="0.7"/>
<circle cx="1134.40" cy="224.79" r="0.6" fill="#b87a45"/>
<path d="M1294.4 223.84H1422.2" stroke="#000" stroke-width="2.4"/>
<rect x="1293.60" y="220.24" width="4.4" height="7.4" rx="1.4" fill="#cfcfcf" stroke="#2c2c2c" stroke-width="0.7"/>
<circle cx="1076.2" cy="242.83" r="3.7" fill="#fff" stroke="#000" stroke-width="1.5"/>
<circle cx="1639.3" cy="242.63" r="3.5" fill="#000"/>
<circle cx="1134.40" cy="242.83" r="4.7" fill="#d9995f" stroke="#2a1c10" stroke-width="0.6"/>
<circle cx="1134.40" cy="242.83" r="2.2" fill="none" stroke="#c98a52" stroke-width="0.7"/>
<circle cx="1134.40" cy="242.83" r="0.6" fill="#b87a45"/>
<path d="M1294.4 241.88H1422.2" stroke="#000" stroke-width="2.4"/>
<rect x="1293.60" y="238.28" width="4.4" height="7.4" rx="1.4" fill="#cfcfcf" stroke="#2c2c2c" stroke-width="0.7"/>
<circle cx="1076.2" cy="260.87" r="3.7" fill="#fff" stroke="#000" stroke-width="1.5"/>
<circle cx="1639.3" cy="260.67" r="3.5" fill="#000"/>
<circle cx="1134.40" cy="260.87" r="4.7" fill="#d9995f" stroke="#2a1c10" stroke-width="0.6"/>
<circle cx="1134.40" cy="260.87" r="2.2" fill="none" stroke="#c98a52" stroke-width="0.7"/>
<circle cx="1134.40" cy="260.87" r="0.6" fill="#b87a45"/>
<path d="M1294.4 259.92H1422.2" stroke="#000" stroke-width="2.4"/>
<rect x="1293.60" y="256.32" width="4.4" height="7.4" rx="1.4" fill="#cfcfcf" stroke="#2c2c2c" stroke-width="0.7"/>
<circle cx="1076.2" cy="278.91" r="3.7" fill="#fff" stroke="#000" stroke-width="1.5"/>
<circle cx="1639.3" cy="278.71" r="3.5" fill="#000"/>
<circle cx="1134.40" cy="278.91" r="4.7" fill="#d9995f" stroke="#2a1c10" stroke-width="0.6"/>
<circle cx="1134.40" cy="278.91" r="2.2" fill="none" stroke="#c98a52" stroke-width="0.7"/>
<circle cx="1134.40" cy="278.91" r="0.6" fill="#b87a45"/>
<path d="M1294.4 277.96H1422.2" stroke="#000" stroke-width="2.4"/>
<rect x="1293.60" y="274.36" width="4.4" height="7.4" rx="1.4" fill="#cfcfcf" stroke="#2c2c2c" stroke-width="0.7"/>
<circle cx="1076.2" cy="296.95" r="3.7" fill="#fff" stroke="#000" stroke-width="1.5"/>
<circle cx="1639.3" cy="296.75" r="3.5" fill="#000"/>
<circle cx="1134.40" cy="296.95" r="4.7" fill="#d9995f" stroke="#2a1c10" stroke-width="0.6"/>
<circle cx="1134.40" cy="296.95" r="2.2" fill="none" stroke="#c98a52" stroke-width="0.7"/>
<circle cx="1134.40" cy="296.95" r="0.6" fill="#b87a45"/>
<path d="M1294.4 296.00H1422.2" stroke="#000" stroke-width="2.4"/>
<rect x="1293.60" y="292.40" width="4.4" height="7.4" rx="1.4" fill="#cfcfcf" stroke="#2c2c2c" stroke-width="0.7"/>
<circle cx="1076.2" cy="314.99" r="3.7" fill="#fff" stroke="#000" stroke-width="1.5"/>
<circle cx="1639.3" cy="314.79" r="3.5" fill="#000"/>
<circle cx="1134.40" cy="314.99" r="4.7" fill="#d9995f" stroke="#2a1c10" stroke-width="0.6"/>
<circle cx="1134.40" cy="314.99" r="2.2" fill="none" stroke="#c98a52" stroke-width="0.7"/>
<circle cx="1134.40" cy="314.99" r="0.6" fill="#b87a45"/>
<path d="M1294.4 314.04H1422.2" stroke="#000" stroke-width="2.4"/>
<rect x="1293.60" y="310.44" width="4.4" height="7.4" rx="1.4" fill="#cfcfcf" stroke="#2c2c2c" stroke-width="0.7"/>
<circle cx="1076.2" cy="333.03" r="3.7" fill="#fff" stroke="#000" stroke-width="1.5"/>
<circle cx="1639.3" cy="332.83" r="3.5" fill="#000"/>
<circle cx="1134.40" cy="333.03" r="4.7" fill="#d9995f" stroke="#2a1c10" stroke-width="0.6"/>
<circle cx="1134.40" cy="333.03" r="2.2" fill="none" stroke="#c98a52" stroke-width="0.7"/>
<circle cx="1134.40" cy="333.03" r="0.6" fill="#b87a45"/>
<path d="M1294.4 332.08H1422.2" stroke="#000" stroke-width="2.4"/>
<rect x="1293.60" y="328.48" width="4.4" height="7.4" rx="1.4" fill="#cfcfcf" stroke="#2c2c2c" stroke-width="0.7"/>
<circle cx="1076.2" cy="351.07" r="3.7" fill="#fff" stroke="#000" stroke-width="1.5"/>
<circle cx="1639.3" cy="350.87" r="3.5" fill="#000"/>
<circle cx="1134.40" cy="351.07" r="4.7" fill="#d9995f" stroke="#2a1c10" stroke-width="0.6"/>
<circle cx="1134.40" cy="351.07" r="2.2" fill="none" stroke="#c98a52" stroke-width="0.7"/>
<circle cx="1134.40" cy="351.07" r="0.6" fill="#b87a45"/>
<path d="M1294.4 350.12H1422.2" stroke="#000" stroke-width="2.4"/>
<rect x="1293.60" y="346.52" width="4.4" height="7.4" rx="1.4" fill="#cfcfcf" stroke="#2c2c2c" stroke-width="0.7"/>
<circle cx="1076.2" cy="369.11" r="3.7" fill="#fff" stroke="#000" stroke-width="1.5"/>
<circle cx="1639.3" cy="368.91" r="3.5" fill="#000"/>
<circle cx="1134.40" cy="369.11" r="4.7" fill="#d9995f" stroke="#2a1c10" stroke-width="0.6"/>
<circle cx="1134.40" cy="369.11" r="2.2" fill="none" stroke="#c98a52" stroke-width="0.7"/>
<circle cx="1134.40" cy="369.11" r="0.6" fill="#b87a45"/>
<path d="M1294.4 368.16H1422.2" stroke="#000" stroke-width="2.4"/>
<rect x="1293.60" y="364.56" width="4.4" height="7.4" rx="1.4" fill="#cfcfcf" stroke="#2c2c2c" stroke-width="0.7"/>
<circle cx="1076.2" cy="387.15" r="3.7" fill="#fff" stroke="#000" stroke-width="1.5"/>
<circle cx="1639.3" cy="386.95" r="3.5" fill="#000"/>
<circle cx="1134.40" cy="387.15" r="4.7" fill="#d9995f" stroke="#2a1c10" stroke-width="0.6"/>
<circle cx="1134.40" cy="387.15" r="2.2" fill="none" stroke="#c98a52" stroke-width="0.7"/>
<circle cx="1134.40" cy="387.15" r="0.6" fill="#b87a45"/>
<path d="M1294.4 386.20H1422.2" stroke="#000" stroke-width="2.4"/>
<rect x="1293.60" y="382.60" width="4.4" height="7.4" rx="1.4" fill="#cfcfcf" stroke="#2c2c2c" stroke-width="0.7"/>
<circle cx="1076.2" cy="405.19" r="3.7" fill="#fff" stroke="#000" stroke-width="1.5"/>
<circle cx="1639.3" cy="404.99" r="3.5" fill="#000"/>
<circle cx="1134.40" cy="405.19" r="4.7" fill="#d9995f" stroke="#2a1c10" stroke-width="0.6"/>
<circle cx="1134.40" cy="405.19" r="2.2" fill="none" stroke="#c98a52" stroke-width="0.7"/>
<circle cx="1134.40" cy="405.19" r="0.6" fill="#b87a45"/>
<path d="M1294.4 404.24H1422.2" stroke="#000" stroke-width="2.4"/>
<rect x="1293.60" y="400.64" width="4.4" height="7.4" rx="1.4" fill="#cfcfcf" stroke="#2c2c2c" stroke-width="0.7"/>
<circle cx="1076.2" cy="423.23" r="3.7" fill="#fff" stroke="#000" stroke-width="1.5"/>
<circle cx="1639.3" cy="423.03" r="3.5" fill="#000"/>
<circle cx="1134.40" cy="423.23" r="4.7" fill="#d9995f" stroke="#2a1c10" stroke-width="0.6"/>
<circle cx="1134.40" cy="423.23" r="2.2" fill="none" stroke="#c98a52" stroke-width="0.7"/>
<circle cx="1134.40" cy="423.23" r="0.6" fill="#b87a45"/>
<path d="M1294.4 422.28H1422.2" stroke="#000" stroke-width="2.4"/>
<rect x="1293.60" y="418.68" width="4.4" height="7.4" rx="1.4" fill="#cfcfcf" stroke="#2c2c2c" stroke-width="0.7"/>
<circle cx="1076.2" cy="441.27" r="3.7" fill="#fff" stroke="#000" stroke-width="1.5"/>
<circle cx="1639.3" cy="441.07" r="3.5" fill="#000"/>
<circle cx="1134.40" cy="441.27" r="4.7" fill="#d9995f" stroke="#2a1c10" stroke-width="0.6"/>
<circle cx="1134.40" cy="441.27" r="2.2" fill="none" stroke="#c98a52" stroke-width="0.7"/>
<circle cx="1134.40" cy="441.27" r="0.6" fill="#b87a45"/>
<path d="M1294.4 440.32H1422.2" stroke="#000" stroke-width="2.4"/>
<rect x="1293.60" y="436.72" width="4.4" height="7.4" rx="1.4" fill="#c4d4e2" stroke="#6a9abc" stroke-width="0.7"/>
<circle cx="1076.2" cy="459.31" r="3.7" fill="#fff" stroke="#000" stroke-width="1.5"/>
<circle cx="1639.3" cy="459.11" r="3.5" fill="#000"/>
<g transform="translate(1121.00 459.31)"><path d="M-4.6 -4.2h3.2l1 1.2h4v1.6h-6.4l-1.8 5.2z" fill="#bdbdbd"/><path d="M-2.4 -1h8l-1.8 4.9h-8.2z" fill="#e2e2e2"/></g>
<path d="M1294.4 458.36H1422.2" stroke="#000" stroke-width="2.4"/>
<rect x="1293.60" y="454.76" width="4.4" height="7.4" rx="1.4" fill="#cfcfcf" stroke="#2c2c2c" stroke-width="0.7"/>
<circle cx="1076.2" cy="477.35" r="3.7" fill="#fff" stroke="#000" stroke-width="1.5"/>
<circle cx="1639.3" cy="477.15" r="3.5" fill="#000"/>
<circle cx="1134.40" cy="477.35" r="4.7" fill="#d9995f" stroke="#2a1c10" stroke-width="0.6"/>
<circle cx="1134.40" cy="477.35" r="2.2" fill="none" stroke="#c98a52" stroke-width="0.7"/>
<circle cx="1134.40" cy="477.35" r="0.6" fill="#b87a45"/>
<path d="M1294.4 476.40H1422.2" stroke="#000" stroke-width="2.4"/>
<rect x="1293.60" y="472.80" width="4.4" height="7.4" rx="1.4" fill="#cfcfcf" stroke="#2c2c2c" stroke-width="0.7"/>
<circle cx="1076.2" cy="495.39" r="3.7" fill="#fff" stroke="#000" stroke-width="1.5"/>
<circle cx="1639.3" cy="495.19" r="3.5" fill="#000"/>
<circle cx="1134.40" cy="495.39" r="4.7" fill="#d9995f" stroke="#2a1c10" stroke-width="0.6"/>
<circle cx="1134.40" cy="495.39" r="2.2" fill="none" stroke="#c98a52" stroke-width="0.7"/>
<circle cx="1134.40" cy="495.39" r="0.6" fill="#b87a45"/>
<path d="M1294.4 494.44H1422.2" stroke="#000" stroke-width="2.4"/>
<rect x="1293.60" y="490.84" width="4.4" height="7.4" rx="1.4" fill="#cfcfcf" stroke="#2c2c2c" stroke-width="0.7"/>
<circle cx="1076.2" cy="513.43" r="3.7" fill="#fff" stroke="#000" stroke-width="1.5"/>
<circle cx="1639.3" cy="513.23" r="3.5" fill="#000"/>
<g transform="translate(1121.00 513.43)"><path d="M-4.6 -4.2h3.2l1 1.2h4v1.6h-6.4l-1.8 5.2z" fill="#bdbdbd"/><path d="M-2.4 -1h8l-1.8 4.9h-8.2z" fill="#e2e2e2"/></g>
<path d="M1294.4 512.48H1422.2" stroke="#000" stroke-width="2.4"/>
<rect x="1293.60" y="508.88" width="4.4" height="7.4" rx="1.4" fill="#cfcfcf" stroke="#2c2c2c" stroke-width="0.7"/>
<circle cx="1076.2" cy="531.47" r="3.7" fill="#fff" stroke="#000" stroke-width="1.5"/>
<circle cx="1639.3" cy="531.27" r="3.5" fill="#000"/>
<circle cx="1134.40" cy="531.47" r="4.7" fill="#d9995f" stroke="#2a1c10" stroke-width="0.6"/>
<circle cx="1134.40" cy="531.47" r="2.2" fill="none" stroke="#c98a52" stroke-width="0.7"/>
<circle cx="1134.40" cy="531.47" r="0.6" fill="#b87a45"/>
<path d="M1294.4 530.52H1422.2" stroke="#000" stroke-width="2.4"/>
<rect x="1293.60" y="526.92" width="4.4" height="7.4" rx="1.4" fill="#cfcfcf" stroke="#2c2c2c" stroke-width="0.7"/>
<circle cx="1076.2" cy="549.51" r="3.7" fill="#fff" stroke="#000" stroke-width="1.5"/>
<circle cx="1639.3" cy="549.31" r="3.5" fill="#000"/>
<circle cx="1134.40" cy="549.51" r="4.7" fill="#d9995f" stroke="#2a1c10" stroke-width="0.6"/>
<circle cx="1134.40" cy="549.51" r="2.2" fill="none" stroke="#c98a52" stroke-width="0.7"/>
<circle cx="1134.40" cy="549.51" r="0.6" fill="#b87a45"/>
<path d="M1294.4 548.56H1422.2" stroke="#000" stroke-width="2.4"/>
<rect x="1293.60" y="544.96" width="4.4" height="7.4" rx="1.4" fill="#cfcfcf" stroke="#2c2c2c" stroke-width="0.7"/>
<circle cx="1076.2" cy="567.55" r="3.7" fill="#fff" stroke="#000" stroke-width="1.5"/>
<circle cx="1639.3" cy="567.35" r="3.5" fill="#000"/>
<circle cx="1134.40" cy="567.55" r="4.7" fill="#d9995f" stroke="#2a1c10" stroke-width="0.6"/>
<circle cx="1134.40" cy="567.55" r="2.2" fill="none" stroke="#c98a52" stroke-width="0.7"/>
<circle cx="1134.40" cy="567.55" r="0.6" fill="#b87a45"/>
<path d="M1294.4 566.60H1422.2" stroke="#000" stroke-width="2.4"/>
<rect x="1293.60" y="563.00" width="4.4" height="7.4" rx="1.4" fill="#cfcfcf" stroke="#2c2c2c" stroke-width="0.7"/>
<circle cx="1076.2" cy="585.59" r="3.7" fill="#fff" stroke="#000" stroke-width="1.5"/>
<circle cx="1639.3" cy="585.39" r="3.5" fill="#000"/>
<circle cx="1134.40" cy="585.59" r="4.7" fill="#d9995f" stroke="#2a1c10" stroke-width="0.6"/>
<circle cx="1134.40" cy="585.59" r="2.2" fill="none" stroke="#c98a52" stroke-width="0.7"/>
<circle cx="1134.40" cy="585.59" r="0.6" fill="#b87a45"/>
<path d="M1294.4 584.64H1422.2" stroke="#000" stroke-width="2.4"/>
<rect x="1293.60" y="581.04" width="4.4" height="7.4" rx="1.4" fill="#cfcfcf" stroke="#2c2c2c" stroke-width="0.7"/>
<circle cx="1076.2" cy="603.63" r="3.7" fill="#fff" stroke="#000" stroke-width="1.5"/>
<circle cx="1639.3" cy="603.43" r="3.5" fill="#000"/>
<circle cx="1134.40" cy="603.63" r="4.7" fill="#d9995f" stroke="#2a1c10" stroke-width="0.6"/>
<circle cx="1134.40" cy="603.63" r="2.2" fill="none" stroke="#c98a52" stroke-width="0.7"/>
<circle cx="1134.40" cy="603.63" r="0.6" fill="#b87a45"/>
<path d="M1294.4 602.68H1422.2" stroke="#000" stroke-width="2.4"/>
<rect x="1293.60" y="599.08" width="4.4" height="7.4" rx="1.4" fill="#cfcfcf" stroke="#2c2c2c" stroke-width="0.7"/>
<circle cx="1076.2" cy="621.67" r="3.7" fill="#fff" stroke="#000" stroke-width="1.5"/>
<circle cx="1639.3" cy="621.47" r="3.5" fill="#000"/>
<circle cx="1134.40" cy="621.67" r="4.7" fill="#d9995f" stroke="#2a1c10" stroke-width="0.6"/>
<circle cx="1134.40" cy="621.67" r="2.2" fill="none" stroke="#c98a52" stroke-width="0.7"/>
<circle cx="1134.40" cy="621.67" r="0.6" fill="#b87a45"/>
<path d="M1294.4 620.72H1422.2" stroke="#000" stroke-width="2.4"/>
<rect x="1293.60" y="617.12" width="4.4" height="7.4" rx="1.4" fill="#cfcfcf" stroke="#2c2c2c" stroke-width="0.7"/>
<circle cx="1076.2" cy="639.71" r="3.7" fill="#fff" stroke="#000" stroke-width="1.5"/>
<circle cx="1639.3" cy="639.51" r="3.5" fill="#000"/>
<g transform="translate(1107.00 639.71)"><path d="M-4.6 -4.2h3.2l1 1.2h4v1.6h-6.4l-1.8 5.2z" fill="#bdbdbd"/><path d="M-2.4 -1h8l-1.8 4.9h-8.2z" fill="#e2e2e2"/></g>
<circle cx="1076.2" cy="657.75" r="3.7" fill="#fff" stroke="#000" stroke-width="1.5"/>
<circle cx="1639.3" cy="657.55" r="3.5" fill="#000"/>
<g transform="translate(1121.00 657.75)"><circle cx="-2.3" cy="-2.2" r="2.9" fill="#2c2c2c" stroke="#d0d0d0" stroke-width="1.2"/><circle cx="0.6" cy="0.9" r="2.9" fill="#8c8c8c" stroke="#d0d0d0" stroke-width="1.2"/><rect x="1.3" y="2.6" width="3.4" height="3.2" fill="#3a3a3a" stroke="#d0d0d0" stroke-width="0.9"/></g>
<path d="M1294.4 656.80H1422.2" stroke="#000" stroke-width="2.4"/>
<rect x="1417.60" y="653.20" width="4.4" height="7.4" rx="1.4" fill="#cfcfcf" stroke="#2c2c2c" stroke-width="0.7"/>
<circle cx="1076.2" cy="675.79" r="3.7" fill="#fff" stroke="#000" stroke-width="1.5"/>
<circle cx="1639.3" cy="675.59" r="3.5" fill="#000"/>
<circle cx="1134.40" cy="675.79" r="4.7" fill="#d9995f" stroke="#2a1c10" stroke-width="0.6"/>
<circle cx="1134.40" cy="675.79" r="2.2" fill="none" stroke="#c98a52" stroke-width="0.7"/>
<circle cx="1134.40" cy="675.79" r="0.6" fill="#b87a45"/>
<path d="M1294.4 674.84H1422.2" stroke="#000" stroke-width="2.4"/>
<rect x="1328.69" y="671.24" width="4.4" height="7.4" rx="1.4" fill="#cfcfcf" stroke="#2c2c2c" stroke-width="0.7"/>
<circle cx="1076.2" cy="693.83" r="3.7" fill="#fff" stroke="#000" stroke-width="1.5"/>
<circle cx="1639.3" cy="693.63" r="3.5" fill="#000"/>
<circle cx="1134.40" cy="693.83" r="4.7" fill="#d9995f" stroke="#2a1c10" stroke-width="0.6"/>
<circle cx="1134.40" cy="693.83" r="2.2" fill="none" stroke="#c98a52" stroke-width="0.7"/>
<circle cx="1134.40" cy="693.83" r="0.6" fill="#b87a45"/>
<path d="M1294.4 692.88H1422.2" stroke="#000" stroke-width="2.4"/>
<rect x="1382.51" y="689.28" width="4.4" height="7.4" rx="1.4" fill="#cfcfcf" stroke="#2c2c2c" stroke-width="0.7"/>
<circle cx="1076.2" cy="711.87" r="3.7" fill="#fff" stroke="#000" stroke-width="1.5"/>
<circle cx="1639.3" cy="711.67" r="3.5" fill="#000"/>
<circle cx="1134.40" cy="711.87" r="4.7" fill="#d9995f" stroke="#2a1c10" stroke-width="0.6"/>
<circle cx="1134.40" cy="711.87" r="2.2" fill="none" stroke="#c98a52" stroke-width="0.7"/>
<circle cx="1134.40" cy="711.87" r="0.6" fill="#b87a45"/>
<path d="M1294.4 710.92H1422.2" stroke="#000" stroke-width="2.4"/>
<rect x="1293.60" y="707.32" width="4.4" height="7.4" rx="1.4" fill="#cfcfcf" stroke="#2c2c2c" stroke-width="0.7"/>
<circle cx="1076.2" cy="729.91" r="3.7" fill="#fff" stroke="#000" stroke-width="1.5"/>
<circle cx="1639.3" cy="729.71" r="3.5" fill="#000"/>
<circle cx="1134.40" cy="729.91" r="4.7" fill="#d9995f" stroke="#2a1c10" stroke-width="0.6"/>
<circle cx="1134.40" cy="729.91" r="2.2" fill="none" stroke="#c98a52" stroke-width="0.7"/>
<circle cx="1134.40" cy="729.91" r="0.6" fill="#b87a45"/>
<path d="M1294.4 728.96H1422.2" stroke="#000" stroke-width="2.4"/>
<rect x="1417.60" y="725.36" width="4.4" height="7.4" rx="1.4" fill="#cfcfcf" stroke="#2c2c2c" stroke-width="0.7"/>
<circle cx="1076.2" cy="747.95" r="3.7" fill="#fff" stroke="#000" stroke-width="1.5"/>
<circle cx="1639.3" cy="747.75" r="3.5" fill="#000"/>
<g transform="translate(1121.00 747.95)"><circle cx="-2.3" cy="-2.2" r="2.9" fill="#2c2c2c" stroke="#d0d0d0" stroke-width="1.2"/><circle cx="0.6" cy="0.9" r="2.9" fill="#8c8c8c" stroke="#d0d0d0" stroke-width="1.2"/><rect x="1.3" y="2.6" width="3.4" height="3.2" fill="#3a3a3a" stroke="#d0d0d0" stroke-width="0.9"/></g>
<path d="M1294.4 747.00H1422.2" stroke="#000" stroke-width="2.4"/>
<rect x="1417.60" y="743.40" width="4.4" height="7.4" rx="1.4" fill="#cfcfcf" stroke="#2c2c2c" stroke-width="0.7"/>
<circle cx="1076.2" cy="765.99" r="3.7" fill="#fff" stroke="#000" stroke-width="1.5"/>
<circle cx="1639.3" cy="765.79" r="3.5" fill="#000"/>
<circle cx="1134.40" cy="765.99" r="4.7" fill="#d9995f" stroke="#2a1c10" stroke-width="0.6"/>
<circle cx="1134.40" cy="765.99" r="2.2" fill="none" stroke="#c98a52" stroke-width="0.7"/>
<circle cx="1134.40" cy="765.99" r="0.6" fill="#b87a45"/>
<path d="M1294.4 765.04H1422.2" stroke="#000" stroke-width="2.4"/>
<rect x="1382.51" y="761.44" width="4.4" height="7.4" rx="1.4" fill="#cfcfcf" stroke="#2c2c2c" stroke-width="0.7"/>
<circle cx="1076.2" cy="784.03" r="3.7" fill="#fff" stroke="#000" stroke-width="1.5"/>
<circle cx="1639.3" cy="783.83" r="3.5" fill="#000"/>
<circle cx="1134.40" cy="784.03" r="4.7" fill="#d9995f" stroke="#2a1c10" stroke-width="0.6"/>
<circle cx="1134.40" cy="784.03" r="2.2" fill="none" stroke="#c98a52" stroke-width="0.7"/>
<circle cx="1134.40" cy="784.03" r="0.6" fill="#b87a45"/>
<path d="M1294.4 783.08H1422.2" stroke="#000" stroke-width="2.4"/>
<rect x="1328.69" y="779.48" width="4.4" height="7.4" rx="1.4" fill="#cfcfcf" stroke="#2c2c2c" stroke-width="0.7"/>
<circle cx="1076.2" cy="802.07" r="3.7" fill="#fff" stroke="#000" stroke-width="1.5"/>
<circle cx="1639.3" cy="801.87" r="3.5" fill="#000"/>
<circle cx="1134.40" cy="802.07" r="4.7" fill="#d9995f" stroke="#2a1c10" stroke-width="0.6"/>
<circle cx="1134.40" cy="802.07" r="2.2" fill="none" stroke="#c98a52" stroke-width="0.7"/>
<circle cx="1134.40" cy="802.07" r="0.6" fill="#b87a45"/>
<path d="M1294.4 801.12H1422.2" stroke="#000" stroke-width="2.4"/>
<rect x="1417.60" y="797.52" width="4.4" height="7.4" rx="1.4" fill="#cfcfcf" stroke="#2c2c2c" stroke-width="0.7"/>
<circle cx="1076.2" cy="820.11" r="3.7" fill="#fff" stroke="#000" stroke-width="1.5"/>
<circle cx="1639.3" cy="819.91" r="3.5" fill="#000"/>
<circle cx="1134.40" cy="820.11" r="4.7" fill="#d9995f" stroke="#2a1c10" stroke-width="0.6"/>
<circle cx="1134.40" cy="820.11" r="2.2" fill="none" stroke="#c98a52" stroke-width="0.7"/>
<circle cx="1134.40" cy="820.11" r="0.6" fill="#b87a45"/>
<path d="M1294.4 819.16H1422.2" stroke="#000" stroke-width="2.4"/>
<rect x="1293.60" y="815.56" width="4.4" height="7.4" rx="1.4" fill="#cfcfcf" stroke="#2c2c2c" stroke-width="0.7"/>
<circle cx="1076.2" cy="838.15" r="3.7" fill="#fff" stroke="#000" stroke-width="1.5"/>
<circle cx="1639.3" cy="837.95" r="3.5" fill="#000"/>
<g transform="translate(1121.00 838.15)"><circle cx="-2.3" cy="-2.2" r="2.9" fill="#2c2c2c" stroke="#d0d0d0" stroke-width="1.2"/><circle cx="0.6" cy="0.9" r="2.9" fill="#8c8c8c" stroke="#d0d0d0" stroke-width="1.2"/><rect x="1.3" y="2.6" width="3.4" height="3.2" fill="#3a3a3a" stroke="#d0d0d0" stroke-width="0.9"/></g>
<path d="M1294.4 837.20H1422.2" stroke="#000" stroke-width="2.4"/>
<rect x="1417.60" y="833.60" width="4.4" height="7.4" rx="1.4" fill="#cfcfcf" stroke="#2c2c2c" stroke-width="0.7"/>
<circle cx="1076.2" cy="856.19" r="3.7" fill="#fff" stroke="#000" stroke-width="1.5"/>
<circle cx="1639.3" cy="855.99" r="3.5" fill="#000"/>
<circle cx="1134.40" cy="856.19" r="4.7" fill="#d9995f" stroke="#2a1c10" stroke-width="0.6"/>
<circle cx="1134.40" cy="856.19" r="2.2" fill="none" stroke="#c98a52" stroke-width="0.7"/>
<circle cx="1134.40" cy="856.19" r="0.6" fill="#b87a45"/>
<path d="M1294.4 855.24H1422.2" stroke="#000" stroke-width="2.4"/>
<rect x="1380.52" y="851.64" width="4.4" height="7.4" rx="1.4" fill="#cfcfcf" stroke="#2c2c2c" stroke-width="0.7"/>
<circle cx="1076.2" cy="874.23" r="3.7" fill="#fff" stroke="#000" stroke-width="1.5"/>
<circle cx="1639.3" cy="874.03" r="3.5" fill="#000"/>
<circle cx="1134.40" cy="874.23" r="4.7" fill="#d9995f" stroke="#2a1c10" stroke-width="0.6"/>
<circle cx="1134.40" cy="874.23" r="2.2" fill="none" stroke="#c98a52" stroke-width="0.7"/>
<circle cx="1134.40" cy="874.23" r="0.6" fill="#b87a45"/>
<path d="M1294.4 873.28H1422.2" stroke="#000" stroke-width="2.4"/>
<rect x="1330.68" y="869.68" width="4.4" height="7.4" rx="1.4" fill="#cfcfcf" stroke="#2c2c2c" stroke-width="0.7"/>
<circle cx="1076.2" cy="892.27" r="3.7" fill="#fff" stroke="#000" stroke-width="1.5"/>
<circle cx="1639.3" cy="892.07" r="3.5" fill="#000"/>
<circle cx="1134.40" cy="892.27" r="4.7" fill="#d9995f" stroke="#2a1c10" stroke-width="0.6"/>
<circle cx="1134.40" cy="892.27" r="2.2" fill="none" stroke="#c98a52" stroke-width="0.7"/>
<circle cx="1134.40" cy="892.27" r="0.6" fill="#b87a45"/>
<path d="M1294.4 891.32H1422.2" stroke="#000" stroke-width="2.4"/>
<rect x="1293.60" y="887.72" width="4.4" height="7.4" rx="1.4" fill="#cfcfcf" stroke="#2c2c2c" stroke-width="0.7"/>
</g>
<!-- toolbar: create blend shape icon -->
<g transform="translate(1076.3 47.6)">
<circle cx="-2.2" cy="-1.6" r="2.9" fill="#5a5a5a" stroke="#d8d8d8" stroke-width="1.1"/>
<circle cx="0.4" cy="1.2" r="2.7" fill="#8a8a8a" stroke="#d8d8d8" stroke-width="1.1"/>
<rect x="1" y="2.8" width="3" height="2.9" fill="#4a4a4a" stroke="#d8d8d8" stroke-width="0.8"/>
<path d="M3.6 -5.6v4.6M1.3 -3.3h4.6" stroke="#f4f4f4" stroke-width="1.3" fill="none"/>
</g>
<!-- toolbar: add target icon -->
<g transform="translate(1171.5 48)">
<circle cx="-0.6" cy="0.8" r="3.9" fill="#7a7a7a" stroke="#d4d4d4" stroke-width="1.1"/>
<circle cx="-0.6" cy="0.8" r="1.5" fill="none" stroke="#bdbdbd" stroke-width="0.8"/>
<path d="M3.4 -5.6v4.6M1.1 -3.3h4.6" stroke="#f4f4f4" stroke-width="1.3" fill="none"/>
</g>
<!-- bracket icon left of search -->
<g fill="none" stroke="#7a7a7a" stroke-width="0.9" stroke-dasharray="1.4 1">
<rect x="1496" y="42.6" width="8" height="10" rx="1.6"/>
</g>
<!-- search dropdown arrow -->
<path d="M1602.4 46.8h7.2l-3.6 3.6z" fill="#d6d6d6"/>
<!-- folder plus -->
<g transform="translate(1614.1 41.5)">
<path d="M0 3.6h3.6l1.4 1.5h5.3v6.2H0z" fill="#d9d9d9"/>
<path d="M8.6 0v5M6.1 2.5h5" stroke="#3a3a3a" stroke-width="2.4" fill="none"/>
<path d="M8.6 0.3v4.4M6.4 2.5h4.4" stroke="#ededed" stroke-width="1.3" fill="none"/>
</g>
<!-- dim circle -->
<path d="M1633.6 52.6a4.6 4.6 0 1 1 4.8 0" fill="none" stroke="#5c5c5c" stroke-width="1.1"/>
<!-- trash -->
<g transform="translate(1647.8 42)">
<path d="M1.2 3.4h6l-.3 7.4H1.5z" fill="#d2d2d2"/>
<path d="M0.2 2.2h8v1.1h-8z" fill="#d8d8d8"/>
<path d="M2.8 0.6h2.8v1.2H2.8z" fill="#d0d0d0"/>
<path d="M2.9 4.4v5.4M4.2 4.4v5.4M5.5 4.4v5.4" stroke="#9a9a9a" stroke-width="0.5"/>
</g>
<!-- header eye -->
<g transform="translate(1076.4 64)">
<path d="M-4.6 0C-2.8 -3.6 2.8 -3.6 4.6 0C2.8 3.6 -2.8 3.6 -4.6 0z" fill="#dcdcdc"/>
<circle cx="0" cy="-0.2" r="2.3" fill="#3c3c3c"/>
<circle cx="0.9" cy="-0.9" r="0.8" fill="#8a8a8a"/>
</g>
<!-- scrollbar arrows -->
<path d="M1650.6 62.8l3.4 -4l3.4 4z" fill="#cfcfcf"/>
<path d="M1650.2 893.2h6.6l-3.3 3.8z" fill="#d6d6d6"/>
<!-- cursor -->
<g transform="translate(1189.6 233.6)">
<path d="M0 0V11.2L2.6 8.8L4.9 14.2L7 13.3L4.7 8L8.3 7.8z" fill="#fff" stroke="#000" stroke-width="1.1" stroke-linejoin="round"/>
</g>

</svg>
</body></html>
